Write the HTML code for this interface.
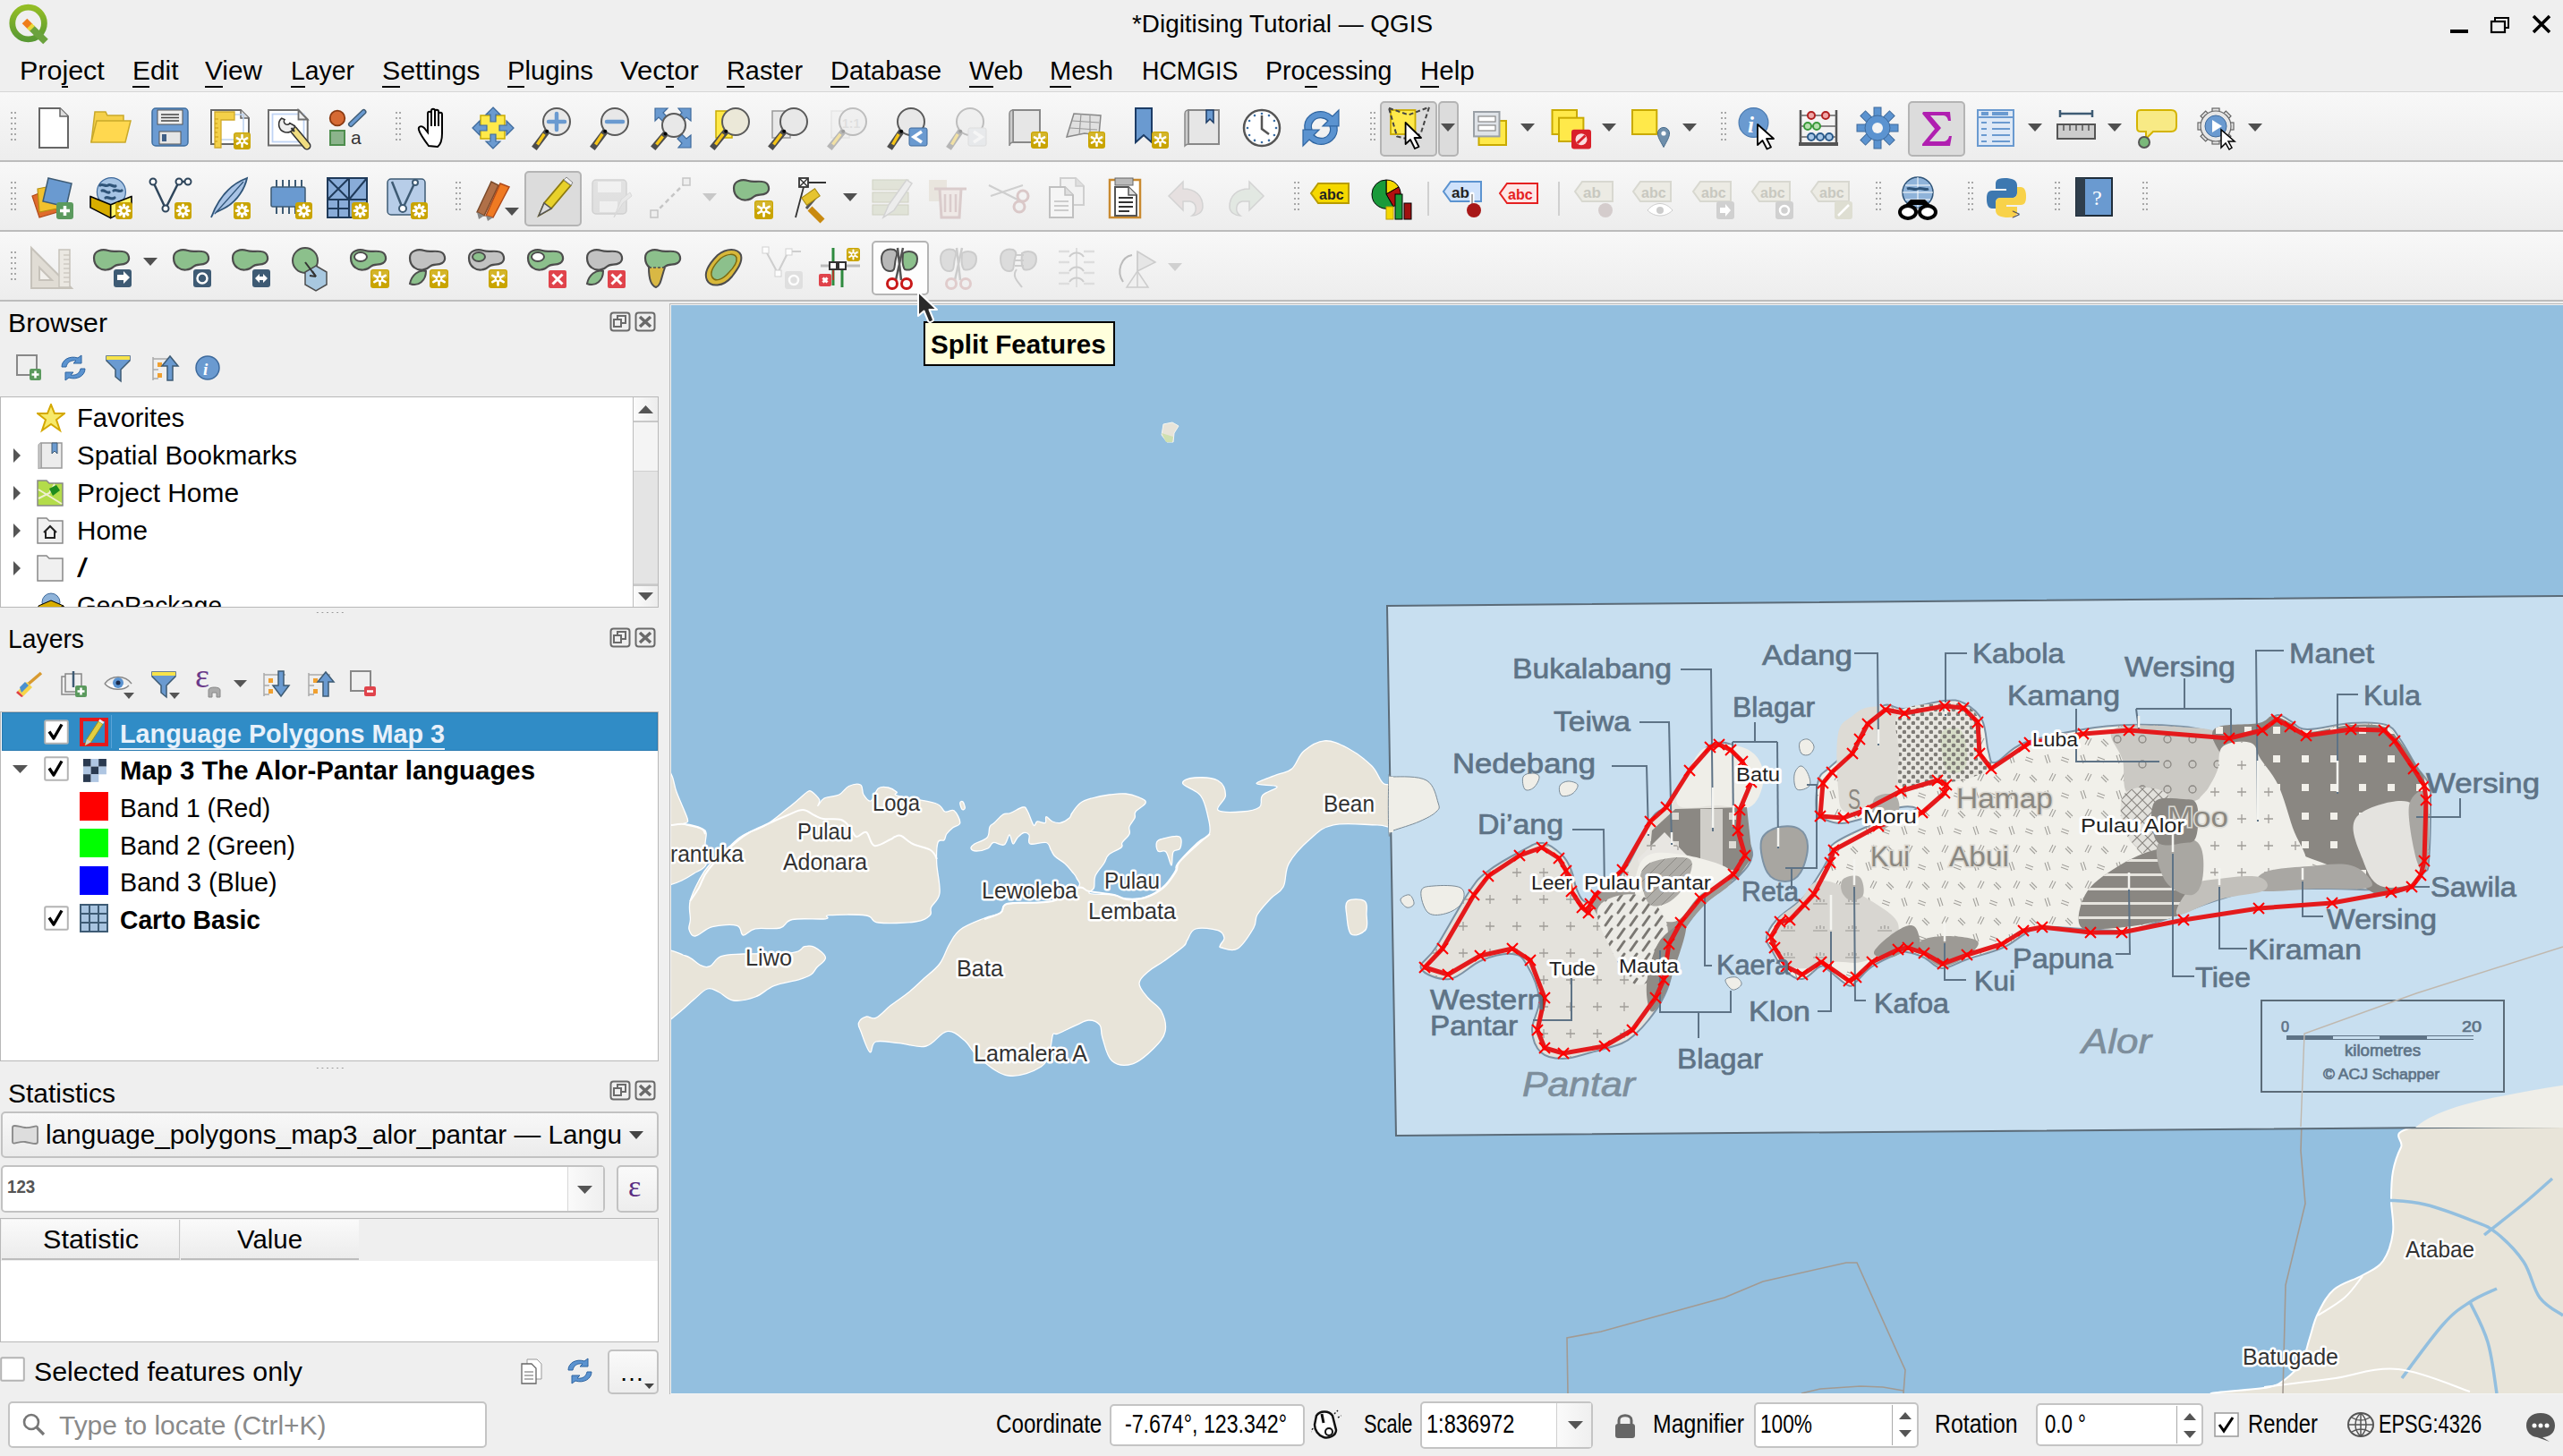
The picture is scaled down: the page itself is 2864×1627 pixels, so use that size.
<!DOCTYPE html><html><head><meta charset="utf-8"><style>
*{box-sizing:border-box}
html,body{margin:0;padding:0}
body{width:2864px;height:1627px;overflow:hidden;position:relative;background:#efefef;font-family:"Liberation Sans",sans-serif;color:#000}
.a{position:absolute}
.t{position:absolute;white-space:pre;line-height:1}
.menu span{position:absolute;top:64px;font-size:29px;white-space:pre;line-height:1}
.u{text-decoration:underline;text-underline-offset:6px;text-decoration-thickness:2px}
.tbrow{position:absolute;left:0;width:2864px;height:78px;background:linear-gradient(#f8f8f8,#ededed);border-bottom:2px solid #bcbcbc}
.hdl{position:absolute;width:8px;height:36px;background-image:radial-gradient(circle,#a8a8a8 1.2px,transparent 1.4px);background-size:4px 6px}
.ic{position:absolute;overflow:visible}
.tree{position:absolute;background:#fff;border:1px solid #b8b8b8}
.ti{position:absolute;font-size:29px;white-space:pre;line-height:1}
</style></head><body>
<div class="t" style="left:1265px;top:13.3px;font-size:28px;color:#000;transform:scaleX(0.9950);transform-origin:0 0;">*Digitising Tutorial — QGIS</div>
<svg class="a" style="left:2730px;top:10px" width="134" height="35" viewBox="0 0 134 35"><rect x="8" y="23" width="20" height="4" fill="#000"/><rect x="58" y="10" width="15" height="11" fill="none" stroke="#000" stroke-width="2"/><rect x="54" y="14" width="15" height="12" fill="#efefef" stroke="#000" stroke-width="2.2"/><path d="M101 8 L119 26 M119 8 L101 26" stroke="#000" stroke-width="3.5"/></svg>
<svg class="a" style="left:0;top:0" width="60" height="52" viewBox="0 0 60 52"><defs><linearGradient id="lg" x1="0" y1="0" x2="0" y2="1"><stop offset="0" stop-color="#93bd25"/><stop offset="1" stop-color="#5a9a34"/></linearGradient></defs><circle cx="31.6" cy="26" r="17.8" fill="none" stroke="url(#lg)" stroke-width="6.8"/><path d="M35 31L51 46.5" stroke="#6ba23e" stroke-width="8"/><path d="M27.5 23.5L34 30" stroke="#ef7d1a" stroke-width="8"/><path d="M33 29L36 32" stroke="#e8d83a" stroke-width="8"/></svg>
<div class="t" style="left:21.5px;top:64.4px;font-size:30px;color:#000;transform:scaleX(1.0153);transform-origin:0 0;">Project</div>
<div class="a" style="left:68.9px;top:96px;width:6.8px;height:2px;background:#000"></div>
<div class="t" style="left:147.5px;top:64.4px;font-size:30px;color:#000;transform:scaleX(0.9962);transform-origin:0 0;">Edit</div>
<div class="a" style="left:147.5px;top:96px;width:19.9px;height:2px;background:#000"></div>
<div class="t" style="left:229.4px;top:64.4px;font-size:30px;color:#000;transform:scaleX(0.9925);transform-origin:0 0;">View</div>
<div class="a" style="left:229.4px;top:96px;width:19.9px;height:2px;background:#000"></div>
<div class="t" style="left:325px;top:64.4px;font-size:30px;color:#000;transform:scaleX(0.9461);transform-origin:0 0;">Layer</div>
<div class="a" style="left:325.0px;top:96px;width:15.8px;height:2px;background:#000"></div>
<div class="t" style="left:427px;top:64.4px;font-size:30px;color:#000;transform:scaleX(1.0101);transform-origin:0 0;">Settings</div>
<div class="a" style="left:427.0px;top:96px;width:20.2px;height:2px;background:#000"></div>
<div class="t" style="left:566.5px;top:64.4px;font-size:30px;color:#000;transform:scaleX(0.9756);transform-origin:0 0;">Plugins</div>
<div class="a" style="left:566.5px;top:96px;width:19.5px;height:2px;background:#000"></div>
<div class="t" style="left:692.5px;top:64.4px;font-size:30px;color:#000;transform:scaleX(1.0323);transform-origin:0 0;">Vector</div>
<div class="a" style="left:744.2px;top:96px;width:8.6px;height:2px;background:#000"></div>
<div class="t" style="left:811.5px;top:64.4px;font-size:30px;color:#000;transform:scaleX(0.9620);transform-origin:0 0;">Raster</div>
<div class="a" style="left:811.5px;top:96px;width:20.8px;height:2px;background:#000"></div>
<div class="t" style="left:928px;top:64.4px;font-size:30px;color:#000;transform:scaleX(0.9655);transform-origin:0 0;">Database</div>
<div class="a" style="left:928.0px;top:96px;width:20.9px;height:2px;background:#000"></div>
<div class="t" style="left:1082.5px;top:64.4px;font-size:30px;color:#000;transform:scaleX(0.9862);transform-origin:0 0;">Web</div>
<div class="a" style="left:1082.5px;top:96px;width:27.9px;height:2px;background:#000"></div>
<div class="t" style="left:1173px;top:64.4px;font-size:30px;color:#000;transform:scaleX(0.9678);transform-origin:0 0;">Mesh</div>
<div class="a" style="left:1173.0px;top:96px;width:24.2px;height:2px;background:#000"></div>
<div class="t" style="left:1275.6px;top:64.4px;font-size:30px;color:#000;transform:scaleX(0.8950);transform-origin:0 0;">HCMGIS</div>
<div class="t" style="left:1413.7px;top:64.4px;font-size:30px;color:#000;transform:scaleX(0.9521);transform-origin:0 0;">Processing</div>
<div class="a" style="left:1458.2px;top:96px;width:14.3px;height:2px;background:#000"></div>
<div class="t" style="left:1587px;top:64.4px;font-size:30px;color:#000;transform:scaleX(0.9838);transform-origin:0 0;">Help</div>
<div class="a" style="left:1587.0px;top:96px;width:21.3px;height:2px;background:#000"></div>
<div class="a" style="left:0;top:102px;width:2864px;height:1px;background:#d6d6d6"></div>
<div class="tbrow" style="top:103px"></div>
<div class="tbrow" style="top:181px"></div>
<div class="tbrow" style="top:259px"></div>
<div class="hdl" style="left:11px;top:123px"></div>
<svg class="ic" style="left:34px;top:119px;opacity:1.0" width="48" height="48" viewBox="0 0 48 48"><path d="M10 2H33L42 11V46H10Z" fill="#fff" stroke="#666" stroke-width="2"/><path d="M33 2V11H42" fill="#ddd" stroke="#666" stroke-width="1.5"/></svg>
<svg class="ic" style="left:100px;top:119px;opacity:1.0" width="48" height="48" viewBox="0 0 48 48"><path d="M2 40L6 6H18L20 10H38V18H10Z" fill="#f5d04a" stroke="#c9a92a" stroke-width="1.5"/><path d="M2 40L8 16H46L40 40Z" fill="#ffd84f" stroke="#c9a92a" stroke-width="1.5"/></svg>
<svg class="ic" style="left:166px;top:119px;opacity:1.0" width="48" height="48" viewBox="0 0 48 48"><rect x="4" y="2" width="40" height="42" rx="4" fill="#6b9bd2" stroke="#3f6e9f" stroke-width="1.5"/><rect x="10" y="4" width="28" height="16" fill="#eee" stroke="#555"/><path d="M14 9H34M14 12.5H34M14 16H34" stroke="#444" stroke-width="1.6"/><rect x="12" y="28" width="24" height="14" fill="#e6e6e6" stroke="#555"/><rect x="15" y="31" width="5" height="8" fill="#3f5f86"/></svg>
<svg class="ic" style="left:232px;top:119px;opacity:1.0" width="48" height="48" viewBox="0 0 48 48"><path d="M4 4H37L46 13V42H4Z" fill="#fff" stroke="#666" stroke-width="2"/><path d="M37 4V13H46" fill="#ddd" stroke="#666" stroke-width="1.5"/><rect x="12" y="9" width="28" height="28" fill="none" stroke="#bcd2f0" stroke-width="1.5"/><path d="M8 6H30V15H15V46H8Z" fill="#f3d049" stroke="#cfa92a" stroke-width="1.3"/><path d="M8 14H12M8 19H11M8 24H12M8 29H11M8 34H12M8 39H11" stroke="#c99a10" stroke-width="1.2"/><rect x="29" y="29" width="19" height="19" rx="3" fill="#c9a400"/><rect x="30" y="30" width="17" height="8.5" rx="2" fill="#d9bc3c" opacity="0.7"/><g stroke="#fff" stroke-width="2.5" stroke-linecap="round"><line x1="38.5" y1="38.5" x2="38.5" y2="45.0"/><line x1="38.5" y1="38.5" x2="38.5" y2="32.0"/><line x1="38.5" y1="38.5" x2="44.1" y2="41.7"/><line x1="38.5" y1="38.5" x2="32.9" y2="41.7"/><line x1="38.5" y1="38.5" x2="32.9" y2="35.3"/><line x1="38.5" y1="38.5" x2="44.1" y2="35.3"/></g><circle cx="38.5" cy="38.5" r="3.2" fill="#fff"/><circle cx="38.5" cy="38.5" r="1.5" fill="#c9a400"/></svg>
<svg class="ic" style="left:298px;top:119px;opacity:1.0" width="48" height="48" viewBox="0 0 48 48"><path d="M2 4H35.5L45.7 14.5V43.5H2Z" fill="#fff" stroke="#6e6e6e" stroke-width="2"/><rect x="6.5" y="8.5" width="35" height="31" fill="none" stroke="#c0d4f4" stroke-width="1.8"/><path d="M35.5 4V14.5H45.7Z" fill="#eee" stroke="#6e6e6e" stroke-width="1.8"/><path d="M30 26L45 44" stroke="#333" stroke-width="9" stroke-linecap="round"/><path d="M30 26L45 44" stroke="#f0dc80" stroke-width="6" stroke-linecap="round"/><path d="M18 12A9 9 0 1 0 31 23L26 19A3.5 3.5 0 0 1 21 14Z" fill="#eee" stroke="#333" stroke-width="1.6" transform="rotate(-10 24 20)"/><path d="M27.5 24L31 28" stroke="#333" stroke-width="2"/></svg>
<svg class="ic" style="left:364px;top:119px;opacity:1.0" width="48" height="48" viewBox="0 0 48 48"><circle cx="13" cy="13" r="8.3" fill="#d66a34" stroke="#8a3a12" stroke-width="1.8"/><path d="M28 20L42.5 6" stroke="#3e5b74" stroke-width="6" stroke-linecap="round"/><path d="M28 20L42.5 6" stroke="#6a9ad0" stroke-width="3.2" stroke-linecap="round"/><rect x="5" y="27" width="16" height="16" fill="#8cb48c" stroke="#4e8e4e" stroke-width="2"/><text x="28" y="42" font-family="Liberation Sans" font-size="21" fill="#333">a</text></svg>
<div class="hdl" style="left:441px;top:123px"></div>
<svg class="ic" style="left:463px;top:119px;opacity:1.0" width="48" height="48" viewBox="0 0 48 48"><path d="M16 44C10 36 6 30 5 26C4 22 8 21 11 24L15 29V8C15 5 19 5 19 8V22V5C19 2 23 2 23 5V22V6C23 3 27 3 27 6V22V9C27 6 31 6 31 9V30C31 38 30 42 26 45Z" fill="#fff" stroke="#000" stroke-width="2"/></svg>
<svg class="ic" style="left:527px;top:119px;opacity:1.0" width="48" height="48" viewBox="0 0 48 48"><rect x="10" y="10" width="27" height="26" fill="#ffe94a" stroke="#c9aa00" stroke-width="1.5"/><path d="M24 1L32 9H27V17H21V9H16ZM24 47L16 39H21V31H27V39H32ZM1 24L9 16V21H17V27H9V32ZM47 24L39 32V27H31V21H39V16Z" fill="#6a9ad0" stroke="#3e6a9c" stroke-width="1.2"/></svg>
<svg class="ic" style="left:593px;top:119px;opacity:1.0" width="48" height="48" viewBox="0 0 48 48"><path d="M18.2 27.8 L6 44" stroke="#4d4d4d" stroke-width="7" stroke-linecap="square"/><path d="M15.2 30.8 L7.5 42.5" stroke="#f5c518" stroke-width="3.5"/><circle cx="29" cy="17" r="15" fill="#e8e8e8" stroke="#5a5a5a" stroke-width="2"/><circle cx="18.2" cy="27.8" r="2" fill="#000"/><path d="M29 8V26M20 17H38" stroke="#6a9ad0" stroke-width="4.5" stroke-linecap="round"/></svg>
<svg class="ic" style="left:658px;top:119px;opacity:1.0" width="48" height="48" viewBox="0 0 48 48"><path d="M18.2 27.8 L6 44" stroke="#4d4d4d" stroke-width="7" stroke-linecap="square"/><path d="M15.2 30.8 L7.5 42.5" stroke="#f5c518" stroke-width="3.5"/><circle cx="29" cy="17" r="15" fill="#e8e8e8" stroke="#5a5a5a" stroke-width="2"/><circle cx="18.2" cy="27.8" r="2" fill="#000"/><path d="M20 17H38" stroke="#6a9ad0" stroke-width="4.5" stroke-linecap="round"/></svg>
<svg class="ic" style="left:726px;top:119px;opacity:1.0" width="48" height="48" viewBox="0 0 48 48"><path d="M6 2H20L15 7L20 12L15 17L10 12L6 16ZM46 2V16L41 12L36 17L31 12L36 7L32 2ZM46 46H32L36 41L31 36L36 31L41 36L46 32Z" fill="#6a9ad0" stroke="#3e6a9c" stroke-width="1.2"/><path d="M17.6 30.4 L6 44" stroke="#4d4d4d" stroke-width="7" stroke-linecap="square"/><path d="M14.6 33.4 L7.5 42.5" stroke="#f5c518" stroke-width="3.5"/><circle cx="27" cy="21" r="13" fill="#e8e8e8" stroke="#5a5a5a" stroke-width="2"/><circle cx="17.6" cy="30.4" r="2" fill="#000"/></svg>
<svg class="ic" style="left:792px;top:119px;opacity:1.0" width="48" height="48" viewBox="0 0 48 48"><rect x="8" y="5" width="18" height="30" fill="#ffe94a" stroke="#c9aa00" stroke-width="1.5"/><path d="M19.2 27.8 L6 44" stroke="#4d4d4d" stroke-width="7" stroke-linecap="square"/><path d="M16.2 30.8 L7.5 42.5" stroke="#f5c518" stroke-width="3.5"/><circle cx="30" cy="17" r="15" fill="#ebe8d8" stroke="#5a5a5a" stroke-width="2"/><circle cx="19.2" cy="27.8" r="2" fill="#000"/></svg>
<svg class="ic" style="left:857px;top:119px;opacity:1.0" width="48" height="48" viewBox="0 0 48 48"><rect x="6" y="5" width="20" height="30" fill="#e8e8e8" stroke="#999" stroke-width="1.5"/><path d="M19.2 27.8 L6 44" stroke="#4d4d4d" stroke-width="7" stroke-linecap="square"/><path d="M16.2 30.8 L7.5 42.5" stroke="#f5c518" stroke-width="3.5"/><circle cx="30" cy="17" r="15" fill="#e8e8e8" stroke="#5a5a5a" stroke-width="2"/><circle cx="19.2" cy="27.8" r="2" fill="#000"/></svg>
<svg class="ic" style="left:923px;top:119px;opacity:0.35" width="48" height="48" viewBox="0 0 48 48"><rect x="6" y="5" width="20" height="30" fill="#eee" stroke="#ccc" stroke-width="1.5"/><path d="M19.2 27.8 L6 44" stroke="#4d4d4d" stroke-width="7" stroke-linecap="square"/><path d="M16.2 30.8 L7.5 42.5" stroke="#f5c518" stroke-width="3.5"/><circle cx="30" cy="17" r="15" fill="#e8e8e8" stroke="#5a5a5a" stroke-width="2"/><circle cx="19.2" cy="27.8" r="2" fill="#000"/><text x="18" y="24" font-family="Liberation Sans" font-weight="bold" font-size="14" fill="#bbb">1:1</text></svg>
<svg class="ic" style="left:990px;top:119px;opacity:1.0" width="48" height="48" viewBox="0 0 48 48"><path d="M17.2 27.8 L6 44" stroke="#4d4d4d" stroke-width="7" stroke-linecap="square"/><path d="M14.2 30.8 L7.5 42.5" stroke="#f5c518" stroke-width="3.5"/><circle cx="28" cy="17" r="15" fill="#e8e8e8" stroke="#5a5a5a" stroke-width="2"/><circle cx="17.2" cy="27.8" r="2" fill="#000"/><rect x="26" y="24" width="20" height="20" rx="2" fill="#6a9ad0" stroke="#3e6a9c"/><path d="M40 28L31 34L40 40" fill="none" stroke="#fff" stroke-width="3.5"/></svg>
<svg class="ic" style="left:1056px;top:119px;opacity:0.35" width="48" height="48" viewBox="0 0 48 48"><path d="M17.2 27.8 L6 44" stroke="#4d4d4d" stroke-width="7" stroke-linecap="square"/><path d="M14.2 30.8 L7.5 42.5" stroke="#f5c518" stroke-width="3.5"/><circle cx="28" cy="17" r="15" fill="#e8e8e8" stroke="#5a5a5a" stroke-width="2"/><circle cx="17.2" cy="27.8" r="2" fill="#000"/><rect x="26" y="24" width="20" height="20" rx="2" fill="#d8dde2" stroke="#bbb"/><path d="M32 28L41 34L32 40" fill="none" stroke="#fff" stroke-width="3.5"/></svg>
<svg class="ic" style="left:1124px;top:119px;opacity:1.0" width="48" height="48" viewBox="0 0 48 48"><path d="M8 4H38V40H8Z" fill="#e6e6e6" stroke="#888" stroke-width="2"/><path d="M4 8C4 4 8 4 8 4V40C6 40 4 42 4 44Z" fill="#ccc" stroke="#888" stroke-width="1.5"/><rect x="28" y="28" width="19" height="19" rx="3" fill="#c9a400"/><rect x="29" y="29" width="17" height="8.5" rx="2" fill="#d9bc3c" opacity="0.7"/><g stroke="#fff" stroke-width="2.5" stroke-linecap="round"><line x1="37.5" y1="37.5" x2="37.5" y2="44.0"/><line x1="37.5" y1="37.5" x2="37.5" y2="31.0"/><line x1="37.5" y1="37.5" x2="43.1" y2="40.7"/><line x1="37.5" y1="37.5" x2="31.9" y2="40.7"/><line x1="37.5" y1="37.5" x2="31.9" y2="34.3"/><line x1="37.5" y1="37.5" x2="43.1" y2="34.3"/></g><circle cx="37.5" cy="37.5" r="3.2" fill="#fff"/><circle cx="37.5" cy="37.5" r="1.5" fill="#c9a400"/></svg>
<svg class="ic" style="left:1188px;top:119px;opacity:1.0" width="48" height="48" viewBox="0 0 48 48"><path d="M4 34L12 8L42 10L40 32L24 30Z" fill="#e0e0e0" stroke="#888" stroke-width="1.5"/><path d="M10 16L40 18M8 24L38 26M20 8L18 32M30 9L30 30" stroke="#999" stroke-width="1.2"/><rect x="28" y="28" width="19" height="19" rx="3" fill="#c9a400"/><rect x="29" y="29" width="17" height="8.5" rx="2" fill="#d9bc3c" opacity="0.7"/><g stroke="#fff" stroke-width="2.5" stroke-linecap="round"><line x1="37.5" y1="37.5" x2="37.5" y2="44.0"/><line x1="37.5" y1="37.5" x2="37.5" y2="31.0"/><line x1="37.5" y1="37.5" x2="43.1" y2="40.7"/><line x1="37.5" y1="37.5" x2="31.9" y2="40.7"/><line x1="37.5" y1="37.5" x2="31.9" y2="34.3"/><line x1="37.5" y1="37.5" x2="43.1" y2="34.3"/></g><circle cx="37.5" cy="37.5" r="3.2" fill="#fff"/><circle cx="37.5" cy="37.5" r="1.5" fill="#c9a400"/></svg>
<svg class="ic" style="left:1261px;top:119px;opacity:1.0" width="48" height="48" viewBox="0 0 48 48"><path d="M8 2H26V40L17 32L8 40Z" fill="#6a9ad0" stroke="#1c3c66" stroke-width="2"/><rect x="26" y="28" width="19" height="19" rx="3" fill="#c9a400"/><rect x="27" y="29" width="17" height="8.5" rx="2" fill="#d9bc3c" opacity="0.7"/><g stroke="#fff" stroke-width="2.5" stroke-linecap="round"><line x1="35.5" y1="37.5" x2="35.5" y2="44.0"/><line x1="35.5" y1="37.5" x2="35.5" y2="31.0"/><line x1="35.5" y1="37.5" x2="41.1" y2="40.7"/><line x1="35.5" y1="37.5" x2="29.9" y2="40.7"/><line x1="35.5" y1="37.5" x2="29.9" y2="34.3"/><line x1="35.5" y1="37.5" x2="41.1" y2="34.3"/></g><circle cx="35.5" cy="37.5" r="3.2" fill="#fff"/><circle cx="35.5" cy="37.5" r="1.5" fill="#c9a400"/></svg>
<svg class="ic" style="left:1320px;top:119px;opacity:1.0" width="48" height="48" viewBox="0 0 48 48"><path d="M8 4H42V42H8Z" fill="#e6e6e6" stroke="#888" stroke-width="2"/><path d="M4 8C4 4 8 4 8 4V42C6 42 4 44 4 44Z" fill="#ccc" stroke="#888" stroke-width="1.5"/><path d="M28 4H36V18L32 14L28 18Z" fill="#6a9ad0" stroke="#1c3c66" stroke-width="1.5"/></svg>
<svg class="ic" style="left:1386px;top:119px;opacity:1.0" width="48" height="48" viewBox="0 0 48 48"><circle cx="24" cy="24" r="20" fill="#fff" stroke="#555" stroke-width="2.5"/><path d="M24 10V25L32 31" fill="none" stroke="#555" stroke-width="2.5"/><circle cx="40.0" cy="24.0" r="1.3" fill="#3a6ea5"/><circle cx="37.9" cy="32.0" r="1.3" fill="#3a6ea5"/><circle cx="32.0" cy="37.9" r="1.3" fill="#3a6ea5"/><circle cx="24.0" cy="40.0" r="1.3" fill="#3a6ea5"/><circle cx="16.0" cy="37.9" r="1.3" fill="#3a6ea5"/><circle cx="10.1" cy="32.0" r="1.3" fill="#3a6ea5"/><circle cx="8.0" cy="24.0" r="1.3" fill="#3a6ea5"/><circle cx="10.1" cy="16.0" r="1.3" fill="#3a6ea5"/><circle cx="16.0" cy="10.1" r="1.3" fill="#3a6ea5"/><circle cx="24.0" cy="8.0" r="1.3" fill="#3a6ea5"/><circle cx="32.0" cy="10.1" r="1.3" fill="#3a6ea5"/><circle cx="37.9" cy="16.0" r="1.3" fill="#3a6ea5"/></svg>
<svg class="ic" style="left:1452px;top:119px;opacity:1.0" width="48" height="48" viewBox="0 0 48 48"><path d="M6 26C4 12 16 4 28 6C32 7 35 9 37 11L44 4V22H26L32 16C28 12 20 11 16 16C13 19 13 23 14 26Z" fill="#5b93d0" stroke="#2e64a0" stroke-width="1.2"/><path d="M42 22C44 36 32 44 20 42C16 41 13 39 11 37L4 44V26H22L16 32C20 36 28 37 32 32C35 29 35 25 34 22Z" fill="#5b93d0" stroke="#2e64a0" stroke-width="1.2"/></svg>
<div class="hdl" style="left:1530px;top:123px"></div>
<div class="a" style="left:1542px;top:113px;width:64px;height:62px;background:#dcdcdc;border:2px solid #b4b4b4;border-radius:5px"></div>
<div class="a" style="left:1607px;top:113px;width:23px;height:62px;background:#dcdcdc;border:2px solid #b4b4b4;border-radius:5px"></div>
<svg class="ic" style="left:1549px;top:119px;opacity:1.0" width="48" height="48" viewBox="0 0 48 48"><rect x="5" y="4" width="27.5" height="27" fill="#ffe94a" stroke="#c9aa00" stroke-width="1.8"/><path d="M3 1.8L25 9.4L48 0.7L39 29L30 37.8L12 33.4Z" fill="none" stroke="#444" stroke-width="2" stroke-dasharray="5 3"/><path d="M21.6 18L21.6 42L27 37L32 47L36.5 45L31.5 35H39Z" fill="#fff" stroke="#000" stroke-width="1.8" stroke-linejoin="round"/></svg>
<svg class="ic" style="left:1610px;top:138px" width="16" height="10" viewBox="0 0 16 10"><path d="M0 0H16L8 9Z" fill="#505050"/></svg>
<svg class="ic" style="left:1641px;top:119px;opacity:1.0" width="48" height="48" viewBox="0 0 48 48"><rect x="11.5" y="16" width="30.5" height="27" fill="#ffe94a" stroke="#c9aa00" stroke-width="2"/><rect x="6" y="6" width="28.5" height="27.4" fill="#dfe3e8" stroke="#9aa0a6" stroke-width="2"/><rect x="11" y="11" width="19" height="6" fill="#fff" stroke="#888" stroke-width="1.2"/><rect x="11" y="21" width="19" height="6" fill="#fff" stroke="#888" stroke-width="1.2"/></svg>
<svg class="ic" style="left:1699px;top:138px" width="16" height="10" viewBox="0 0 16 10"><path d="M0 0H16L8 9Z" fill="#505050"/></svg>
<svg class="ic" style="left:1732px;top:119px;opacity:1.0" width="48" height="48" viewBox="0 0 48 48"><rect x="2.5" y="4" width="27.5" height="27" fill="#ffe94a" stroke="#c9aa00" stroke-width="2"/><rect x="10" y="12.7" width="27.4" height="26.3" fill="#ffe94a" stroke="#c9aa00" stroke-width="2"/><rect x="24" y="25.8" width="22" height="21.8" rx="3" fill="#d9202a"/><circle cx="35" cy="36.7" r="6.5" fill="#fff" opacity="0.85"/><path d="M30.5 41L39.5 32.5" stroke="#d9202a" stroke-width="3"/></svg>
<svg class="ic" style="left:1790px;top:138px" width="16" height="10" viewBox="0 0 16 10"><path d="M0 0H16L8 9Z" fill="#505050"/></svg>
<svg class="ic" style="left:1820px;top:119px;opacity:1.0" width="48" height="48" viewBox="0 0 48 48"><rect x="4" y="4" width="27.3" height="27" fill="#ffe94a" stroke="#c9aa00" stroke-width="2"/><path d="M39 45.5C35 38 32.4 34 32.4 30A6.5 6.5 0 0 1 45.5 30C45.5 34 43 38 39 45.5Z" fill="#6f8fab" stroke="#466a8a"/><circle cx="39" cy="30" r="2.6" fill="#fff"/></svg>
<svg class="ic" style="left:1880px;top:138px" width="16" height="10" viewBox="0 0 16 10"><path d="M0 0H16L8 9Z" fill="#505050"/></svg>
<div class="hdl" style="left:1922px;top:123px"></div>
<svg class="ic" style="left:1940px;top:119px;opacity:1.0" width="48" height="48" viewBox="0 0 48 48"><circle cx="19.5" cy="18" r="16.4" fill="#6a9ad0" stroke="#4a7ab0" stroke-width="1.2"/><text x="13" y="29" font-family="Liberation Serif" font-style="italic" font-weight="bold" font-size="25" fill="#fff">i</text><path d="M24 20L24 43L29.5 38L34.5 47.5L39 45.5L34 36H42Z" fill="#fff" stroke="#000" stroke-width="1.8" stroke-linejoin="round"/></svg>
<svg class="ic" style="left:2008px;top:119px;opacity:1.0" width="48" height="48" viewBox="0 0 48 48"><path d="M4 4V44M44 4V44" stroke="#555" stroke-width="2.5"/><rect x="2" y="40" width="44" height="4" fill="#555"/><path d="M4 10H44M4 22H44M4 34H44" stroke="#666" stroke-width="1.5"/><circle cx="16" cy="10" r="4" fill="#f0a8a8" stroke="#b02020" stroke-width="2"/><circle cx="32" cy="10" r="4" fill="#f0a8a8" stroke="#b02020" stroke-width="2"/><circle cx="12" cy="22" r="4" fill="#b8e0b0" stroke="#3a9a3a" stroke-width="2"/><circle cx="22" cy="22" r="4" fill="#b8e0b0" stroke="#3a9a3a" stroke-width="2"/><circle cx="16" cy="34" r="4" fill="#a8c8e8" stroke="#2a5a8a" stroke-width="2"/><circle cx="26" cy="34" r="4" fill="#a8c8e8" stroke="#2a5a8a" stroke-width="2"/><circle cx="36" cy="34" r="4" fill="#a8c8e8" stroke="#2a5a8a" stroke-width="2"/></svg>
<svg class="ic" style="left:2074px;top:119px;opacity:1.0" width="48" height="48" viewBox="0 0 48 48"><g fill="#5b93d0" stroke="#3e6a9c" stroke-width="1"><rect x="20" y="1" width="8" height="10" transform="rotate(0 24 24)"/><rect x="20" y="1" width="8" height="10" transform="rotate(45 24 24)"/><rect x="20" y="1" width="8" height="10" transform="rotate(90 24 24)"/><rect x="20" y="1" width="8" height="10" transform="rotate(135 24 24)"/><rect x="20" y="1" width="8" height="10" transform="rotate(180 24 24)"/><rect x="20" y="1" width="8" height="10" transform="rotate(225 24 24)"/><rect x="20" y="1" width="8" height="10" transform="rotate(270 24 24)"/><rect x="20" y="1" width="8" height="10" transform="rotate(315 24 24)"/><circle cx="24" cy="24" r="14"/></g><circle cx="24" cy="24" r="6" fill="#f4f4f4"/></svg>
<div class="a" style="left:2132px;top:113px;width:64px;height:62px;background:#dcdcdc;border:2px solid #b4b4b4;border-radius:5px"></div>
<svg class="ic" style="left:2140px;top:119px;opacity:1.0" width="48" height="48" viewBox="0 0 48 48"><path d="M9 6H39L40 16H37C36 11 34 10 30 10H17L29 24L16 39H31C35 39 37 37 38 33H41L39 44H8V42L22 25L8 8Z" fill="#b01fb0"/></svg>
<svg class="ic" style="left:2206px;top:119px;opacity:1.0" width="48" height="48" viewBox="0 0 48 48"><rect x="4" y="4" width="40" height="40" fill="#dfe9f6" stroke="#6a9ad0" stroke-width="2"/><path d="M4 12H44" stroke="#6a9ad0" stroke-width="2"/><rect x="8" y="6" width="8" height="4" fill="#6a9ad0"/><rect x="20" y="6" width="18" height="4" fill="#6a9ad0"/><path d="M8 18H14M20 18H40" stroke="#6a9ad0" stroke-width="2"/><path d="M8 25H14M20 25H40" stroke="#6a9ad0" stroke-width="2"/><path d="M8 32H14M20 32H40" stroke="#6a9ad0" stroke-width="2"/><path d="M8 39H14M20 39H40" stroke="#6a9ad0" stroke-width="2"/></svg>
<svg class="ic" style="left:2266px;top:138px" width="16" height="10" viewBox="0 0 16 10"><path d="M0 0H16L8 9Z" fill="#505050"/></svg>
<svg class="ic" style="left:2296px;top:119px;opacity:1.0" width="48" height="48" viewBox="0 0 48 48"><path d="M6 4V12M42 4V12M6 8H42" stroke="#3e5b74" stroke-width="2.5"/><rect x="3" y="20" width="42" height="16" fill="#ccc" stroke="#555" stroke-width="2"/><path d="M10 20V27" stroke="#555" stroke-width="1.5"/><path d="M17 20V27" stroke="#555" stroke-width="1.5"/><path d="M24 20V27" stroke="#555" stroke-width="1.5"/><path d="M31 20V27" stroke="#555" stroke-width="1.5"/><path d="M38 20V27" stroke="#555" stroke-width="1.5"/></svg>
<svg class="ic" style="left:2355px;top:138px" width="16" height="10" viewBox="0 0 16 10"><path d="M0 0H16L8 9Z" fill="#505050"/></svg>
<svg class="ic" style="left:2386px;top:119px;opacity:1.0" width="48" height="48" viewBox="0 0 48 48"><path d="M6 4H40C44 4 46 6 46 10V22C46 26 44 28 40 28H20L12 36V28H6C2 28 2 26 2 22V10C2 6 2 4 6 4Z" fill="#f8ea85" stroke="#d4b400" stroke-width="2"/><circle cx="10" cy="40" r="6" fill="#7ab87a" stroke="#555" stroke-width="2"/></svg>
<svg class="ic" style="left:2452px;top:119px;opacity:1.0" width="48" height="48" viewBox="0 0 48 48"><g fill="#e6e6e6" stroke="#666" stroke-width="1.2"><rect x="20" y="2" width="8" height="8" transform="rotate(0 24 22)"/><rect x="20" y="2" width="8" height="8" transform="rotate(45 24 22)"/><rect x="20" y="2" width="8" height="8" transform="rotate(90 24 22)"/><rect x="20" y="2" width="8" height="8" transform="rotate(135 24 22)"/><rect x="20" y="2" width="8" height="8" transform="rotate(180 24 22)"/><rect x="20" y="2" width="8" height="8" transform="rotate(225 24 22)"/><rect x="20" y="2" width="8" height="8" transform="rotate(270 24 22)"/><rect x="20" y="2" width="8" height="8" transform="rotate(315 24 22)"/><circle cx="24" cy="22" r="17"/></g><circle cx="24" cy="22" r="12" fill="#6a9ad0" stroke="#3e6a9c"/><path d="M20 15V29L31 22Z" fill="#fff"/><path d="M30 26L30 46L35 41L39 48L42 46L38 39L45 39Z" fill="#fff" stroke="#000" stroke-width="1.5"/></svg>
<svg class="ic" style="left:2512px;top:138px" width="16" height="10" viewBox="0 0 16 10"><path d="M0 0H16L8 9Z" fill="#505050"/></svg>
<div class="hdl" style="left:11px;top:201px"></div>
<svg class="ic" style="left:34px;top:197px;opacity:1.0" width="48" height="48" viewBox="0 0 48 48"><path d="M2 22L22 14L30 40L10 46Z" fill="#e06c2c" stroke="#b04a1a" stroke-width="1.2"/><path d="M8 14L28 10L30 36L10 40Z" fill="#f2c12e" stroke="#b48f10" stroke-width="1.2"/><path d="M20 2L46 8L40 34L14 28Z" fill="#6a9ad0" stroke="#3e5b74" stroke-width="1.5"/><rect x="29" y="29" width="19" height="19" rx="3" fill="#5b9a5e"/><path d="M38.5 33V44M33 38.5H44" stroke="#fff" stroke-width="3.5"/></svg>
<svg class="ic" style="left:100px;top:197px;opacity:1.0" width="48" height="48" viewBox="0 0 48 48"><circle cx="24.4" cy="17.6" r="16" fill="#a6c4e4" stroke="#3e6a9c" stroke-width="1.2"/><path d="M12 10C15 8 18 12 21 10C23 8 26 12 29 11M14 16C17 15 19 19 22 18M27 16C30 14 33 18 36 16M18 24C21 22 24 27 28 24" stroke="#2f5478" stroke-width="3.2" fill="none" stroke-linecap="round"/><path d="M1 22.4L23.7 31.7V46.6L1 34.9Z" fill="#d8ad00" stroke="#000" stroke-width="1.6" stroke-linejoin="round"/><path d="M23.7 31.7L47 22.4V34.9L23.7 46.6Z" fill="#fff36a" stroke="#000" stroke-width="1.6" stroke-linejoin="round"/><rect x="29" y="29" width="19" height="19" rx="3" fill="#c9a400"/><g stroke="#fff" stroke-width="3.2" stroke-linecap="round"><line x1="38.5" y1="38.5" x2="44.8" y2="38.5"/><line x1="38.5" y1="38.5" x2="42.9" y2="42.9"/><line x1="38.5" y1="38.5" x2="38.5" y2="44.8"/><line x1="38.5" y1="38.5" x2="34.1" y2="42.9"/><line x1="38.5" y1="38.5" x2="32.2" y2="38.5"/><line x1="38.5" y1="38.5" x2="34.1" y2="34.1"/><line x1="38.5" y1="38.5" x2="38.5" y2="32.2"/><line x1="38.5" y1="38.5" x2="42.9" y2="34.1"/></g><circle cx="38.5" cy="38.5" r="2.3" fill="#c9a400"/></svg>
<svg class="ic" style="left:166px;top:197px;opacity:1.0" width="48" height="48" viewBox="0 0 48 48"><path d="M5 6L19 36L34 6H44" fill="none" stroke="#2f465c" stroke-width="2.5"/><circle cx="5" cy="6" r="3.5" fill="#fff" stroke="#2f465c" stroke-width="2"/><circle cx="19" cy="36" r="3.5" fill="#fff" stroke="#2f465c" stroke-width="2"/><circle cx="34" cy="6" r="3.5" fill="#fff" stroke="#2f465c" stroke-width="2"/><circle cx="44" cy="6" r="3.5" fill="#fff" stroke="#2f465c" stroke-width="2"/><rect x="29" y="29" width="19" height="19" rx="3" fill="#c9a400"/><g stroke="#fff" stroke-width="3.2" stroke-linecap="round"><line x1="38.5" y1="38.5" x2="44.8" y2="38.5"/><line x1="38.5" y1="38.5" x2="42.9" y2="42.9"/><line x1="38.5" y1="38.5" x2="38.5" y2="44.8"/><line x1="38.5" y1="38.5" x2="34.1" y2="42.9"/><line x1="38.5" y1="38.5" x2="32.2" y2="38.5"/><line x1="38.5" y1="38.5" x2="34.1" y2="34.1"/><line x1="38.5" y1="38.5" x2="38.5" y2="32.2"/><line x1="38.5" y1="38.5" x2="42.9" y2="34.1"/></g><circle cx="38.5" cy="38.5" r="2.3" fill="#c9a400"/></svg>
<svg class="ic" style="left:232px;top:197px;opacity:1.0" width="48" height="48" viewBox="0 0 48 48"><path d="M4 46C10 30 22 10 44 2C42 12 34 28 18 36L10 40" fill="#a9c4e6" stroke="#2f5478" stroke-width="1.8"/><path d="M8 42L40 6" stroke="#2f5478" stroke-width="1.2"/><rect x="29" y="29" width="19" height="19" rx="3" fill="#c9a400"/><g stroke="#fff" stroke-width="3.2" stroke-linecap="round"><line x1="38.5" y1="38.5" x2="44.8" y2="38.5"/><line x1="38.5" y1="38.5" x2="42.9" y2="42.9"/><line x1="38.5" y1="38.5" x2="38.5" y2="44.8"/><line x1="38.5" y1="38.5" x2="34.1" y2="42.9"/><line x1="38.5" y1="38.5" x2="32.2" y2="38.5"/><line x1="38.5" y1="38.5" x2="34.1" y2="34.1"/><line x1="38.5" y1="38.5" x2="38.5" y2="32.2"/><line x1="38.5" y1="38.5" x2="42.9" y2="34.1"/></g><circle cx="38.5" cy="38.5" r="2.3" fill="#c9a400"/></svg>
<svg class="ic" style="left:301px;top:197px;opacity:1.0" width="48" height="48" viewBox="0 0 48 48"><rect x="2" y="12" width="38" height="22" rx="2" fill="#6a9ad0" stroke="#3e5b74" stroke-width="1.5"/><path d="M8 4V12M8 34V42" stroke="#3e5b74" stroke-width="2"/><path d="M15 4V12M15 34V42" stroke="#3e5b74" stroke-width="2"/><path d="M22 4V12M22 34V42" stroke="#3e5b74" stroke-width="2"/><path d="M29 4V12M29 34V42" stroke="#3e5b74" stroke-width="2"/><path d="M36 4V12M36 34V42" stroke="#3e5b74" stroke-width="2"/><rect x="29" y="29" width="19" height="19" rx="3" fill="#c9a400"/><g stroke="#fff" stroke-width="3.2" stroke-linecap="round"><line x1="38.5" y1="38.5" x2="44.8" y2="38.5"/><line x1="38.5" y1="38.5" x2="42.9" y2="42.9"/><line x1="38.5" y1="38.5" x2="38.5" y2="44.8"/><line x1="38.5" y1="38.5" x2="34.1" y2="42.9"/><line x1="38.5" y1="38.5" x2="32.2" y2="38.5"/><line x1="38.5" y1="38.5" x2="34.1" y2="34.1"/><line x1="38.5" y1="38.5" x2="38.5" y2="32.2"/><line x1="38.5" y1="38.5" x2="42.9" y2="34.1"/></g><circle cx="38.5" cy="38.5" r="2.3" fill="#c9a400"/></svg>
<svg class="ic" style="left:364px;top:197px;opacity:1.0" width="48" height="48" viewBox="0 0 48 48"><rect x="2" y="2" width="44" height="44" fill="#89acd8" stroke="#1f3a5a" stroke-width="2"/><path d="M2 2L26 26M26 2L2 26M26 2V46M2 26H46M26 26L46 2M14 26V46M2 36H26" stroke="#1f3a5a" stroke-width="2"/><rect x="29" y="29" width="19" height="19" rx="3" fill="#c9a400"/><g stroke="#fff" stroke-width="3.2" stroke-linecap="round"><line x1="38.5" y1="38.5" x2="44.8" y2="38.5"/><line x1="38.5" y1="38.5" x2="42.9" y2="42.9"/><line x1="38.5" y1="38.5" x2="38.5" y2="44.8"/><line x1="38.5" y1="38.5" x2="34.1" y2="42.9"/><line x1="38.5" y1="38.5" x2="32.2" y2="38.5"/><line x1="38.5" y1="38.5" x2="34.1" y2="34.1"/><line x1="38.5" y1="38.5" x2="38.5" y2="32.2"/><line x1="38.5" y1="38.5" x2="42.9" y2="34.1"/></g><circle cx="38.5" cy="38.5" r="2.3" fill="#c9a400"/></svg>
<svg class="ic" style="left:430px;top:197px;opacity:1.0" width="48" height="48" viewBox="0 0 48 48"><rect x="3" y="3" width="42" height="40" rx="4" fill="#b7cde8" stroke="#3e5b74" stroke-width="1.5"/><path d="M8 6L20 36L34 6" fill="none" stroke="#3e5b74" stroke-width="2.5"/><circle cx="20" cy="36" r="4" fill="#fff" stroke="#3e5b74" stroke-width="2"/><circle cx="34" cy="7" r="3" fill="#fff" stroke="#3e5b74" stroke-width="2"/><rect x="29" y="29" width="19" height="19" rx="3" fill="#c9a400"/><g stroke="#fff" stroke-width="3.2" stroke-linecap="round"><line x1="38.5" y1="38.5" x2="44.8" y2="38.5"/><line x1="38.5" y1="38.5" x2="42.9" y2="42.9"/><line x1="38.5" y1="38.5" x2="38.5" y2="44.8"/><line x1="38.5" y1="38.5" x2="34.1" y2="42.9"/><line x1="38.5" y1="38.5" x2="32.2" y2="38.5"/><line x1="38.5" y1="38.5" x2="34.1" y2="34.1"/><line x1="38.5" y1="38.5" x2="38.5" y2="32.2"/><line x1="38.5" y1="38.5" x2="42.9" y2="34.1"/></g><circle cx="38.5" cy="38.5" r="2.3" fill="#c9a400"/></svg>
<div class="hdl" style="left:508px;top:201px"></div>
<svg class="ic" style="left:531px;top:197px;opacity:1.0" width="48" height="48" viewBox="0 0 48 48"><path d="M2 40L18 6L26 10L10 44Z" fill="#b07048" stroke="#7a4a2a" stroke-width="1.5"/><path d="M12 44L28 8L38 12L20 46Z" fill="#ef7a22" stroke="#b04a1a" stroke-width="1.5"/><path d="M2 40L4 48L10 44ZM12 44L14 50L20 46Z" fill="#888"/></svg>
<svg class="ic" style="left:564px;top:232px" width="16" height="10" viewBox="0 0 16 10"><path d="M0 0H16L8 9Z" fill="#505050"/></svg>
<div class="a" style="left:586px;top:191px;width:64px;height:62px;background:#dcdcdc;border:2px solid #b4b4b4;border-radius:5px"></div>
<svg class="ic" style="left:594px;top:197px;opacity:1.0" width="48" height="48" viewBox="0 0 48 48"><path d="M8 44L14 30L36 4L44 10L22 36Z" fill="#e8d12a" stroke="#8c7a10" stroke-width="1.8"/><path d="M36 4L44 10L46 7L39 1Z" fill="#eee" stroke="#888"/><path d="M8 44L14 30L22 36Z" fill="#ddd" stroke="#555" stroke-width="1.5"/></svg>
<svg class="ic" style="left:660px;top:197px;opacity:0.45" width="48" height="48" viewBox="0 0 48 48"><rect x="2" y="4" width="38" height="38" rx="4" fill="#ccc" stroke="#aaa" stroke-width="1.5"/><rect x="8" y="6" width="26" height="12" fill="#eee"/><rect x="10" y="28" width="20" height="12" fill="#eee"/><path d="M26 46L34 26L44 18L46 22L36 30Z" fill="#ddd" stroke="#bbb"/></svg>
<svg class="ic" style="left:725px;top:197px;opacity:0.8" width="48" height="48" viewBox="0 0 48 48"><path d="M6 42L40 8" stroke="#bbb" stroke-width="2.5" stroke-dasharray="5 4"/><rect x="2" y="38" width="8" height="8" fill="#eee" stroke="#bbb" stroke-width="1.5"/><rect x="38" y="2" width="8" height="8" fill="#eee" stroke="#bbb" stroke-width="1.5"/></svg>
<svg class="ic" style="left:785px;top:216px" width="16" height="10" viewBox="0 0 16 10"><path d="M0 0H16L8 9Z" fill="#c8c8c8"/></svg>
<svg class="ic" style="left:816px;top:197px;opacity:1.0" width="48" height="48" viewBox="0 0 48 48"><path transform="" d="M4 13C4 5 13 3 20 5C26 7 30 5 36 6C44 7 45 16 40 19C35 22 30 19 26 23C22 27 14 28 9 24C5 21 4 17 4 13Z" fill="#8cc08c" stroke="#4d4d4d" stroke-width="2.2"/><rect x="27" y="27" width="21" height="21" rx="3" fill="#c9a400"/><rect x="28" y="28" width="19" height="9.5" rx="2" fill="#d9bc3c" opacity="0.7"/><g stroke="#fff" stroke-width="2.7" stroke-linecap="round"><line x1="37.5" y1="37.5" x2="37.5" y2="44.6"/><line x1="37.5" y1="37.5" x2="37.5" y2="30.4"/><line x1="37.5" y1="37.5" x2="43.7" y2="41.1"/><line x1="37.5" y1="37.5" x2="31.3" y2="41.1"/><line x1="37.5" y1="37.5" x2="31.3" y2="33.9"/><line x1="37.5" y1="37.5" x2="43.7" y2="33.9"/></g><circle cx="37.5" cy="37.5" r="3.6" fill="#fff"/><circle cx="37.5" cy="37.5" r="1.7" fill="#c9a400"/></svg>
<svg class="ic" style="left:883px;top:197px;opacity:1.0" width="48" height="48" viewBox="0 0 48 48"><rect x="10" y="2" width="10" height="10" fill="#fff" stroke="#333" stroke-width="1.8"/><path d="M11 3L19 11M19 3L11 11" stroke="#333" stroke-width="1.5"/><path d="M20 7H40M15 12L6 46" stroke="#333" stroke-width="1.8"/><path d="M22 36L36 50" stroke="#c98a10" stroke-width="7"/><path d="M30 22L18 36" stroke="#555" stroke-width="3"/><rect x="14" y="18" width="18" height="10" fill="#e6c430" transform="rotate(-35 23 23)" stroke="#a88a10"/></svg>
<svg class="ic" style="left:942px;top:216px" width="16" height="10" viewBox="0 0 16 10"><path d="M0 0H16L8 9Z" fill="#505050"/></svg>
<svg class="ic" style="left:973px;top:197px;opacity:0.8" width="48" height="48" viewBox="0 0 48 48"><rect x="2" y="4" width="40" height="11" fill="#dde0d2" stroke="#c8cab8"/><rect x="2" y="18" width="40" height="11" fill="#dde0d2" stroke="#c8cab8"/><rect x="2" y="32" width="40" height="11" fill="#dde0d2" stroke="#c8cab8"/><path d="M14 46L20 32L40 4L46 8L26 38Z" fill="#ececec" stroke="#ccc" stroke-width="1.5"/></svg>
<svg class="ic" style="left:1036px;top:197px;opacity:0.9" width="48" height="48" viewBox="0 0 48 48"><rect x="2" y="4" width="20" height="24" fill="#e8e4dc"/><path d="M8 14H44M14 14L16 46H36L38 14" fill="#efe9e6" stroke="#d8c8c8" stroke-width="3"/><path d="M20 20V40M26 20V40M32 20V40" stroke="#d8c8c8" stroke-width="2.5"/></svg>
<svg class="ic" style="left:1103px;top:197px;opacity:0.9" width="48" height="48" viewBox="0 0 48 48"><path d="M2 10L38 28M4 22L40 10" stroke="#ccc" stroke-width="2"/><circle cx="36" cy="34" r="6" fill="none" stroke="#d8c4c4" stroke-width="3"/><circle cx="40" cy="22" r="6" fill="none" stroke="#d8c4c4" stroke-width="3"/></svg>
<svg class="ic" style="left:1169px;top:197px;opacity:0.9" width="48" height="48" viewBox="0 0 48 48"><path d="M16 2H33L42 11V32H16Z" fill="#f2f2f2" stroke="#ccc" stroke-width="2"/><path d="M33 2V11H42" fill="#ddd" stroke="#ccc" stroke-width="1.5"/><path d="M4 12H21L30 21V46H4Z" fill="#f6f6f6" stroke="#bbb" stroke-width="2"/><path d="M21 12V21H30" fill="#ddd" stroke="#bbb" stroke-width="1.5"/><path d="M9 28H25M9 33H25M9 38H25" stroke="#bbb" stroke-width="1.5"/></svg>
<svg class="ic" style="left:1236px;top:197px;opacity:1.0" width="48" height="48" viewBox="0 0 48 48"><rect x="4" y="4" width="34" height="42" fill="#fff" stroke="#c98a30" stroke-width="2.5"/><rect x="10" y="2" width="20" height="8" fill="#bbb" stroke="#666"/><path d="M10 12H25L34 21V44H10Z" fill="#fff" stroke="#555" stroke-width="2"/><path d="M25 12V21H34" fill="#ddd" stroke="#555" stroke-width="1.5"/><path d="M14 24H30M14 29H30M14 34H30M14 39H26" stroke="#333" stroke-width="1.8"/></svg>
<svg class="ic" style="left:1302px;top:197px;opacity:0.8" width="48" height="48" viewBox="0 0 48 48"><path d="M4 22L20 6V14C34 14 42 22 42 34C42 40 36 44 30 44C36 40 36 30 28 28H20V38Z" fill="#e4dcdc" stroke="#ccc" stroke-width="1.5"/></svg>
<svg class="ic" style="left:1368px;top:197px;opacity:0.8" width="48" height="48" viewBox="0 0 48 48"><path d="M44 22L28 6V14C14 14 6 22 6 34C6 40 12 44 18 44C12 40 12 30 20 28H28V38Z" fill="#dfe6df" stroke="#ccc" stroke-width="1.5"/></svg>
<div class="hdl" style="left:1445px;top:201px"></div>
<svg class="ic" style="left:1463px;top:197px;opacity:1.0" width="48" height="48" viewBox="0 0 48 48"><path d="M10 8H44V30H10L2 19.0Z" fill="#f5d800" stroke="#b89c00" stroke-width="2"/><text x="11" y="26" font-family="Liberation Sans" font-weight="bold" font-size="16" fill="#222">abc</text></svg>
<svg class="ic" style="left:1531px;top:197px;opacity:1.0" width="48" height="48" viewBox="0 0 48 48"><path d="M18 20L18 4A16 16 0 0 1 32 12Z" fill="#f5d800" stroke="#000"/><path d="M18 20L32 12A16 16 0 0 1 26 34Z" fill="#b01010" stroke="#000"/><path d="M18 20L26 34A16 16 0 0 1 2 20A16 16 0 0 1 18 4Z" fill="#1a9a3a" stroke="#000"/><rect x="18" y="34" width="8" height="14" fill="#f5d800" stroke="#b89c00"/><rect x="28" y="20" width="8" height="28" fill="#1a9a3a" stroke="#000"/><rect x="38" y="30" width="8" height="18" fill="#a01010" stroke="#000"/></svg>
<div class="a" style="left:1595px;top:203px;width:2px;height:38px;background:#d0d0d0"></div>
<svg class="ic" style="left:1611px;top:197px;opacity:1.0" width="48" height="48" viewBox="0 0 48 48"><path d="M10 6H44V28H10L2 17.0Z" fill="#cfe2fb" stroke="#5b93d0" stroke-width="2"/><text x="11" y="24" font-family="Liberation Sans" font-weight="bold" font-size="17" fill="#222">ab</text><path d="M34 20V32" stroke="#fff" stroke-width="5" stroke-linecap="round"/><path d="M34 20V32" stroke="#555" stroke-width="1" /><circle cx="36" cy="38" r="8" fill="#a81818"/></svg>
<svg class="ic" style="left:1674px;top:197px;opacity:1.0" width="48" height="48" viewBox="0 0 48 48"><path d="M10 8H44V30H10L2 19.0Z" fill="#fde6e6" stroke="#e52020" stroke-width="2"/><text x="11" y="26" font-family="Liberation Sans" font-weight="bold" font-size="16" fill="#e52020">abc</text></svg>
<div class="a" style="left:1741px;top:203px;width:2px;height:38px;background:#d0d0d0"></div>
<svg class="ic" style="left:1758px;top:197px;opacity:1.0" width="48" height="48" viewBox="0 0 48 48"><path d="M10 6H44V28H10L2 17.0Z" fill="#ecebe4" stroke="#d8d8d0" stroke-width="2"/><text x="11" y="24" font-family="Liberation Sans" font-weight="bold" font-size="17" fill="#c8c8c0">ab</text><circle cx="36" cy="38" r="8" fill="#d4cccc"/></svg>
<svg class="ic" style="left:1823px;top:197px;opacity:1.0" width="48" height="48" viewBox="0 0 48 48"><path d="M10 6H44V28H10L2 17.0Z" fill="#ecebe4" stroke="#d8d8d0" stroke-width="2"/><text x="11" y="24" font-family="Liberation Sans" font-weight="bold" font-size="16" fill="#c8c8c0">abc</text><path d="M18 38C26 28 38 28 46 38C38 46 26 46 18 38Z" fill="#fff" stroke="#ccc"/><circle cx="32" cy="38" r="4" fill="#ccc"/></svg>
<svg class="ic" style="left:1890px;top:197px;opacity:1.0" width="48" height="48" viewBox="0 0 48 48"><path d="M10 6H44V28H10L2 17.0Z" fill="#ecebe4" stroke="#d8d8d0" stroke-width="2"/><text x="11" y="24" font-family="Liberation Sans" font-weight="bold" font-size="16" fill="#c8c8c0">abc</text><rect x="28" y="28" width="20" height="20" rx="3" fill="#d0d0d0"/><path d="M32 35H38V31L44 38L38 45V41H32Z" fill="#fff"/></svg>
<svg class="ic" style="left:1956px;top:197px;opacity:1.0" width="48" height="48" viewBox="0 0 48 48"><path d="M10 6H44V28H10L2 17.0Z" fill="#ecebe4" stroke="#d8d8d0" stroke-width="2"/><text x="11" y="24" font-family="Liberation Sans" font-weight="bold" font-size="16" fill="#c8c8c0">abc</text><rect x="28" y="28" width="20" height="20" rx="3" fill="#d0d0d0"/><circle cx="38" cy="38" r="5" fill="none" stroke="#fff" stroke-width="2.5"/></svg>
<svg class="ic" style="left:2022px;top:197px;opacity:1.0" width="48" height="48" viewBox="0 0 48 48"><path d="M10 6H44V28H10L2 17.0Z" fill="#ecebe4" stroke="#d8d8d0" stroke-width="2"/><text x="11" y="24" font-family="Liberation Sans" font-weight="bold" font-size="16" fill="#c8c8c0">abc</text><rect x="28" y="28" width="20" height="20" rx="3" fill="#deded2"/><path d="M32 44L44 32" stroke="#fff" stroke-width="2.5"/></svg>
<div class="hdl" style="left:2095px;top:201px"></div>
<svg class="ic" style="left:2119px;top:197px;opacity:1.0" width="48" height="48" viewBox="0 0 48 48"><circle cx="24" cy="18" r="17" fill="#8fb3d9" stroke="#2f5478" stroke-width="1.5"/><path d="M7 18H41M24 1V35M10 10H38M10 26H38" stroke="#fff" stroke-width="1"/><path d="M12 14C16 12 20 16 24 14C28 12 32 16 36 14" stroke="#2f5478" stroke-width="3" fill="none"/><ellipse cx="13" cy="40" rx="9" ry="7" fill="#fff" stroke="#000" stroke-width="4"/><ellipse cx="35" cy="40" rx="9" ry="7" fill="#fff" stroke="#000" stroke-width="4"/><path d="M10 32L16 26H32L38 32" fill="#000"/></svg>
<div class="hdl" style="left:2198px;top:201px"></div>
<svg class="ic" style="left:2218px;top:197px;opacity:1.0" width="48" height="48" viewBox="0 0 48 48"><path d="M22 2C12 2 12 6 12 10V14H24V16H8C2 16 2 22 2 26C2 32 4 36 8 36H12V30C12 26 14 24 18 24H30C34 24 36 22 36 18V10C36 4 30 2 22 2Z" fill="#3d78b0"/><path d="M26 46C36 46 36 42 36 38V34H24V32H40C46 32 46 26 46 22C46 16 44 12 40 12H36V18C36 22 34 24 30 24H18C14 24 12 26 12 30V38C12 44 18 46 26 46Z" fill="#f8d24a"/><text x="30" y="48" font-family="Liberation Sans" font-size="16" fill="#555">&gt;</text></svg>
<div class="hdl" style="left:2295px;top:201px"></div>
<svg class="ic" style="left:2316px;top:197px;opacity:1.0" width="48" height="48" viewBox="0 0 48 48"><rect x="4" y="2" width="40" height="42" fill="#6a9ad0" stroke="#1f2d3a" stroke-width="2"/><rect x="4" y="2" width="10" height="42" fill="#2f3e4c"/><text x="22" y="32" font-family="Liberation Serif" font-size="24" fill="#fff">?</text></svg>
<div class="hdl" style="left:2393px;top:201px"></div>
<div class="hdl" style="left:11px;top:279px"></div>
<svg class="ic" style="left:33px;top:275px;opacity:1.0" width="48" height="48" viewBox="0 0 48 48"><path d="M2 47V2L47 47Z" fill="#e0dcd4" stroke="#c6c2ba" stroke-width="2"/><path d="M11 38V24L25 38Z" fill="#f2f0ec" stroke="#c6c2ba" stroke-width="2"/><rect x="33" y="4" width="12" height="42" fill="#ebe8e2" stroke="#c6c2ba" stroke-width="1.5"/><path d="M38 10H45" stroke="#c6c2ba" stroke-width="1.2"/><path d="M38 15H45" stroke="#c6c2ba" stroke-width="1.2"/><path d="M38 20H45" stroke="#c6c2ba" stroke-width="1.2"/><path d="M38 25H45" stroke="#c6c2ba" stroke-width="1.2"/><path d="M38 30H45" stroke="#c6c2ba" stroke-width="1.2"/><path d="M38 35H45" stroke="#c6c2ba" stroke-width="1.2"/><path d="M38 40H45" stroke="#c6c2ba" stroke-width="1.2"/></svg>
<svg class="ic" style="left:101px;top:275px;opacity:1.0" width="48" height="48" viewBox="0 0 48 48"><path transform="" d="M4 13C4 5 13 3 20 5C26 7 30 5 36 6C44 7 45 16 40 19C35 22 30 19 26 23C22 27 14 28 9 24C5 21 4 17 4 13Z" fill="#8cc08c" stroke="#4d4d4d" stroke-width="2.2"/><rect x="26" y="26" width="20" height="20" rx="3" fill="#3e5b74"/><path d="M30 32H37V28L44 35L37 42V38H30Z" fill="#fff"/></svg>
<svg class="ic" style="left:160px;top:288px" width="16" height="10" viewBox="0 0 16 10"><path d="M0 0H16L8 9Z" fill="#505050"/></svg>
<svg class="ic" style="left:190px;top:275px;opacity:1.0" width="48" height="48" viewBox="0 0 48 48"><path transform="" d="M4 13C4 5 13 3 20 5C26 7 30 5 36 6C44 7 45 16 40 19C35 22 30 19 26 23C22 27 14 28 9 24C5 21 4 17 4 13Z" fill="#8cc08c" stroke="#4d4d4d" stroke-width="2.2"/><rect x="26" y="26" width="20" height="20" rx="3" fill="#3e5b74"/><circle cx="36" cy="36" r="5.5" fill="none" stroke="#fff" stroke-width="2.5"/></svg>
<svg class="ic" style="left:256px;top:275px;opacity:1.0" width="48" height="48" viewBox="0 0 48 48"><path transform="" d="M4 13C4 5 13 3 20 5C26 7 30 5 36 6C44 7 45 16 40 19C35 22 30 19 26 23C22 27 14 28 9 24C5 21 4 17 4 13Z" fill="#8cc08c" stroke="#4d4d4d" stroke-width="2.2"/><rect x="26" y="26" width="20" height="20" rx="3" fill="#3e5b74"/><path d="M29 36L34 31V34H38V31L43 36L38 41V38H34V41Z" fill="#fff"/></svg>
<svg class="ic" style="left:323px;top:275px;opacity:1.0" width="48" height="48" viewBox="0 0 48 48"><circle cx="18" cy="16" r="14" fill="#8cc08c" stroke="#4d4d4d" stroke-width="2"/><path d="M30 22L42 29V43L30 50L18 43V29Z" fill="#a8c8e0" stroke="#4d4d4d" stroke-width="1.5"/><path d="M18 18L30 34" stroke="#333" stroke-width="2"/><path d="M30 34L26 28M30 34L23 33" stroke="#333" stroke-width="2"/></svg>
<svg class="ic" style="left:388px;top:275px;opacity:1.0" width="48" height="48" viewBox="0 0 48 48"><path transform="" d="M4 13C4 5 13 3 20 5C26 7 30 5 36 6C44 7 45 16 40 19C35 22 30 19 26 23C22 27 14 28 9 24C5 21 4 17 4 13Z" fill="#8cc08c" stroke="#4d4d4d" stroke-width="2.2"/><ellipse cx="15" cy="12" rx="7" ry="5" fill="#fff" stroke="#4d4d4d" stroke-width="2"/><rect x="26" y="26" width="21" height="21" rx="3" fill="#c9a400"/><rect x="27" y="27" width="19" height="9.5" rx="2" fill="#d9bc3c" opacity="0.7"/><g stroke="#fff" stroke-width="2.7" stroke-linecap="round"><line x1="36.5" y1="36.5" x2="36.5" y2="43.6"/><line x1="36.5" y1="36.5" x2="36.5" y2="29.4"/><line x1="36.5" y1="36.5" x2="42.7" y2="40.1"/><line x1="36.5" y1="36.5" x2="30.3" y2="40.1"/><line x1="36.5" y1="36.5" x2="30.3" y2="32.9"/><line x1="36.5" y1="36.5" x2="42.7" y2="32.9"/></g><circle cx="36.5" cy="36.5" r="3.6" fill="#fff"/><circle cx="36.5" cy="36.5" r="1.7" fill="#c9a400"/></svg>
<svg class="ic" style="left:454px;top:275px;opacity:1.0" width="48" height="48" viewBox="0 0 48 48"><path transform="" d="M4 13C4 5 13 3 20 5C26 7 30 5 36 6C44 7 45 16 40 19C35 22 30 19 26 23C22 27 14 28 9 24C5 21 4 17 4 13Z" fill="#c2c2c2" stroke="#4d4d4d" stroke-width="2.2"/><path d="M4 42C6 32 14 26 22 28C22 38 14 46 4 42Z" fill="#8cc08c" stroke="#4d4d4d" stroke-width="2"/><rect x="26" y="26" width="21" height="21" rx="3" fill="#c9a400"/><rect x="27" y="27" width="19" height="9.5" rx="2" fill="#d9bc3c" opacity="0.7"/><g stroke="#fff" stroke-width="2.7" stroke-linecap="round"><line x1="36.5" y1="36.5" x2="36.5" y2="43.6"/><line x1="36.5" y1="36.5" x2="36.5" y2="29.4"/><line x1="36.5" y1="36.5" x2="42.7" y2="40.1"/><line x1="36.5" y1="36.5" x2="30.3" y2="40.1"/><line x1="36.5" y1="36.5" x2="30.3" y2="32.9"/><line x1="36.5" y1="36.5" x2="42.7" y2="32.9"/></g><circle cx="36.5" cy="36.5" r="3.6" fill="#fff"/><circle cx="36.5" cy="36.5" r="1.7" fill="#c9a400"/></svg>
<svg class="ic" style="left:520px;top:275px;opacity:1.0" width="48" height="48" viewBox="0 0 48 48"><path transform="" d="M4 13C4 5 13 3 20 5C26 7 30 5 36 6C44 7 45 16 40 19C35 22 30 19 26 23C22 27 14 28 9 24C5 21 4 17 4 13Z" fill="#c2c2c2" stroke="#4d4d4d" stroke-width="2.2"/><ellipse cx="15" cy="12" rx="7" ry="5" fill="#8cc08c" stroke="#4d4d4d" stroke-width="2"/><rect x="26" y="26" width="21" height="21" rx="3" fill="#c9a400"/><rect x="27" y="27" width="19" height="9.5" rx="2" fill="#d9bc3c" opacity="0.7"/><g stroke="#fff" stroke-width="2.7" stroke-linecap="round"><line x1="36.5" y1="36.5" x2="36.5" y2="43.6"/><line x1="36.5" y1="36.5" x2="36.5" y2="29.4"/><line x1="36.5" y1="36.5" x2="42.7" y2="40.1"/><line x1="36.5" y1="36.5" x2="30.3" y2="40.1"/><line x1="36.5" y1="36.5" x2="30.3" y2="32.9"/><line x1="36.5" y1="36.5" x2="42.7" y2="32.9"/></g><circle cx="36.5" cy="36.5" r="3.6" fill="#fff"/><circle cx="36.5" cy="36.5" r="1.7" fill="#c9a400"/></svg>
<svg class="ic" style="left:586px;top:275px;opacity:1.0" width="48" height="48" viewBox="0 0 48 48"><path transform="" d="M4 13C4 5 13 3 20 5C26 7 30 5 36 6C44 7 45 16 40 19C35 22 30 19 26 23C22 27 14 28 9 24C5 21 4 17 4 13Z" fill="#8cc08c" stroke="#4d4d4d" stroke-width="2.2"/><ellipse cx="15" cy="12" rx="7" ry="5" fill="#fff" stroke="#4d4d4d" stroke-width="2"/><rect x="27" y="27" width="20" height="20" rx="2" fill="#e0434b"/><path d="M31.5 31.5L42.5 42.5M42.5 31.5L31.5 42.5" stroke="#fff" stroke-width="3"/></svg>
<svg class="ic" style="left:652px;top:275px;opacity:1.0" width="48" height="48" viewBox="0 0 48 48"><path transform="" d="M4 13C4 5 13 3 20 5C26 7 30 5 36 6C44 7 45 16 40 19C35 22 30 19 26 23C22 27 14 28 9 24C5 21 4 17 4 13Z" fill="#c2c2c2" stroke="#4d4d4d" stroke-width="2.2"/><path d="M4 42C6 32 14 26 22 28C22 38 14 46 4 42Z" fill="#8cc08c" stroke="#4d4d4d" stroke-width="2"/><rect x="27" y="27" width="20" height="20" rx="2" fill="#e0434b"/><path d="M31.5 31.5L42.5 42.5M42.5 31.5L31.5 42.5" stroke="#fff" stroke-width="3"/></svg>
<svg class="ic" style="left:717px;top:275px;opacity:1.0" width="48" height="48" viewBox="0 0 48 48"><path transform="" d="M4 13C4 5 13 3 20 5C26 7 30 5 36 6C44 7 45 16 40 19C35 22 30 19 26 23C22 27 14 28 9 24C5 21 4 17 4 13Z" fill="#8cc08c" stroke="#4d4d4d" stroke-width="2.2"/><path d="M8 24C8 34 10 44 16 46C22 44 22 34 26 24" fill="#d9b844" stroke="#4d4d4d" stroke-width="2"/><path d="M8 24L26 24" stroke="#4d4d4d" stroke-dasharray="3 2" stroke-width="1.5"/></svg>
<svg class="ic" style="left:784px;top:275px;opacity:1.0" width="48" height="48" viewBox="0 0 48 48"><path d="M6 38C2 30 8 20 18 10C28 2 40 2 44 10C46 18 40 26 34 34C24 46 10 46 6 38Z" fill="#d8b83a" stroke="#4d4d4d" stroke-width="2"/><path d="M12 35C9 30 13 22 21 14C29 8 37 8 39 13C40 18 36 24 30 30C23 38 15 40 12 35Z" fill="#8cc08c" stroke="#7a6a10" stroke-width="1.5"/></svg>
<svg class="ic" style="left:851px;top:275px;opacity:0.85" width="48" height="48" viewBox="0 0 48 48"><path d="M4 4L18 30L30 6H44" fill="none" stroke="#c8c8c8" stroke-width="2"/><rect x="1" y="1" width="7" height="7" fill="#fff" stroke="#ccc"/><rect x="27" y="3" width="7" height="7" fill="#fff" stroke="#ccc"/><rect x="15" y="27" width="7" height="7" fill="#fff" stroke="#ccc"/><rect x="26" y="28" width="20" height="20" rx="3" fill="#ddd"/><circle cx="36" cy="38" r="5" fill="none" stroke="#fff" stroke-width="2.5"/></svg>
<svg class="ic" style="left:915px;top:275px;opacity:1.0" width="48" height="48" viewBox="0 0 48 48"><path d="M2 22H46" stroke="#bbb" stroke-width="3"/><path d="M16 2V44" stroke="#2e8a3e" stroke-width="3"/><path d="M26 22V46" stroke="#2e8a3e" stroke-width="3"/><path d="M16 22V38" stroke="#d02020" stroke-width="1.5"/><rect x="12" y="18" width="8" height="8" fill="#fff" stroke="#333" stroke-width="2"/><rect x="22" y="18" width="8" height="8" fill="#fff" stroke="#333" stroke-width="2"/><rect x="31" y="2" width="15" height="15" rx="3" fill="#c9a400"/><rect x="32" y="3" width="13" height="6.5" rx="2" fill="#d9bc3c" opacity="0.7"/><g stroke="#fff" stroke-width="2.0" stroke-linecap="round"><line x1="38.5" y1="9.5" x2="38.5" y2="14.6"/><line x1="38.5" y1="9.5" x2="38.5" y2="4.4"/><line x1="38.5" y1="9.5" x2="42.9" y2="12.1"/><line x1="38.5" y1="9.5" x2="34.1" y2="12.1"/><line x1="38.5" y1="9.5" x2="34.1" y2="6.9"/><line x1="38.5" y1="9.5" x2="42.9" y2="6.9"/></g><circle cx="38.5" cy="9.5" r="2.6" fill="#fff"/><circle cx="38.5" cy="9.5" r="1.2" fill="#c9a400"/><rect x="0" y="31" width="14" height="14" rx="2" fill="#e0434b"/><path d="M4.5 35.5L9.5 40.5M9.5 35.5L4.5 40.5" stroke="#fff" stroke-width="3"/></svg>
<div class="a" style="left:974px;top:269px;width:64px;height:61px;background:#fdfdfd;border:2px solid #b4b4b4;border-radius:5px"></div>
<svg class="ic" style="left:981px;top:275px;opacity:1.0" width="48" height="48" viewBox="0 0 48 48"><path d="M4 14C4 6 10 2 18 4C22 6 22 8 20 14C18 22 20 28 14 28C6 28 4 20 4 14Z" fill="#b8b8b8" stroke="#4d4d4d" stroke-width="2"/><path d="M28 8C34 4 44 6 44 14C44 24 36 28 30 26C26 20 28 14 28 8Z" fill="#8cc08c" stroke="#4d4d4d" stroke-width="2"/><path d="M22 2L26 38M28 2L20 38" stroke="#555" stroke-width="2.5"/><circle cx="16" cy="42" r="5.5" fill="none" stroke="#c81818" stroke-width="3"/><circle cx="32" cy="42" r="5.5" fill="none" stroke="#c81818" stroke-width="3"/></svg>
<svg class="ic" style="left:1047px;top:275px;opacity:1.0" width="48" height="48" viewBox="0 0 48 48"><path d="M4 14C4 6 10 2 18 4C22 6 22 8 20 14C18 22 20 28 14 28C6 28 4 20 4 14Z" fill="#dcdcdc" stroke="#ccc" stroke-width="2"/><path d="M28 8C34 4 44 6 44 14C44 24 36 28 30 26C26 20 28 14 28 8Z" fill="#dcdcdc" stroke="#ccc" stroke-width="2"/><path d="M22 2L26 38M28 2L20 38" stroke="#ccc" stroke-width="2.5"/><circle cx="16" cy="42" r="5.5" fill="none" stroke="#e0cccc" stroke-width="3"/><circle cx="32" cy="42" r="5.5" fill="none" stroke="#e0cccc" stroke-width="3"/></svg>
<svg class="ic" style="left:1114px;top:275px;opacity:1.0" width="48" height="48" viewBox="0 0 48 48"><path d="M4 14C4 6 10 2 18 4C22 6 22 8 20 14C18 22 20 28 14 28C6 28 4 20 4 14Z" fill="#dcdcdc" stroke="#ccc" stroke-width="2"/><path d="M28 8C34 4 44 6 44 14C44 24 36 28 30 26C26 20 28 14 28 8Z" fill="#dcdcdc" stroke="#ccc" stroke-width="2"/><path d="M20 10H30M20 16H30M20 22H30M22 26C16 34 24 40 28 46" stroke="#ccc" stroke-width="2" fill="none"/></svg>
<svg class="ic" style="left:1179px;top:275px;opacity:1.0" width="48" height="48" viewBox="0 0 48 48"><path d="M4 6H16M32 6H44M4 18H16M32 18H44M4 30H16M32 30H44M4 42H16M32 42H44" stroke="#ddd" stroke-width="2.5"/><path d="M24 2V46" stroke="#ddd" stroke-width="2"/><path d="M16 12C20 6 28 6 32 12M16 28C20 22 28 22 32 28M16 40C20 34 28 34 32 40" fill="none" stroke="#ccc" stroke-width="2"/></svg>
<svg class="ic" style="left:1247px;top:275px;opacity:1.0" width="48" height="48" viewBox="0 0 48 48"><path d="M24 6L44 18L24 28Z" fill="#e6e6e6" stroke="#ccc" stroke-width="1.5"/><path d="M24 28L36 46H12Z" fill="#f0f0f0" stroke="#ccc" stroke-width="1.5"/><path d="M24 6V46" stroke="#ccc" stroke-width="1.5"/><path d="M8 40C0 28 6 12 18 10" fill="none" stroke="#bbb" stroke-width="2"/></svg>
<svg class="ic" style="left:1305px;top:294px" width="16" height="10" viewBox="0 0 16 10"><path d="M0 0H16L8 9Z" fill="#d0d0d0"/></svg>
<div class="t" style="left:9px;top:346.5px;font-size:29px;color:#000;transform:scaleX(1.0436);transform-origin:0 0;">Browser</div>
<svg class="a" style="left:681px;top:348px" width="54" height="24" viewBox="0 0 54 24"><rect x="1.5" y="1.5" width="21" height="20" rx="3" fill="none" stroke="#6a6a6a" stroke-width="2"/><rect x="5" y="9" width="8" height="8" fill="none" stroke="#6a6a6a" stroke-width="2"/><path d="M9 9V5H18V13H13" fill="none" stroke="#6a6a6a" stroke-width="2"/><rect x="29.5" y="1.5" width="21" height="20" rx="3" fill="none" stroke="#6a6a6a" stroke-width="2"/><path d="M34 6L46 17M46 6L34 17" stroke="#6a6a6a" stroke-width="3.5"/></svg>
<svg class="ic" style="left:16px;top:395px;opacity:1" width="32" height="32" viewBox="0 0 32 32"><rect x="3" y="2" width="22" height="22" fill="none" stroke="#888" stroke-width="2"/><rect x="17" y="17" width="13" height="13" rx="2" fill="#5b9a5e"/><path d="M23.5 19.5V27.5M19.5 23.5H27.5" stroke="#fff" stroke-width="2.5"/></svg>
<svg class="ic" style="left:66px;top:395px;opacity:1" width="32" height="32" viewBox="0 0 32 32"><path d="M3 15C3 7 12 2 21 5L25 2V11H16L19 8C13 7 9 10 8 15Z" fill="#5b93d0" stroke="#2e64a0"/><path d="M29 17C29 25 20 30 11 27L7 30V21H16L13 24C19 25 23 22 24 17Z" fill="#5b93d0" stroke="#2e64a0"/></svg>
<svg class="ic" style="left:116px;top:395px;opacity:1" width="32" height="32" viewBox="0 0 32 32"><path d="M3 3H29V8L19 18V31L13 26V18L3 8Z" fill="#6a9ad0" stroke="#3e5b74" stroke-width="1.5"/><rect x="3" y="3" width="26" height="4" fill="#f7e34a"/></svg>
<svg class="ic" style="left:167px;top:395px;opacity:1" width="32" height="32" viewBox="0 0 32 32"><path d="M4 4V30M4 6H26M4 18H10M4 28H10" stroke="#aaa" stroke-width="1.5"/><rect x="9" y="10" width="5" height="5" fill="#f0a030"/><rect x="9" y="22" width="5" height="5" fill="#f0a030"/><path d="M20 30V14H14L23 3L32 14H26V30Z" fill="#6a9ad0" stroke="#3e5b74" stroke-width="1.5"/></svg>
<svg class="ic" style="left:216px;top:395px;opacity:1" width="32" height="32" viewBox="0 0 32 32"><circle cx="16" cy="16" r="13" fill="#6a9ad0" stroke="#3e6a9c" stroke-width="1.5"/><text x="11" y="24" font-family="Liberation Serif" font-style="italic" font-weight="bold" font-size="19" fill="#fff">i</text></svg>
<div class="tree" style="left:0;top:443px;width:736px;height:236px;overflow:hidden">
<svg class="a" style="left:40px;top:6.5px" width="32" height="34" viewBox="0 0 32 34"><path d="M16 1L20 11H31L22 18L26 30L16 23L6 30L10 18L1 11H12Z" fill="#f7e96a" stroke="#d4a800" stroke-width="2"/></svg>
<div class="t" style="left:85px;top:9.0px;font-size:29px;color:#000;transform:scaleX(1.0062);transform-origin:0 0;">Favorites</div>
<svg class="a" style="left:13px;top:56.5px" width="10" height="16"><path d="M1 0L9 8L1 16Z" fill="#555"/></svg>
<svg class="a" style="left:40px;top:48.5px" width="32" height="34" viewBox="0 0 32 34"><path d="M5 2H28V30H5Z" fill="#ececec" stroke="#999" stroke-width="1.5"/><path d="M2 5C2 2 5 2 5 2V30C3 30 2 31 2 31Z" fill="#ccc" stroke="#999"/><path d="M17 2H23V14L20 11L17 14Z" fill="#6a9ad0" stroke="#3e5b74"/></svg>
<div class="t" style="left:85px;top:51.0px;font-size:29px;color:#000;transform:scaleX(1.0175);transform-origin:0 0;">Spatial Bookmarks</div>
<svg class="a" style="left:13px;top:98.5px" width="10" height="16"><path d="M1 0L9 8L1 16Z" fill="#555"/></svg>
<svg class="a" style="left:40px;top:90.5px" width="32" height="34" viewBox="0 0 32 34"><path d="M1 2H11L14 5H29V30H1Z" fill="#b3dc4a" stroke="#888" stroke-width="1.5"/><path d="M2 12L28 28M2 22L14 16L20 6" stroke="#f0f0d0" stroke-width="2" fill="none"/><path d="M14 11L22 7L26 13L18 19Z" fill="#1e8c1e"/></svg>
<div class="t" style="left:85px;top:93.0px;font-size:29px;color:#000;transform:scaleX(1.0303);transform-origin:0 0;">Project Home</div>
<svg class="a" style="left:13px;top:140.5px" width="10" height="16"><path d="M1 0L9 8L1 16Z" fill="#555"/></svg>
<svg class="a" style="left:40px;top:132.5px" width="32" height="34" viewBox="0 0 32 34"><path d="M1 2H11L14 5H29V30H1Z" fill="#f0f0f0" stroke="#888" stroke-width="1.5"/><path d="M8 18L15 11L22 18M10 16V24H20V16" fill="none" stroke="#222" stroke-width="2"/></svg>
<div class="t" style="left:85px;top:135.0px;font-size:29px;color:#000;transform:scaleX(1.0212);transform-origin:0 0;">Home</div>
<svg class="a" style="left:13px;top:182.5px" width="10" height="16"><path d="M1 0L9 8L1 16Z" fill="#555"/></svg>
<svg class="a" style="left:40px;top:174.5px" width="32" height="34" viewBox="0 0 32 34"><path d="M1 2H11L14 5H29V30H1Z" fill="#f0f0f0" stroke="#888" stroke-width="1.5"/></svg>
<div class="t" style="left:85px;top:177.0px;font-size:29px;color:#000;transform:scaleX(1.4895);transform-origin:0 0;">/</div>
<svg class="a" style="left:40px;top:216.5px" width="32" height="34" viewBox="0 0 32 34"><circle cx="16" cy="12" r="10" fill="#8fb3d9" stroke="#3e6a9c"/><path d="M2 16L16 10L30 16V28L16 34L2 28Z" fill="#d8ad00" stroke="#000"/><path d="M16 22L30 16V28L16 34Z" fill="#fff36a" stroke="#000"/></svg>
<div class="t" style="left:85px;top:219.0px;font-size:29px;color:#000;transform:scaleX(0.9662);transform-origin:0 0;">GeoPackage</div>
<div class="a" style="left:706px;top:0;width:29px;height:234px;background:#f4f4f4;border-left:1px solid #bdbdbd"></div>
<div class="a" style="left:707px;top:0;width:28px;height:28px;background:linear-gradient(90deg,#fbfbfb,#ececec);border-bottom:2px solid #c8c8c8"></div>
<svg class="a" style="left:712px;top:9px" width="17" height="9"><path d="M0 9L8.5 0L17 9Z" fill="#555"/></svg>
<div class="a" style="left:707px;top:82px;width:28px;height:127px;background:#e4e4e4;border-top:1px solid #d0d0d0;border-bottom:1px solid #d0d0d0"></div>
<div class="a" style="left:707px;top:209px;width:28px;height:27px;background:linear-gradient(90deg,#fbfbfb,#ececec);border-top:2px solid #c8c8c8"></div>
<svg class="a" style="left:712px;top:218px" width="17" height="9"><path d="M0 0L8.5 9L17 0Z" fill="#555"/></svg>
</div>
<div class="a" style="left:352px;top:683px;width:34px;height:3px;background-image:radial-gradient(circle,#9a9a9a 0.9px,transparent 1.1px);background-size:5.6px 3px"></div>
<div class="t" style="left:9px;top:699.5px;font-size:29px;color:#000;transform:scaleX(0.9765);transform-origin:0 0;">Layers</div>
<svg class="a" style="left:681px;top:701px" width="54" height="24" viewBox="0 0 54 24"><rect x="1.5" y="1.5" width="21" height="20" rx="3" fill="none" stroke="#6a6a6a" stroke-width="2"/><rect x="5" y="9" width="8" height="8" fill="none" stroke="#6a6a6a" stroke-width="2"/><path d="M9 9V5H18V13H13" fill="none" stroke="#6a6a6a" stroke-width="2"/><rect x="29.5" y="1.5" width="21" height="20" rx="3" fill="none" stroke="#6a6a6a" stroke-width="2"/><path d="M34 6L46 17M46 6L34 17" stroke="#6a6a6a" stroke-width="3.5"/></svg>
<svg class="ic" style="left:16px;top:748px;opacity:1" width="32" height="32" viewBox="0 0 32 32"><path d="M4 24L14 14L20 20L10 30Z" fill="#f6d54a"/><path d="M4 24L10 30L8 31L2 26Z" fill="#e04040"/><path d="M6 20L12 14L16 18L8 26Z" fill="#4a90d0"/><path d="M16 16L30 4" stroke="#d89a30" stroke-width="3.5"/></svg>
<svg class="ic" style="left:66px;top:748px;opacity:1" width="32" height="32" viewBox="0 0 32 32"><rect x="3" y="8" width="18" height="20" fill="none" stroke="#888" stroke-width="1.5"/><rect x="7" y="5" width="18" height="20" fill="#f0f0f0" stroke="#888" stroke-width="1.5"/><path d="M16 2V20" stroke="#3e5b74" stroke-width="2.5"/><rect x="18" y="18" width="13" height="13" rx="2" fill="#5b9a5e"/><path d="M24.5 20.5V28.5M20.5 24.5H28.5" stroke="#fff" stroke-width="2.5"/></svg>
<svg class="ic" style="left:116px;top:748px;opacity:1" width="32" height="32" viewBox="0 0 32 32"><path d="M1 16C8 6 24 6 31 16" fill="none" stroke="#888" stroke-width="1.5"/><path d="M1 16C8 24 22 24 28 18" fill="#fff" stroke="#888" stroke-width="1.5"/><circle cx="16" cy="15" r="6" fill="#5b93d0"/><circle cx="16" cy="15" r="2.5" fill="#1a2a4a"/></svg>
<svg class="a" style="left:138px;top:774px" width="12" height="7"><path d="M0 0H12L6 7Z" fill="#555"/></svg>
<svg class="ic" style="left:167px;top:748px;opacity:1" width="32" height="32" viewBox="0 0 32 32"><path d="M3 3H29V8L19 18V31L13 26V18L3 8Z" fill="#6a9ad0" stroke="#3e5b74" stroke-width="1.5"/><rect x="3" y="3" width="26" height="4" fill="#f7e34a"/></svg>
<svg class="a" style="left:189px;top:774px" width="12" height="7"><path d="M0 0H12L6 7Z" fill="#555"/></svg>
<svg class="ic" style="left:216px;top:748px;opacity:1" width="32" height="32" viewBox="0 0 32 32"><text x="2" y="19.5" font-family="Liberation Serif" font-size="38" fill="#6a3a8a">ε</text><path d="M17 31V23C17 19 30 19 30 23V31H26V26H21V31Z" fill="#aaa" stroke="#888"/></svg>
<svg class="a" style="left:261px;top:760px" width="15" height="8"><path d="M0 0H15L7.5 8Z" fill="#555"/></svg>
<svg class="ic" style="left:291px;top:748px;opacity:1" width="32" height="32" viewBox="0 0 32 32"><path d="M4 4V30M4 6H28M4 18H10M4 28H10" stroke="#aaa" stroke-width="1.5"/><rect x="9" y="10" width="5" height="5" fill="#f0a030"/><rect x="9" y="22" width="5" height="5" fill="#f0a030"/><path d="M20 2V18H14L23 30L32 18H26V2Z" fill="#6a9ad0" stroke="#3e5b74" stroke-width="1.5"/></svg>
<svg class="ic" style="left:341px;top:748px;opacity:1" width="32" height="32" viewBox="0 0 32 32"><path d="M4 4V30M4 6H28M4 18H10M4 28H10" stroke="#aaa" stroke-width="1.5"/><rect x="9" y="10" width="5" height="5" fill="#f0a030"/><rect x="9" y="22" width="5" height="5" fill="#f0a030"/><path d="M20 30V14H14L23 3L32 14H26V30Z" fill="#6a9ad0" stroke="#3e5b74" stroke-width="1.5"/></svg>
<svg class="ic" style="left:390px;top:748px;opacity:1" width="32" height="32" viewBox="0 0 32 32"><rect x="2" y="2" width="22" height="22" fill="none" stroke="#888" stroke-width="2"/><rect x="17" y="19" width="13" height="11" rx="2" fill="#e0434b"/><path d="M20 24.5H27" stroke="#fff" stroke-width="2.5"/></svg>
<div class="tree" style="left:0;top:795px;width:736px;height:391px;overflow:hidden">
<div class="a" style="left:1px;top:0;width:733px;height:43px;background:#308cc6;border:1px solid #2a7ab0"></div>
<svg class="a" style="left:48px;top:8px" width="28" height="28" viewBox="0 0 28 28"><rect x="1.2" y="1.2" width="25.6" height="25.6" rx="1.5" fill="#fff" stroke="#b4b4b4" stroke-width="2"/><path d="M6 13.5L11 21L20 5.5" fill="none" stroke="#000" stroke-width="3.4" stroke-linejoin="round"/></svg>
<svg class="a" style="left:88px;top:6px" width="33" height="33" viewBox="0 0 33 33"><rect x="2" y="2" width="28" height="28" fill="none" stroke="#e41a1c" stroke-width="4"/><path d="M6 31L8 24L21 4L26 7L13 27Z" fill="#e2cf40" stroke="#9a8a20" stroke-width="1"/><path d="M21 4L26 7L27.5 5L22.5 1.5Z" fill="#eee"/><path d="M6 31L8 24L13 27Z" fill="#ccc"/></svg>
<div class="t" style="left:133px;top:9.8px;font-size:29px;color:#e8f1fa;font-weight:bold;transform:scaleX(0.9924);transform-origin:0 0;">Language Polygons Map 3</div>
<div class="a" style="left:132px;top:40px;width:364px;height:2px;background:#e8f1fa"></div>
<div class="a" style="left:123px;top:3px;width:1px;height:37px;background:#5aa4d8"></div>
<svg class="a" style="left:48px;top:49px" width="28" height="28" viewBox="0 0 28 28"><rect x="1.2" y="1.2" width="25.6" height="25.6" rx="1.5" fill="#fff" stroke="#b4b4b4" stroke-width="2"/><path d="M6 13.5L11 21L20 5.5" fill="none" stroke="#000" stroke-width="3.4" stroke-linejoin="round"/></svg>
<svg class="a" style="left:13px;top:59px" width="17" height="9"><path d="M0 0H17L8.5 9Z" fill="#555"/></svg>
<svg class="a" style="left:92px;top:52px" width="26" height="26" viewBox="0 0 26 26"><rect x="0.0" y="0.0" width="8.7" height="8.7" fill="#2a3a50"/><rect x="8.6" y="0.0" width="8.7" height="8.7" fill="#afc6e2"/><rect x="17.2" y="0.0" width="8.7" height="8.7" fill="#2a3a50"/><rect x="0.0" y="8.6" width="8.7" height="8.7" fill="#afc6e2"/><rect x="8.6" y="8.6" width="8.7" height="8.7" fill="#2a3a50"/><rect x="17.2" y="8.6" width="8.7" height="8.7" fill="#afc6e2"/><rect x="0.0" y="17.2" width="8.7" height="8.7" fill="#2a3a50"/><rect x="8.6" y="17.2" width="8.7" height="8.7" fill="#afc6e2"/></svg>
<div class="t" style="left:133px;top:51.4px;font-size:29px;color:#000;font-weight:bold;transform:scaleX(1.0127);transform-origin:0 0;">Map 3 The Alor-Pantar languages</div>
<div class="a" style="left:88px;top:89px;width:32px;height:32px;background:#ff0000"></div>
<div class="t" style="left:133px;top:93.0px;font-size:29px;color:#000;transform:scaleX(0.9757);transform-origin:0 0;">Band 1 (Red)</div>
<div class="a" style="left:88px;top:130px;width:32px;height:32px;background:#00ff00"></div>
<div class="t" style="left:133px;top:134.6px;font-size:29px;color:#000;transform:scaleX(0.9805);transform-origin:0 0;">Band 2 (Green)</div>
<div class="a" style="left:88px;top:172px;width:32px;height:32px;background:#0000ff"></div>
<div class="t" style="left:133px;top:176.2px;font-size:29px;color:#000;transform:scaleX(0.9902);transform-origin:0 0;">Band 3 (Blue)</div>
<svg class="a" style="left:48px;top:216px" width="28" height="28" viewBox="0 0 28 28"><rect x="1.2" y="1.2" width="25.6" height="25.6" rx="1.5" fill="#fff" stroke="#b4b4b4" stroke-width="2"/><path d="M6 13.5L11 21L20 5.5" fill="none" stroke="#000" stroke-width="3.4" stroke-linejoin="round"/></svg>
<svg class="a" style="left:88px;top:214px" width="32" height="32" viewBox="0 0 32 32"><rect x="1" y="1" width="30" height="30" fill="#a8c4e0" stroke="#3e5b74" stroke-width="2"/><path d="M11 1V31M21 1V31M1 11H31M1 21H31" stroke="#3e5b74" stroke-width="2"/></svg>
<div class="t" style="left:133px;top:217.8px;font-size:29px;color:#000;font-weight:bold;transform:scaleX(0.9741);transform-origin:0 0;">Carto Basic</div>
</div>
<div class="a" style="left:352px;top:1192px;width:34px;height:3px;background-image:radial-gradient(circle,#9a9a9a 0.9px,transparent 1.1px);background-size:5.6px 3px"></div>
<div class="t" style="left:9px;top:1207.5px;font-size:29px;color:#000;transform:scaleX(1.0342);transform-origin:0 0;">Statistics</div>
<svg class="a" style="left:681px;top:1207px" width="54" height="24" viewBox="0 0 54 24"><rect x="1.5" y="1.5" width="21" height="20" rx="3" fill="none" stroke="#6a6a6a" stroke-width="2"/><rect x="5" y="9" width="8" height="8" fill="none" stroke="#6a6a6a" stroke-width="2"/><path d="M9 9V5H18V13H13" fill="none" stroke="#6a6a6a" stroke-width="2"/><rect x="29.5" y="1.5" width="21" height="20" rx="3" fill="none" stroke="#6a6a6a" stroke-width="2"/><path d="M34 6L46 17M46 6L34 17" stroke="#6a6a6a" stroke-width="3.5"/></svg>
<div class="a" style="left:1px;top:1242px;width:735px;height:52px;border:2px solid #c2c2c2;border-radius:5px;background:linear-gradient(#f8f8f8,#ebebeb)"></div>
<svg class="a" style="left:11px;top:1256px" width="34" height="26" viewBox="0 0 34 26"><path d="M3 4C3 0 10 3 17 4C24 5 31 0 31 4V20C31 24 24 21 17 20C10 19 3 24 3 20Z" fill="#ddd" stroke="#888" stroke-width="1.8"/></svg>
<div class="t" style="left:51px;top:1254.0px;font-size:29px;color:#000;transform:scaleX(1.0241);transform-origin:0 0;">language_polygons_map3_alor_pantar — Langu</div>
<svg class="a" style="left:703px;top:1264px" width="16" height="9"><path d="M0 0H16L8 9Z" fill="#444"/></svg>
<div class="a" style="left:1px;top:1302px;width:675px;height:53px;border:2px solid #c2c2c2;border-radius:5px;background:#fff"></div>
<div class="a" style="left:634px;top:1304px;width:40px;height:49px;background:linear-gradient(90deg,#fafafa,#efefef);border-left:1px solid #d8d8d8"></div>
<svg class="a" style="left:645px;top:1325px" width="17" height="9"><path d="M0 0H17L8.5 9Z" fill="#555"/></svg>
<div class="t" style="left:8px;top:1315.7px;font-size:20px;color:#555;font-weight:bold;transform:scaleX(0.9380);transform-origin:0 0;">123</div>
<div class="a" style="left:689px;top:1302px;width:47px;height:53px;border:2px solid #c2c2c2;border-radius:5px;background:linear-gradient(#fafafa,#ededed)"></div>
<div class="t" style="left:702px;top:1309px;font-size:34px;font-family:'Liberation Serif';color:#5a2d82">ε</div>
<div class="a" style="left:0;top:1361px;width:736px;height:139px;border:1px solid #b8b8b8;background:#fff"></div>
<div class="a" style="left:1px;top:1362px;width:734px;height:47px;background:#efefef"></div>
<div class="a" style="left:2px;top:1363px;width:199px;height:45px;background:linear-gradient(#fafafa,#ececec);border-right:1px solid #c8c8c8;border-bottom:2px solid #bdbdbd"></div>
<div class="a" style="left:202px;top:1363px;width:199px;height:45px;background:linear-gradient(#fafafa,#ececec);border-bottom:2px solid #bdbdbd"></div>
<div class="t" style="left:48px;top:1371.1px;font-size:29px;color:#000;transform:scaleX(1.0539);transform-origin:0 0;">Statistic</div>
<div class="t" style="left:265px;top:1371.1px;font-size:29px;color:#000;transform:scaleX(1.0136);transform-origin:0 0;">Value</div>
<svg class="a" style="left:0px;top:1516px" width="28" height="28" viewBox="0 0 28 28"><rect x="1.2" y="1.2" width="25.6" height="25.6" rx="1.5" fill="#fff" stroke="#b4b4b4" stroke-width="2"/></svg>
<div class="t" style="left:38px;top:1518.5px;font-size:29px;color:#000;transform:scaleX(1.0454);transform-origin:0 0;">Selected features only</div>
<svg class="ic" style="left:578px;top:1516px;opacity:1" width="32" height="32" viewBox="0 0 32 32"><path d="M11 3H22L27 8V25H11Z" fill="#fff" stroke="#999"/><path d="M5 8H16L21 13V30H5Z" fill="#fff" stroke="#666" stroke-width="1.3"/><path d="M8 17H18M8 21H18M8 25H18" stroke="#666" stroke-width="1.2"/></svg>
<svg class="ic" style="left:632px;top:1516px;opacity:1" width="32" height="32" viewBox="0 0 32 32"><path d="M3 15C3 7 12 2 21 5L25 2V11H16L19 8C13 7 9 10 8 15Z" fill="#5b93d0" stroke="#2e64a0"/><path d="M29 17C29 25 20 30 11 27L7 30V21H16L13 24C19 25 23 22 24 17Z" fill="#5b93d0" stroke="#2e64a0"/></svg>
<div class="a" style="left:679px;top:1508px;width:57px;height:50px;border:2px solid #c2c2c2;border-radius:5px;background:linear-gradient(#fafafa,#ededed)"></div>
<div class="t" style="left:692px;top:1520px;font-size:28px">…</div>
<svg class="a" style="left:720px;top:1546px" width="11" height="6"><path d="M0 0H11L5.5 6Z" fill="#444"/></svg>
<div class="a" style="left:748px;top:339px;width:2116px;height:1219px;border-left:1px solid #b8b8b8;border-top:1px solid #b8b8b8;background:#f4f4f4"></div>
<svg class="a" style="left:0;top:0" width="2864" height="1627" viewBox="0 0 2864 1627"><defs><clipPath id="mc"><rect x="750" y="341" width="2114" height="1216"/></clipPath></defs><g clip-path="url(#mc)">
<rect x="750" y="341" width="2114" height="1216" fill="#93bfdf"/>
<path d="M740.0 860.0C741.8 837.5 747.1 860.5 750.0 865.0C752.9 869.5 753.1 877.1 756.0 885.0C758.9 892.9 763.7 903.1 766.0 909.0C768.3 914.9 768.9 915.8 768.6 918.0C768.3 920.2 761.8 919.6 764.5 921.0C767.2 922.4 779.3 924.3 783.7 926.0C788.1 927.7 788.2 927.4 789.0 930.6C789.8 933.8 788.0 937.6 788.0 944.0C788.0 950.4 791.2 960.2 789.0 966.0C786.8 971.8 780.4 972.8 775.5 976.0C770.6 979.2 766.3 981.8 761.7 984.0C757.1 986.2 753.9 987.3 750.0 988.4C746.1 989.5 741.8 1013.1 740.0 990.0C738.2 966.9 738.2 882.5 740.0 860.0Z" fill="#e8e4d9" stroke="#fff" stroke-width="1.3"/>
<path d="M771.0 1007.6C772.7 999.8 777.0 991.5 781.0 984.0C785.0 976.5 786.6 973.1 793.0 966.0C799.4 958.9 810.0 950.3 816.7 944.4C823.4 938.5 823.5 937.4 830.4 933.4C837.3 929.4 846.3 927.6 855.0 922.4C863.7 917.2 871.8 909.8 878.5 904.6C885.2 899.4 887.8 897.1 892.0 893.6C896.2 890.1 899.3 886.6 902.0 885.0C904.7 883.4 904.6 883.1 907.0 884.6C909.4 886.1 914.3 890.8 915.6 893.6C916.9 896.4 913.0 900.7 914.0 900.4C915.0 900.1 916.8 894.2 921.0 892.0C925.2 889.8 932.6 890.4 937.6 888.0C942.6 885.6 944.2 880.5 948.5 878.5C952.8 876.5 958.6 875.3 961.6 877.0C964.6 878.7 962.9 884.8 965.0 888.0C967.1 891.2 970.0 896.3 973.0 895.0C976.0 893.7 978.0 883.7 981.5 881.0C985.0 878.3 988.8 879.3 992.5 880.0C996.2 880.7 1000.0 883.3 1002.0 885.0C1004.0 886.7 995.8 887.1 1003.5 889.4C1011.2 891.6 1035.5 894.3 1045.0 897.5C1054.5 900.7 1052.2 905.5 1056.0 907.0C1059.8 908.5 1063.0 903.5 1066.0 905.8C1069.0 908.0 1073.1 916.0 1072.8 919.5C1072.5 923.0 1067.3 922.8 1064.6 925.0C1061.9 927.2 1059.4 929.5 1057.7 932.0C1056.0 934.5 1056.7 937.0 1055.0 938.7C1053.3 940.4 1049.5 936.8 1048.0 941.5C1046.5 946.2 1046.3 954.6 1046.7 964.8C1047.1 975.0 1051.1 989.2 1050.0 998.0C1048.9 1006.8 1042.6 1009.2 1040.6 1013.7C1038.6 1018.2 1042.2 1020.1 1039.0 1023.0C1035.8 1025.9 1033.0 1028.6 1022.7 1030.0C1012.4 1031.4 991.4 1032.3 981.5 1031.0C971.6 1029.7 977.7 1024.5 967.8 1023.0C957.9 1021.5 934.8 1022.0 926.6 1022.7C918.4 1023.4 929.9 1025.9 922.5 1026.8C915.1 1027.7 894.6 1025.7 885.4 1027.5C876.2 1029.3 879.1 1035.1 871.6 1037.0C864.1 1038.9 851.4 1036.4 844.0 1037.8C836.6 1039.2 834.1 1045.6 830.4 1045.0C826.7 1044.4 829.7 1036.0 823.5 1034.3C817.3 1032.6 804.4 1033.6 796.0 1035.7C787.6 1037.8 781.5 1045.5 776.8 1046.0C772.1 1046.5 771.0 1041.8 770.0 1038.5C769.0 1035.2 771.2 1033.1 771.4 1027.5C771.6 1021.9 769.3 1015.4 771.0 1007.6Z" fill="#e8e4d9" stroke="#fff" stroke-width="1.3"/>
<path d="M959.5 1143.0C960.5 1140.0 964.3 1137.0 967.8 1136.0C971.3 1135.0 973.8 1139.6 978.8 1137.4C983.8 1135.2 988.6 1128.8 995.3 1123.6C1002.0 1118.4 1009.5 1113.7 1015.9 1108.5C1022.3 1103.3 1024.9 1100.5 1031.0 1094.8C1037.1 1089.1 1044.6 1084.2 1050.0 1077.0C1055.4 1069.8 1056.8 1061.9 1061.0 1055.0C1065.2 1048.1 1066.5 1043.7 1073.5 1038.5C1080.5 1033.3 1092.0 1029.3 1100.0 1026.0C1108.0 1022.7 1113.9 1022.9 1117.9 1020.4C1121.9 1017.9 1119.5 1014.0 1122.0 1012.0C1124.5 1010.0 1122.0 1010.5 1131.6 1009.5C1141.2 1008.5 1162.4 1009.9 1175.5 1006.7C1188.6 1003.5 1199.5 996.2 1204.4 991.6C1209.4 987.0 1204.2 984.2 1203.0 981.0C1201.8 977.8 1200.3 976.9 1198.0 974.0C1195.7 971.1 1193.4 968.1 1190.0 965.0C1186.6 961.9 1181.8 959.7 1179.0 957.0C1176.2 954.3 1176.3 952.8 1174.5 950.0C1172.7 947.2 1173.2 942.8 1169.0 941.5C1164.8 940.2 1154.4 944.5 1151.0 943.0C1147.6 941.5 1151.3 935.2 1150.0 933.0C1148.7 930.8 1146.3 930.0 1144.0 930.5C1141.7 931.0 1139.2 933.8 1137.0 936.0C1134.8 938.2 1133.6 943.5 1132.0 943.0C1130.4 942.5 1129.8 932.8 1128.0 933.0C1126.2 933.2 1125.2 942.5 1122.0 944.0C1118.8 945.5 1113.2 940.8 1110.0 941.5C1106.8 942.2 1107.4 946.3 1104.0 948.0C1100.6 949.7 1094.4 951.0 1091.0 951.0C1087.6 951.0 1085.4 949.4 1085.0 948.0C1084.6 946.6 1085.8 945.2 1089.0 943.0C1092.2 940.8 1099.9 939.4 1103.0 936.0C1106.1 932.6 1104.6 927.0 1106.0 924.0C1107.4 921.0 1108.3 922.0 1111.0 919.5C1113.7 917.0 1117.8 912.0 1121.0 910.0C1124.2 908.0 1125.0 909.9 1129.0 908.5C1133.0 907.1 1139.6 902.5 1143.0 902.0C1146.4 901.5 1145.8 902.4 1148.0 906.0C1150.2 909.6 1153.0 919.8 1155.0 922.0C1157.0 924.2 1156.7 918.5 1159.0 918.0C1161.3 917.5 1166.2 920.5 1168.0 919.5C1169.8 918.5 1167.6 912.9 1169.0 912.6C1170.4 912.3 1173.1 916.8 1176.0 918.0C1178.9 919.2 1181.6 920.2 1185.0 919.5C1188.4 918.8 1192.7 916.0 1195.0 914.0C1197.3 912.0 1195.8 911.5 1198.0 908.5C1200.2 905.5 1203.0 900.5 1207.0 897.5C1211.0 894.5 1214.1 893.7 1220.0 892.0C1225.9 890.3 1233.2 888.9 1240.0 888.0C1246.8 887.1 1251.7 886.3 1258.0 887.0C1264.3 887.7 1271.0 890.1 1275.0 892.0C1279.0 893.9 1281.1 894.8 1280.0 897.5C1278.9 900.2 1271.2 904.0 1269.0 907.0C1266.8 910.0 1269.3 911.0 1268.0 914.0C1266.7 917.0 1263.1 920.4 1262.0 923.6C1260.9 926.8 1263.4 928.8 1262.0 932.0C1260.6 935.2 1255.6 938.8 1254.0 941.5C1252.4 944.2 1255.7 944.6 1253.0 947.0C1250.3 949.4 1242.5 951.8 1239.0 955.0C1235.5 958.2 1236.2 960.8 1233.5 965.0C1230.8 969.2 1226.0 973.7 1224.0 978.6C1222.0 983.5 1223.6 988.4 1222.5 992.0C1221.4 995.6 1214.1 997.1 1218.0 998.5C1221.9 999.9 1236.8 999.0 1244.0 1000.0C1251.2 1001.0 1251.7 1003.5 1258.0 1004.0C1264.3 1004.5 1271.6 1004.8 1279.0 1002.6C1286.4 1000.4 1292.9 996.8 1299.0 991.6C1305.1 986.4 1309.9 978.5 1313.0 973.7C1316.1 968.9 1311.5 970.6 1316.0 964.8C1320.5 959.0 1331.6 947.6 1338.0 941.6C1344.4 935.6 1349.3 937.0 1351.4 931.7C1353.5 926.4 1351.5 919.7 1349.7 912.0C1347.9 904.3 1346.5 895.4 1341.5 888.8C1336.5 882.2 1322.9 879.2 1321.7 875.6C1320.5 872.0 1327.9 869.6 1335.0 869.0C1342.1 868.4 1354.8 868.7 1361.0 872.3C1367.2 875.9 1369.5 882.9 1369.5 888.8C1369.5 894.7 1357.7 902.0 1361.0 905.3C1364.3 908.6 1379.2 907.6 1387.6 907.0C1396.0 906.4 1403.2 905.3 1407.4 902.0C1411.6 898.7 1407.2 892.9 1410.7 888.8C1414.2 884.7 1428.2 881.4 1427.0 879.0C1425.8 876.6 1404.0 878.0 1404.0 875.6C1404.0 873.2 1419.9 868.7 1427.0 865.7C1434.1 862.7 1438.3 863.8 1443.7 859.0C1449.1 854.2 1450.5 844.9 1457.0 839.3C1463.5 833.7 1471.2 828.4 1480.0 827.8C1488.8 827.2 1496.5 831.0 1506.0 836.0C1515.5 841.0 1525.5 848.7 1532.7 855.8C1539.9 862.9 1540.7 871.4 1546.0 875.6C1551.3 879.8 1559.1 870.7 1562.0 879.0C1564.9 887.3 1566.1 914.1 1562.0 921.8C1557.9 929.5 1552.0 921.8 1539.0 921.8C1526.0 921.8 1503.6 918.9 1490.0 921.8C1476.4 924.7 1472.4 930.3 1463.5 938.0C1454.6 945.7 1445.7 955.1 1440.4 964.6C1435.1 974.1 1437.7 983.9 1434.0 991.0C1430.3 998.1 1425.2 998.4 1420.0 1004.0C1414.8 1009.6 1408.5 1016.1 1405.0 1022.0C1401.5 1027.9 1404.8 1030.2 1400.8 1037.0C1396.8 1043.8 1389.4 1056.0 1383.0 1060.0C1376.6 1064.0 1368.5 1059.7 1365.0 1059.0C1361.5 1058.3 1363.2 1058.0 1363.7 1056.0C1364.2 1054.0 1368.5 1050.9 1368.0 1048.0C1367.5 1045.1 1366.8 1041.5 1361.0 1039.7C1355.2 1037.9 1342.2 1036.0 1336.0 1038.0C1329.8 1040.0 1329.0 1047.2 1326.6 1050.7C1324.2 1054.2 1327.2 1053.3 1322.5 1057.5C1317.8 1061.7 1307.4 1069.0 1300.5 1074.0C1293.6 1079.0 1289.0 1080.6 1284.0 1085.0C1279.0 1089.4 1273.2 1093.3 1273.0 1098.7C1272.8 1104.1 1278.2 1109.4 1282.7 1115.0C1287.2 1120.6 1294.3 1123.2 1297.8 1130.0C1301.3 1136.8 1303.6 1145.0 1302.0 1152.6C1300.4 1160.2 1295.3 1165.5 1288.7 1172.0C1282.1 1178.5 1273.9 1186.4 1265.6 1188.8C1257.3 1191.2 1248.6 1190.7 1242.6 1185.5C1236.6 1180.3 1234.4 1167.2 1232.0 1160.0C1229.6 1152.8 1231.7 1149.0 1229.0 1145.4C1226.3 1141.8 1221.5 1140.0 1216.8 1140.0C1212.1 1140.0 1209.2 1142.7 1203.0 1145.4C1196.8 1148.1 1187.2 1153.1 1182.4 1155.0C1177.6 1156.9 1178.2 1152.9 1176.6 1156.0C1175.0 1159.1 1175.7 1165.8 1173.3 1172.3C1170.9 1178.8 1171.7 1186.7 1163.4 1192.0C1155.1 1197.3 1139.5 1203.8 1127.0 1202.0C1114.5 1200.2 1102.9 1189.1 1094.0 1182.0C1085.1 1174.9 1084.2 1167.8 1077.7 1162.5C1071.2 1157.2 1065.7 1151.4 1058.0 1152.6C1050.3 1153.8 1044.3 1166.6 1034.8 1169.0C1025.3 1171.4 1015.1 1166.6 1005.0 1165.7C994.9 1164.8 984.7 1162.2 978.8 1164.0C972.9 1165.8 975.0 1177.7 972.0 1175.6C969.0 1173.5 964.2 1158.5 962.0 1152.6C959.8 1146.7 958.5 1146.0 959.5 1143.0Z" fill="#e8e4d9" stroke="#fff" stroke-width="1.3"/>
<path d="M740.0 1068.7C744.7 1054.8 758.3 1066.3 765.9 1068.0C773.5 1069.7 777.4 1076.2 782.3 1078.3C787.2 1080.4 789.1 1081.4 793.3 1079.7C797.5 1078.0 799.0 1071.2 805.7 1068.7C812.4 1066.2 816.1 1066.7 830.4 1066.0C844.7 1065.3 873.1 1066.1 885.4 1064.6C897.7 1063.1 894.6 1058.8 899.0 1057.7C903.4 1056.6 905.8 1056.2 910.0 1058.4C914.2 1060.6 922.0 1065.9 922.5 1070.0C923.0 1074.1 915.8 1077.5 912.8 1081.0C909.8 1084.5 909.7 1086.8 906.0 1089.3C902.3 1091.8 899.4 1092.6 892.0 1094.8C884.6 1097.0 873.4 1098.1 864.8 1101.6C856.2 1105.1 852.2 1111.0 844.0 1114.0C835.8 1117.0 826.8 1119.0 819.4 1118.0C812.0 1117.0 808.2 1110.8 803.0 1108.5C797.8 1106.2 795.6 1103.5 790.6 1105.0C785.6 1106.5 780.7 1112.5 775.5 1116.8C770.3 1121.1 766.3 1125.1 761.7 1129.0C757.1 1132.9 753.9 1135.8 750.0 1138.7C746.1 1141.6 741.8 1157.6 740.0 1145.0C738.2 1132.4 735.3 1082.6 740.0 1068.7Z" fill="#e8e4d9" stroke="#fff" stroke-width="1.3"/>
<path d="M1506.0 1007.0C1509.6 1003.9 1521.2 1004.3 1525.0 1007.0C1528.8 1009.7 1526.8 1016.2 1527.0 1022.0C1527.2 1027.8 1529.1 1035.0 1526.0 1039.0C1522.9 1043.0 1513.8 1046.7 1510.0 1044.0C1506.2 1041.3 1505.7 1030.7 1505.0 1024.0C1504.3 1017.3 1502.4 1010.1 1506.0 1007.0Z" fill="#e8e4d9" stroke="#fff" stroke-width="1.3"/>
<path d="M1292.6 941.0C1293.7 938.5 1295.4 938.1 1300.0 937.0C1304.6 935.9 1314.6 933.0 1318.0 935.0C1321.4 937.0 1320.0 944.9 1318.7 948.0C1317.4 951.1 1312.7 948.6 1311.0 952.0C1309.3 955.4 1310.4 967.0 1309.0 967.0C1307.6 967.0 1305.7 954.9 1303.0 952.0C1300.3 949.1 1295.9 953.0 1294.0 951.0C1292.1 949.0 1291.5 943.5 1292.6 941.0Z" fill="#e8e4d9" stroke="#fff" stroke-width="1.3"/>
<path d="M1072.8 897.0C1073.0 895.5 1075.0 894.9 1076.0 896.0C1077.0 897.1 1078.5 901.5 1078.3 903.0C1078.1 904.5 1076.0 905.5 1075.0 904.4C1074.0 903.3 1072.6 898.5 1072.8 897.0Z" fill="#e8e4d9" stroke="#fff" stroke-width="1.3"/>
<path d="M1300 474L1310 472L1317 476L1312 484L1311 494L1304 494L1298 486Z" fill="#e8e4d9" stroke="#f6f6f0"/><path d="M1298 484L1311 488L1310 494L1303 494Z" fill="#cfe0b0"/>
<g fill="none" stroke="#fff" stroke-width="2">
<path d="M771.0 1007.0C772.8 1004.3 777.0 998.7 781.0 992.0C785.0 985.3 784.2 980.3 793.0 970.0C801.8 959.7 818.8 943.6 830.0 935.0C841.2 926.4 846.0 926.3 855.0 922.0C864.0 917.7 872.4 914.1 880.0 911.0C887.6 907.9 891.6 905.0 897.0 905.0C902.4 905.0 905.9 909.2 910.0 911.0C914.1 912.8 914.6 914.1 920.0 915.0C925.4 915.9 934.6 914.2 940.0 916.0C945.4 917.8 946.9 921.6 950.0 925.0C953.1 928.4 953.8 934.1 957.0 935.0C960.2 935.9 964.4 928.2 968.0 930.0C971.6 931.8 972.1 943.6 977.0 945.0C981.9 946.4 990.9 939.8 995.0 938.0C999.1 936.2 997.8 935.7 1000.0 935.0C1002.2 934.3 1003.4 932.6 1007.0 934.0C1010.6 935.4 1014.1 940.1 1020.0 943.0C1025.9 945.9 1035.1 946.9 1040.0 950.0C1044.9 953.1 1045.7 958.2 1047.0 960.0"/>
<path d="M750.0 922.0C752.7 921.8 758.9 920.3 765.0 921.0C771.1 921.7 779.9 924.0 784.0 926.0C788.1 928.0 787.3 930.9 788.0 932.0"/>
<path d="M1100.0 1027.0C1103.2 1025.7 1114.0 1022.7 1118.0 1020.0C1122.0 1017.3 1119.5 1014.0 1122.0 1012.0C1124.5 1010.0 1122.3 1009.9 1132.0 1009.0C1141.7 1008.1 1162.9 1010.1 1176.0 1007.0C1189.1 1003.9 1197.6 994.0 1205.0 992.0C1212.4 990.0 1209.8 994.6 1217.0 996.0C1224.2 997.4 1237.4 998.4 1245.0 1000.0C1252.6 1001.6 1252.7 1004.5 1259.0 1005.0C1265.3 1005.5 1272.6 1005.3 1280.0 1003.0C1287.4 1000.7 1293.9 997.2 1300.0 992.0C1306.1 986.8 1310.8 979.2 1314.0 974.0C1317.2 968.8 1313.3 968.8 1318.0 963.0C1322.7 957.2 1333.9 947.6 1340.0 942.0C1346.1 936.4 1349.8 933.8 1352.0 932.0"/>
</g>
<path d="M2699.0 1259.0C2665.3 1266.6 2687.5 1273.0 2683.0 1282.0C2678.5 1291.0 2676.0 1298.4 2674.0 1309.0C2672.0 1319.6 2672.0 1328.8 2672.0 1341.0C2672.0 1353.2 2675.6 1364.8 2674.0 1377.0C2672.4 1389.2 2669.1 1400.4 2663.0 1409.0C2656.9 1417.6 2649.9 1419.2 2640.0 1425.0C2630.1 1430.8 2617.0 1433.3 2608.0 1441.0C2599.0 1448.7 2594.9 1458.3 2590.0 1468.0C2585.1 1477.7 2584.2 1485.3 2581.0 1495.0C2577.8 1504.7 2576.9 1513.7 2572.0 1522.0C2567.1 1530.3 2560.5 1536.0 2554.0 1541.0C2547.5 1546.0 2547.5 1546.8 2536.0 1550.0C2524.5 1553.2 2429.9 1557.4 2490.0 1559.0C2550.1 1560.6 2801.6 1616.4 2870.0 1559.0C2938.4 1501.6 2900.8 1294.0 2870.0 1240.0C2839.2 1186.0 2732.7 1251.4 2699.0 1259.0Z" fill="#e8e4d9" stroke="#fff" stroke-width="2"/>
<g fill="none" stroke="#93bfdf" stroke-width="3.5">
<path d="M2667.0 1341.0C2674.7 1341.9 2692.4 1341.7 2710.0 1346.0C2727.6 1350.3 2750.6 1359.2 2765.0 1365.0C2779.4 1370.8 2780.1 1369.9 2790.0 1378.0C2799.9 1386.1 2811.4 1397.0 2820.0 1410.0C2828.6 1423.0 2830.1 1439.2 2838.0 1450.0C2845.9 1460.8 2859.3 1466.4 2864.0 1470.0"/>
<path d="M2776.0 1380.0C2783.9 1373.7 2806.3 1356.3 2820.0 1345.0C2833.7 1333.7 2846.2 1322.0 2852.0 1317.0"/>
<path d="M2684.0 1540.0C2692.3 1529.2 2716.3 1495.3 2730.0 1480.0C2743.7 1464.7 2749.2 1462.2 2760.0 1455.0C2770.8 1447.8 2784.6 1442.7 2790.0 1440.0"/>
<path d="M2760.0 1455.0C2763.6 1463.1 2774.6 1481.6 2780.0 1500.0C2785.4 1518.4 2788.2 1546.7 2790.0 1557.0"/>
</g><g fill="none" stroke="#fff" stroke-width="2">
<path d="M2590.0 1470.0C2595.4 1466.4 2611.0 1457.9 2620.0 1450.0C2629.0 1442.1 2636.4 1430.3 2640.0 1426.0"/>
<path d="M2530.0 1550.0C2537.2 1549.1 2555.6 1546.8 2570.0 1545.0C2584.4 1543.2 2590.2 1542.7 2610.0 1540.0C2629.8 1537.3 2653.0 1527.3 2680.0 1530.0C2707.0 1532.7 2745.6 1550.5 2760.0 1555.0"/>
</g>
<g fill="none" stroke="#a29a92" stroke-width="1.6">
<polyline points="2864,1058 2700,1110 2575,1155 2571,1286 2576,1345 2554,1436 2551,1557"/>
<polyline points="1752,1557 1751,1495 1789,1488 1927,1450 1970,1432 2063,1411 2075,1411 2129,1531 2127,1557"/>
<polyline points="2013,1557 2034,1552 2079,1549 2104,1550 2127,1554"/>
</g>
<defs><pattern id="pplus" width="30" height="30" patternUnits="userSpaceOnUse"><path d="M15 10V20M10 15H20" stroke="#a09d98" stroke-width="1.3"/></pattern><pattern id="pdash" width="40" height="40" patternUnits="userSpaceOnUse"><path d="M5 4L8 13M8 3L11 12M24 6L32 9M23 9L31 12M14 24L10 32M17 25L13 33M30 26L36 32M28 28L34 34" stroke="#a3a19c" stroke-width="1.1"/></pattern><pattern id="psq" width="32" height="32" patternUnits="userSpaceOnUse"><rect x="12" y="12" width="8" height="8" fill="#f2f0ea"/></pattern><pattern id="pdot" width="10" height="10" patternUnits="userSpaceOnUse"><circle cx="3" cy="3" r="2.3" fill="#7f7c77"/><circle cx="8" cy="8" r="2.3" fill="#7f7c77"/></pattern><pattern id="pcirc" width="28" height="28" patternUnits="userSpaceOnUse"><circle cx="14" cy="14" r="4" fill="none" stroke="#8a8782" stroke-width="1.3"/></pattern><pattern id="pstripe" width="20" height="16" patternUnits="userSpaceOnUse"><rect x="0" y="0" width="20" height="3" fill="#e6e4de"/></pattern><pattern id="pslash" width="14" height="14" patternUnits="userSpaceOnUse"><path d="M2 12L9 2" stroke="#7a7772" stroke-width="3" stroke-linecap="round"/></pattern><pattern id="phatch" width="12" height="12" patternUnits="userSpaceOnUse"><path d="M0 0L12 12M12 0L0 12" stroke="#8a8782" stroke-width="1.2"/></pattern><pattern id="pgrass" width="36" height="30" patternUnits="userSpaceOnUse"><path d="M10 20H26M14 18V15M18 18V14M22 18V15" stroke="#9a9894" stroke-width="1.2"/></pattern></defs>
<polygon points="1550,677 2861,666 2870,666 2870,1259 2864,1259 1560,1269" fill="#c8dff0" stroke="#5b6b78" stroke-width="2"/>
<path d="M1552.0 872.0C1552.9 860.8 1549.4 868.0 1557.0 868.0C1564.6 868.0 1585.0 866.8 1594.0 872.0C1603.0 877.2 1605.0 890.7 1607.0 897.0C1609.0 903.3 1608.8 903.2 1605.0 907.0C1601.2 910.8 1594.6 914.2 1586.0 918.0C1577.4 921.8 1563.1 925.8 1557.0 928.0C1550.9 930.2 1552.9 940.1 1552.0 930.0C1551.1 919.9 1551.1 883.2 1552.0 872.0Z" fill="#efeee8" stroke="#7a8a96" stroke-width="1"/>
<path d="M1552 868L1557 868L1557 930L1552 930Z" fill="#efeee8"/>
<path d="M2699 1260C2712 1248 2740 1236 2780 1228C2810 1222 2840 1216 2870 1212L2870 1260Z" fill="#efeee8"/>
<path d="M1702.0 868.0C1703.4 864.8 1708.8 864.0 1712.0 864.0C1715.2 864.0 1719.6 865.1 1720.0 868.0C1720.4 870.9 1716.9 877.5 1714.0 880.0C1711.1 882.5 1706.2 884.2 1704.0 882.0C1701.8 879.8 1700.6 871.2 1702.0 868.0Z" fill="#efeee8" stroke="#7a8a96" stroke-width="1"/>
<path d="M1743.0 878.0C1744.3 875.1 1748.4 873.2 1752.0 873.0C1755.6 872.8 1762.1 874.5 1763.0 877.0C1763.9 879.5 1760.2 884.8 1757.0 887.0C1753.8 889.2 1747.5 890.6 1745.0 889.0C1742.5 887.4 1741.7 880.9 1743.0 878.0Z" fill="#efeee8" stroke="#7a8a96" stroke-width="1"/>
<path d="M2011.0 830.0C2012.3 827.1 2017.1 825.3 2020.0 826.0C2022.9 826.7 2026.6 830.9 2027.0 834.0C2027.4 837.1 2024.5 841.6 2022.0 843.0C2019.5 844.4 2015.0 844.3 2013.0 842.0C2011.0 839.7 2009.7 832.9 2011.0 830.0Z" fill="#efeee8" stroke="#7a8a96" stroke-width="1"/>
<path d="M2005.0 866.0C2005.7 861.3 2009.3 856.4 2012.0 856.0C2014.7 855.6 2018.2 860.0 2020.0 864.0C2021.8 868.0 2024.2 874.8 2022.0 878.0C2019.8 881.2 2011.1 884.2 2008.0 882.0C2004.9 879.8 2004.3 870.7 2005.0 866.0Z" fill="#efeee8" stroke="#7a8a96" stroke-width="1"/>
<path d="M1588.0 996.0C1589.1 990.6 1594.1 990.7 1602.0 990.0C1609.9 989.3 1626.2 988.8 1632.0 992.0C1637.8 995.2 1636.5 1003.0 1634.0 1008.0C1631.5 1013.0 1624.8 1017.8 1618.0 1020.0C1611.2 1022.2 1601.4 1024.3 1596.0 1020.0C1590.6 1015.7 1586.9 1001.4 1588.0 996.0Z" fill="#efeee8" stroke="#7a8a96" stroke-width="1"/>
<path d="M1565.0 1005.0C1565.5 1002.5 1572.3 999.1 1575.0 1000.0C1577.7 1000.9 1580.5 1007.5 1580.0 1010.0C1579.5 1012.5 1574.7 1014.9 1572.0 1014.0C1569.3 1013.1 1564.5 1007.5 1565.0 1005.0Z" fill="#efeee8" stroke="#7a8a96" stroke-width="1"/>
<path d="M1928.0 1095.0C1928.7 1092.5 1936.8 1091.1 1940.0 1092.0C1943.2 1092.9 1946.7 1097.5 1946.0 1100.0C1945.3 1102.5 1939.2 1106.9 1936.0 1106.0C1932.8 1105.1 1927.3 1097.5 1928.0 1095.0Z" fill="#efeee8" stroke="#7a8a96" stroke-width="1"/>
<path d="M1968.0 940.0C1969.8 931.0 1977.4 927.5 1985.0 925.0C1992.6 922.5 2003.7 922.4 2010.0 926.0C2016.3 929.6 2019.6 936.2 2020.0 945.0C2020.4 953.8 2016.5 967.8 2012.0 975.0C2007.5 982.2 2001.7 985.0 1995.0 985.0C1988.3 985.0 1979.9 983.1 1975.0 975.0C1970.1 966.9 1966.2 949.0 1968.0 940.0Z" fill="#a8a6a1" stroke="#7d92a4" stroke-width="2"/>
<path d="M1588.0 1082.0C1585.3 1075.5 1595.3 1073.5 1605.0 1058.0C1614.7 1042.5 1631.7 1011.1 1642.0 996.0C1652.3 980.9 1651.6 982.1 1662.0 974.0C1672.4 965.9 1688.8 956.8 1700.0 951.0C1711.2 945.2 1715.7 941.1 1724.0 942.0C1732.3 942.9 1740.2 950.4 1746.0 956.0C1751.8 961.6 1753.1 966.2 1756.0 973.0C1758.9 979.8 1759.1 987.7 1762.0 994.0C1764.9 1000.3 1767.0 1006.9 1772.0 1008.0C1777.0 1009.1 1781.7 1007.2 1790.0 1000.0C1798.3 992.8 1807.9 983.5 1818.0 968.0C1828.1 952.5 1837.4 926.6 1846.0 914.0C1854.6 901.4 1858.1 908.4 1866.0 898.0C1873.9 887.6 1881.7 867.9 1890.0 856.0C1898.3 844.1 1903.9 836.3 1912.0 832.0C1920.1 827.7 1927.8 829.5 1935.0 832.0C1942.2 834.5 1946.8 838.4 1952.0 846.0C1957.2 853.6 1964.4 863.4 1964.0 874.0C1963.6 884.6 1952.5 894.9 1950.0 905.0C1947.5 915.1 1948.6 920.8 1950.0 930.0C1951.4 939.2 1959.4 947.0 1958.0 956.0C1956.6 965.0 1951.4 970.6 1942.0 980.0C1932.6 989.4 1916.4 998.1 1906.0 1008.0C1895.6 1017.9 1890.1 1026.0 1884.0 1035.0C1877.9 1044.0 1875.2 1047.0 1872.0 1058.0C1868.8 1069.0 1868.9 1084.8 1866.0 1096.0C1863.1 1107.2 1860.3 1112.1 1856.0 1120.0C1851.7 1127.9 1847.0 1133.7 1842.0 1140.0C1837.0 1146.3 1833.4 1150.3 1828.0 1155.0C1822.6 1159.7 1821.0 1162.2 1812.0 1166.0C1803.0 1169.8 1789.9 1172.9 1778.0 1176.0C1766.1 1179.1 1756.1 1183.0 1746.0 1183.0C1735.9 1183.0 1728.1 1181.8 1722.0 1176.0C1715.9 1170.2 1712.4 1161.8 1712.0 1151.0C1711.6 1140.2 1721.1 1129.1 1720.0 1116.0C1718.9 1102.9 1711.4 1087.0 1706.0 1078.0C1700.6 1069.0 1699.0 1066.9 1690.0 1066.0C1681.0 1065.1 1668.6 1068.0 1656.0 1073.0C1643.4 1078.0 1632.2 1092.4 1620.0 1094.0C1607.8 1095.6 1590.7 1088.5 1588.0 1082.0Z" fill="#e4e2dc" stroke="#7d92a4" stroke-width="2"/>
<path d="M1588.0 1082.0C1585.3 1075.5 1595.3 1073.5 1605.0 1058.0C1614.7 1042.5 1631.7 1011.1 1642.0 996.0C1652.3 980.9 1651.6 982.1 1662.0 974.0C1672.4 965.9 1688.8 956.8 1700.0 951.0C1711.2 945.2 1715.7 941.1 1724.0 942.0C1732.3 942.9 1740.2 950.4 1746.0 956.0C1751.8 961.6 1753.1 966.2 1756.0 973.0C1758.9 979.8 1759.1 987.7 1762.0 994.0C1764.9 1000.3 1767.0 1006.9 1772.0 1008.0C1777.0 1009.1 1781.7 1007.2 1790.0 1000.0C1798.3 992.8 1807.9 983.5 1818.0 968.0C1828.1 952.5 1837.4 926.6 1846.0 914.0C1854.6 901.4 1858.1 908.4 1866.0 898.0C1873.9 887.6 1881.7 867.9 1890.0 856.0C1898.3 844.1 1903.9 836.3 1912.0 832.0C1920.1 827.7 1927.8 829.5 1935.0 832.0C1942.2 834.5 1946.8 838.4 1952.0 846.0C1957.2 853.6 1964.4 863.4 1964.0 874.0C1963.6 884.6 1952.5 894.9 1950.0 905.0C1947.5 915.1 1948.6 920.8 1950.0 930.0C1951.4 939.2 1959.4 947.0 1958.0 956.0C1956.6 965.0 1951.4 970.6 1942.0 980.0C1932.6 989.4 1916.4 998.1 1906.0 1008.0C1895.6 1017.9 1890.1 1026.0 1884.0 1035.0C1877.9 1044.0 1875.2 1047.0 1872.0 1058.0C1868.8 1069.0 1868.9 1084.8 1866.0 1096.0C1863.1 1107.2 1860.3 1112.1 1856.0 1120.0C1851.7 1127.9 1847.0 1133.7 1842.0 1140.0C1837.0 1146.3 1833.4 1150.3 1828.0 1155.0C1822.6 1159.7 1821.0 1162.2 1812.0 1166.0C1803.0 1169.8 1789.9 1172.9 1778.0 1176.0C1766.1 1179.1 1756.1 1183.0 1746.0 1183.0C1735.9 1183.0 1728.1 1181.8 1722.0 1176.0C1715.9 1170.2 1712.4 1161.8 1712.0 1151.0C1711.6 1140.2 1721.1 1129.1 1720.0 1116.0C1718.9 1102.9 1711.4 1087.0 1706.0 1078.0C1700.6 1069.0 1699.0 1066.9 1690.0 1066.0C1681.0 1065.1 1668.6 1068.0 1656.0 1073.0C1643.4 1078.0 1632.2 1092.4 1620.0 1094.0C1607.8 1095.6 1590.7 1088.5 1588.0 1082.0Z" fill="url(#pplus)"/>
<path d="M1874.0 898.0C1869.5 888.3 1887.4 857.7 1895.0 846.0C1902.6 834.3 1906.6 835.0 1916.0 833.0C1925.4 831.0 1938.0 831.9 1947.0 835.0C1956.0 838.1 1961.9 842.6 1966.0 850.0C1970.1 857.4 1972.0 866.6 1970.0 876.0C1968.0 885.4 1964.0 897.7 1955.0 902.0C1946.0 906.3 1934.6 900.7 1920.0 900.0C1905.4 899.3 1878.5 907.7 1874.0 898.0Z" fill="#efeee8"/>
<path d="M1846 928L1872 904L1952 902L1958 958L1942 980L1900 1004L1840 990Z" fill="#8b8883"/>
<path d="M1846 928L1872 904L1952 902L1958 958L1942 980L1900 1004L1840 990Z" fill="url(#psq)" opacity="0.8"/>
<path d="M1900 904L1925 904L1925 990L1900 1000Z" fill="#d0cec9"/>
<path d="M1830 960L1860 930L1885 956L1880 1000L1840 995Z" fill="#e8e6e2"/><path d="M1830 960L1860 930L1885 956L1880 1000L1840 995Z" fill="url(#pplus)"/>
<path d="M1780.0 1000.0C1785.8 991.9 1800.4 989.5 1822.0 985.0C1843.6 980.5 1879.7 975.2 1900.0 975.0C1920.3 974.8 1933.9 977.7 1935.0 984.0C1936.1 990.3 1915.2 1000.6 1906.0 1010.0C1896.8 1019.4 1890.1 1027.0 1884.0 1036.0C1877.9 1045.0 1877.2 1057.5 1872.0 1060.0C1866.8 1062.5 1864.4 1050.0 1855.0 1050.0C1845.6 1050.0 1831.7 1063.6 1820.0 1060.0C1808.3 1056.4 1797.2 1040.8 1790.0 1030.0C1782.8 1019.2 1774.2 1008.1 1780.0 1000.0Z" fill="#9d9a95"/>
<path d="M1836.0 960.0C1845.0 950.1 1862.0 952.3 1880.0 955.0C1898.0 957.7 1932.4 966.9 1936.0 975.0C1939.6 983.1 1911.9 990.1 1900.0 1000.0C1888.1 1009.9 1882.6 1028.2 1870.0 1030.0C1857.4 1031.8 1836.1 1022.6 1830.0 1010.0C1823.9 997.4 1827.0 969.9 1836.0 960.0Z" fill="#f1f0ea"/>
<path d="M1786.0 1014.0C1791.4 1003.2 1816.3 997.1 1830.0 1000.0C1843.7 1002.9 1857.3 1015.6 1862.0 1030.0C1866.7 1044.4 1862.1 1067.4 1856.0 1080.0C1849.9 1092.6 1838.1 1103.6 1828.0 1100.0C1817.9 1096.4 1807.6 1075.5 1800.0 1060.0C1792.4 1044.5 1780.6 1024.8 1786.0 1014.0Z" fill="#ecebe6"/><path d="M1786.0 1014.0C1791.4 1003.2 1816.3 997.1 1830.0 1000.0C1843.7 1002.9 1857.3 1015.6 1862.0 1030.0C1866.7 1044.4 1862.1 1067.4 1856.0 1080.0C1849.9 1092.6 1838.1 1103.6 1828.0 1100.0C1817.9 1096.4 1807.6 1075.5 1800.0 1060.0C1792.4 1044.5 1780.6 1024.8 1786.0 1014.0Z" fill="url(#pslash)"/>
<path d="M1866.0 1040.0C1872.1 1035.5 1882.9 1027.8 1884.0 1035.0C1885.1 1042.2 1876.7 1065.6 1872.0 1080.0C1867.3 1094.4 1862.9 1106.0 1858.0 1115.0C1853.1 1124.0 1848.2 1132.7 1845.0 1130.0C1841.8 1127.3 1839.1 1112.6 1840.0 1100.0C1840.9 1087.4 1845.3 1070.8 1850.0 1060.0C1854.7 1049.2 1859.9 1044.5 1866.0 1040.0Z" fill="#8e8b86"/>
<pattern id="pdiag" width="12" height="12" patternUnits="userSpaceOnUse"><path d="M0 12L12 0" stroke="#8c8a85" stroke-width="1"/></pattern>
<path d="M1834.0 975.0C1836.5 969.1 1840.3 964.7 1850.0 962.0C1859.7 959.3 1881.7 955.9 1888.0 960.0C1894.3 964.1 1888.6 976.7 1885.0 985.0C1881.4 993.3 1875.0 1001.1 1868.0 1006.0C1861.0 1010.9 1851.8 1014.0 1846.0 1012.0C1840.2 1010.0 1838.2 1001.7 1836.0 995.0C1833.8 988.3 1831.5 980.9 1834.0 975.0Z" fill="#aeaca7"/>
<path d="M1834.0 975.0C1836.5 969.1 1840.3 964.7 1850.0 962.0C1859.7 959.3 1881.7 955.9 1888.0 960.0C1894.3 964.1 1888.6 976.7 1885.0 985.0C1881.4 993.3 1875.0 1001.1 1868.0 1006.0C1861.0 1010.9 1851.8 1014.0 1846.0 1012.0C1840.2 1010.0 1838.2 1001.7 1836.0 995.0C1833.8 988.3 1831.5 980.9 1834.0 975.0Z" fill="url(#pdiag)"/>
<path d="M1974.0 1048.0C1974.9 1041.9 1978.2 1035.6 1985.0 1028.0C1991.8 1020.4 2005.3 1012.1 2012.0 1006.0C2018.7 999.9 2016.2 1002.6 2022.0 994.0C2027.8 985.4 2039.0 967.4 2044.0 958.0C2049.0 948.6 2039.9 949.2 2050.0 942.0C2060.1 934.8 2083.8 924.7 2100.0 918.0C2116.2 911.3 2135.7 907.9 2140.0 905.0C2144.3 902.1 2134.1 900.4 2124.0 902.0C2113.9 903.6 2095.9 910.8 2084.0 914.0C2072.1 917.2 2065.9 919.6 2058.0 920.0C2050.1 920.4 2045.0 918.2 2040.0 916.0C2035.0 913.8 2031.4 915.9 2030.0 908.0C2028.6 900.1 2029.5 881.0 2032.0 872.0C2034.5 863.0 2037.9 864.1 2044.0 858.0C2050.1 851.9 2060.6 844.5 2066.0 838.0C2071.4 831.5 2070.8 827.8 2074.0 822.0C2077.2 816.2 2078.2 812.1 2084.0 806.0C2089.8 799.9 2098.1 790.5 2106.0 788.0C2113.9 785.5 2116.1 792.9 2128.0 792.0C2139.9 791.1 2159.9 784.1 2172.0 783.0C2184.1 781.9 2187.3 782.0 2195.0 786.0C2202.7 790.0 2210.1 795.3 2215.0 805.0C2219.9 814.7 2219.3 831.5 2222.0 840.0C2224.7 848.5 2222.8 853.8 2230.0 852.0C2237.2 850.2 2244.4 836.7 2262.0 830.0C2279.6 823.3 2306.8 818.6 2328.0 815.0C2349.2 811.4 2359.8 810.5 2380.0 810.0C2400.2 809.5 2419.8 810.2 2440.0 812.0C2460.2 813.8 2476.2 820.4 2492.0 820.0C2507.8 819.6 2518.5 813.8 2528.0 810.0C2537.5 806.2 2539.2 799.7 2545.0 799.0C2550.8 798.3 2554.1 803.1 2560.0 806.0C2565.9 808.9 2565.9 814.6 2578.0 815.0C2590.1 815.4 2611.2 808.9 2627.0 808.0C2642.8 807.1 2656.1 806.8 2666.0 810.0C2675.9 813.2 2675.9 817.7 2682.0 826.0C2688.1 834.3 2694.2 847.0 2700.0 856.0C2705.8 865.0 2711.1 869.2 2714.0 876.0C2716.9 882.8 2716.0 878.5 2716.0 894.0C2716.0 909.5 2715.3 947.4 2714.0 962.0C2712.7 976.6 2713.0 970.3 2709.0 975.0C2705.0 979.7 2700.8 984.6 2692.0 988.0C2683.2 991.4 2676.6 993.1 2660.0 994.0C2643.4 994.9 2624.5 992.8 2600.0 993.0C2575.5 993.2 2545.6 992.8 2524.0 995.0C2502.4 997.2 2496.4 1000.1 2480.0 1005.0C2463.6 1009.9 2447.4 1016.8 2433.0 1022.0C2418.6 1027.2 2411.0 1030.8 2400.0 1034.0C2389.0 1037.2 2384.6 1039.3 2372.0 1040.0C2359.4 1040.7 2346.2 1038.7 2330.0 1038.0C2313.8 1037.3 2294.2 1034.9 2282.0 1036.0C2269.8 1037.1 2269.9 1039.9 2262.0 1044.0C2254.1 1048.1 2249.5 1054.0 2238.0 1059.0C2226.5 1064.0 2210.2 1067.9 2198.0 1072.0C2185.8 1076.1 2178.6 1082.4 2170.0 1082.0C2161.4 1081.6 2157.0 1073.2 2150.0 1070.0C2143.0 1066.8 2136.4 1064.7 2131.0 1064.0C2125.6 1063.3 2127.0 1063.1 2120.0 1066.0C2113.0 1068.9 2100.3 1074.4 2092.0 1080.0C2083.7 1085.6 2078.9 1093.2 2074.0 1097.0C2069.1 1100.8 2070.6 1103.3 2065.0 1101.0C2059.4 1098.7 2048.6 1087.8 2043.0 1084.0C2037.4 1080.2 2039.2 1078.2 2034.0 1080.0C2028.8 1081.8 2021.2 1093.3 2014.0 1094.0C2006.8 1094.7 2000.1 1089.8 1994.0 1084.0C1987.9 1078.2 1983.6 1068.5 1980.0 1062.0C1976.4 1055.5 1973.1 1054.1 1974.0 1048.0Z" fill="#f1f0ea" stroke="#7d92a4" stroke-width="2"/>
<path d="M1974.0 1048.0C1974.9 1041.9 1978.2 1035.6 1985.0 1028.0C1991.8 1020.4 2005.3 1012.1 2012.0 1006.0C2018.7 999.9 2016.2 1002.6 2022.0 994.0C2027.8 985.4 2039.0 967.4 2044.0 958.0C2049.0 948.6 2039.9 949.2 2050.0 942.0C2060.1 934.8 2083.8 924.7 2100.0 918.0C2116.2 911.3 2135.7 907.9 2140.0 905.0C2144.3 902.1 2134.1 900.4 2124.0 902.0C2113.9 903.6 2095.9 910.8 2084.0 914.0C2072.1 917.2 2065.9 919.6 2058.0 920.0C2050.1 920.4 2045.0 918.2 2040.0 916.0C2035.0 913.8 2031.4 915.9 2030.0 908.0C2028.6 900.1 2029.5 881.0 2032.0 872.0C2034.5 863.0 2037.9 864.1 2044.0 858.0C2050.1 851.9 2060.6 844.5 2066.0 838.0C2071.4 831.5 2070.8 827.8 2074.0 822.0C2077.2 816.2 2078.2 812.1 2084.0 806.0C2089.8 799.9 2098.1 790.5 2106.0 788.0C2113.9 785.5 2116.1 792.9 2128.0 792.0C2139.9 791.1 2159.9 784.1 2172.0 783.0C2184.1 781.9 2187.3 782.0 2195.0 786.0C2202.7 790.0 2210.1 795.3 2215.0 805.0C2219.9 814.7 2219.3 831.5 2222.0 840.0C2224.7 848.5 2222.8 853.8 2230.0 852.0C2237.2 850.2 2244.4 836.7 2262.0 830.0C2279.6 823.3 2306.8 818.6 2328.0 815.0C2349.2 811.4 2359.8 810.5 2380.0 810.0C2400.2 809.5 2419.8 810.2 2440.0 812.0C2460.2 813.8 2476.2 820.4 2492.0 820.0C2507.8 819.6 2518.5 813.8 2528.0 810.0C2537.5 806.2 2539.2 799.7 2545.0 799.0C2550.8 798.3 2554.1 803.1 2560.0 806.0C2565.9 808.9 2565.9 814.6 2578.0 815.0C2590.1 815.4 2611.2 808.9 2627.0 808.0C2642.8 807.1 2656.1 806.8 2666.0 810.0C2675.9 813.2 2675.9 817.7 2682.0 826.0C2688.1 834.3 2694.2 847.0 2700.0 856.0C2705.8 865.0 2711.1 869.2 2714.0 876.0C2716.9 882.8 2716.0 878.5 2716.0 894.0C2716.0 909.5 2715.3 947.4 2714.0 962.0C2712.7 976.6 2713.0 970.3 2709.0 975.0C2705.0 979.7 2700.8 984.6 2692.0 988.0C2683.2 991.4 2676.6 993.1 2660.0 994.0C2643.4 994.9 2624.5 992.8 2600.0 993.0C2575.5 993.2 2545.6 992.8 2524.0 995.0C2502.4 997.2 2496.4 1000.1 2480.0 1005.0C2463.6 1009.9 2447.4 1016.8 2433.0 1022.0C2418.6 1027.2 2411.0 1030.8 2400.0 1034.0C2389.0 1037.2 2384.6 1039.3 2372.0 1040.0C2359.4 1040.7 2346.2 1038.7 2330.0 1038.0C2313.8 1037.3 2294.2 1034.9 2282.0 1036.0C2269.8 1037.1 2269.9 1039.9 2262.0 1044.0C2254.1 1048.1 2249.5 1054.0 2238.0 1059.0C2226.5 1064.0 2210.2 1067.9 2198.0 1072.0C2185.8 1076.1 2178.6 1082.4 2170.0 1082.0C2161.4 1081.6 2157.0 1073.2 2150.0 1070.0C2143.0 1066.8 2136.4 1064.7 2131.0 1064.0C2125.6 1063.3 2127.0 1063.1 2120.0 1066.0C2113.0 1068.9 2100.3 1074.4 2092.0 1080.0C2083.7 1085.6 2078.9 1093.2 2074.0 1097.0C2069.1 1100.8 2070.6 1103.3 2065.0 1101.0C2059.4 1098.7 2048.6 1087.8 2043.0 1084.0C2037.4 1080.2 2039.2 1078.2 2034.0 1080.0C2028.8 1081.8 2021.2 1093.3 2014.0 1094.0C2006.8 1094.7 2000.1 1089.8 1994.0 1084.0C1987.9 1078.2 1983.6 1068.5 1980.0 1062.0C1976.4 1055.5 1973.1 1054.1 1974.0 1048.0Z" fill="url(#pdash)"/>
<path d="M2054.0 820.0C2056.9 805.6 2063.5 805.4 2070.0 800.0C2076.5 794.6 2081.0 790.9 2090.0 790.0C2099.0 789.1 2113.5 787.8 2120.0 795.0C2126.5 802.2 2125.6 816.5 2126.0 830.0C2126.4 843.5 2124.9 857.4 2122.0 870.0C2119.1 882.6 2116.8 893.7 2110.0 900.0C2103.2 906.3 2093.0 903.9 2084.0 905.0C2075.0 906.1 2065.4 910.5 2060.0 906.0C2054.6 901.5 2055.1 895.5 2054.0 880.0C2052.9 864.5 2051.1 834.4 2054.0 820.0Z" fill="#dddbd5" opacity="1"/>
<path d="M2122.0 796.0C2130.6 786.3 2156.7 787.4 2170.0 786.0C2183.3 784.6 2188.4 784.4 2196.0 788.0C2203.6 791.6 2208.8 796.3 2212.0 806.0C2215.2 815.7 2211.5 833.0 2214.0 842.0C2216.5 851.0 2228.5 851.0 2226.0 856.0C2223.5 861.0 2210.1 866.6 2200.0 870.0C2189.9 873.4 2183.5 873.2 2170.0 875.0C2156.5 876.8 2133.6 886.3 2125.0 880.0C2116.4 873.7 2122.5 855.1 2122.0 840.0C2121.5 824.9 2113.4 805.7 2122.0 796.0Z" fill="#e8e6e0" opacity="1"/>
<path d="M2122.0 796.0C2130.6 786.3 2156.7 787.4 2170.0 786.0C2183.3 784.6 2188.4 784.4 2196.0 788.0C2203.6 791.6 2208.8 796.3 2212.0 806.0C2215.2 815.7 2211.5 833.0 2214.0 842.0C2216.5 851.0 2228.5 851.0 2226.0 856.0C2223.5 861.0 2210.1 866.6 2200.0 870.0C2189.9 873.4 2183.5 873.2 2170.0 875.0C2156.5 876.8 2133.6 886.3 2125.0 880.0C2116.4 873.7 2122.5 855.1 2122.0 840.0C2121.5 824.9 2113.4 805.7 2122.0 796.0Z" fill="url(#pdot)"/>
<path d="M2170.0 818.0C2173.6 813.5 2185.0 811.0 2190.0 815.0C2195.0 819.0 2197.3 831.9 2198.0 840.0C2198.7 848.1 2198.0 856.0 2194.0 860.0C2190.0 864.0 2180.3 865.6 2176.0 862.0C2171.7 858.4 2171.1 847.9 2170.0 840.0C2168.9 832.1 2166.4 822.5 2170.0 818.0Z" fill="#c9d6b5" opacity="0.6"/>
<path d="M2170.0 818.0C2173.6 813.5 2185.0 811.0 2190.0 815.0C2195.0 819.0 2197.3 831.9 2198.0 840.0C2198.7 848.1 2198.0 856.0 2194.0 860.0C2190.0 864.0 2180.3 865.6 2176.0 862.0C2171.7 858.4 2171.1 847.9 2170.0 840.0C2168.9 832.1 2166.4 822.5 2170.0 818.0Z" fill="url(#pdot)"/>
<path d="M2362.0 815.0C2372.4 808.2 2407.7 810.7 2430.0 812.0C2452.3 813.3 2476.6 813.4 2486.0 822.0C2495.4 830.6 2486.3 847.8 2482.0 860.0C2477.7 872.2 2471.4 883.3 2462.0 890.0C2452.6 896.7 2444.8 897.0 2430.0 897.0C2415.2 897.0 2390.4 898.5 2380.0 890.0C2369.6 881.5 2375.2 863.5 2372.0 850.0C2368.8 836.5 2351.6 821.8 2362.0 815.0Z" fill="#cbc9c4" opacity="1"/>
<path d="M2362.0 815.0C2372.4 808.2 2407.7 810.7 2430.0 812.0C2452.3 813.3 2476.6 813.4 2486.0 822.0C2495.4 830.6 2486.3 847.8 2482.0 860.0C2477.7 872.2 2471.4 883.3 2462.0 890.0C2452.6 896.7 2444.8 897.0 2430.0 897.0C2415.2 897.0 2390.4 898.5 2380.0 890.0C2369.6 881.5 2375.2 863.5 2372.0 850.0C2368.8 836.5 2351.6 821.8 2362.0 815.0Z" fill="url(#pcirc)"/>
<path d="M2372.0 890.0C2376.5 881.0 2390.3 879.1 2400.0 880.0C2409.7 880.9 2422.4 883.3 2426.0 895.0C2429.6 906.7 2424.7 934.2 2420.0 945.0C2415.3 955.8 2408.1 957.7 2400.0 955.0C2391.9 952.3 2380.0 941.7 2375.0 930.0C2370.0 918.3 2367.5 899.0 2372.0 890.0Z" fill="#e2e1dc" opacity="1"/>
<path d="M2372.0 890.0C2376.5 881.0 2390.3 879.1 2400.0 880.0C2409.7 880.9 2422.4 883.3 2426.0 895.0C2429.6 906.7 2424.7 934.2 2420.0 945.0C2415.3 955.8 2408.1 957.7 2400.0 955.0C2391.9 952.3 2380.0 941.7 2375.0 930.0C2370.0 918.3 2367.5 899.0 2372.0 890.0Z" fill="url(#phatch)"/>
<path d="M2474.0 815.0C2480.8 807.4 2512.1 810.7 2524.0 808.0C2535.9 805.3 2533.5 800.0 2540.0 800.0C2546.5 800.0 2553.2 804.8 2560.0 808.0C2566.8 811.2 2565.9 817.6 2578.0 818.0C2590.1 818.4 2611.5 811.1 2627.0 810.0C2642.5 808.9 2654.5 809.1 2664.0 812.0C2673.5 814.9 2673.5 818.1 2680.0 826.0C2686.5 833.9 2694.6 846.6 2700.0 856.0C2705.4 865.4 2708.9 862.9 2710.0 878.0C2711.1 893.1 2707.8 920.7 2706.0 940.0C2704.2 959.3 2708.3 974.2 2700.0 985.0C2691.7 995.8 2674.4 1001.8 2660.0 1000.0C2645.6 998.2 2636.2 983.1 2620.0 975.0C2603.8 966.9 2588.0 961.3 2570.0 955.0C2552.0 948.7 2530.8 953.5 2520.0 940.0C2509.2 926.5 2516.1 896.2 2510.0 880.0C2503.9 863.8 2492.5 861.7 2486.0 850.0C2479.5 838.3 2467.2 822.6 2474.0 815.0Z" fill="#8a8782" opacity="1"/>
<path d="M2474.0 815.0C2480.8 807.4 2512.1 810.7 2524.0 808.0C2535.9 805.3 2533.5 800.0 2540.0 800.0C2546.5 800.0 2553.2 804.8 2560.0 808.0C2566.8 811.2 2565.9 817.6 2578.0 818.0C2590.1 818.4 2611.5 811.1 2627.0 810.0C2642.5 808.9 2654.5 809.1 2664.0 812.0C2673.5 814.9 2673.5 818.1 2680.0 826.0C2686.5 833.9 2694.6 846.6 2700.0 856.0C2705.4 865.4 2708.9 862.9 2710.0 878.0C2711.1 893.1 2707.8 920.7 2706.0 940.0C2704.2 959.3 2708.3 974.2 2700.0 985.0C2691.7 995.8 2674.4 1001.8 2660.0 1000.0C2645.6 998.2 2636.2 983.1 2620.0 975.0C2603.8 966.9 2588.0 961.3 2570.0 955.0C2552.0 948.7 2530.8 953.5 2520.0 940.0C2509.2 926.5 2516.1 896.2 2510.0 880.0C2503.9 863.8 2492.5 861.7 2486.0 850.0C2479.5 838.3 2467.2 822.6 2474.0 815.0Z" fill="url(#psq)"/>
<path d="M2484.0 834.0C2490.7 828.6 2507.4 827.5 2515.0 830.0C2522.6 832.5 2520.4 839.4 2526.0 848.0C2531.6 856.6 2539.5 864.1 2546.0 878.0C2552.5 891.9 2556.6 908.8 2562.0 925.0C2567.4 941.2 2581.8 957.7 2576.0 968.0C2570.2 978.3 2547.3 979.8 2530.0 982.0C2512.7 984.2 2494.0 984.0 2480.0 980.0C2466.0 976.0 2456.9 973.7 2452.0 960.0C2447.1 946.3 2450.1 918.4 2453.0 904.0C2455.9 889.6 2463.5 887.9 2468.0 880.0C2472.5 872.1 2475.1 868.3 2478.0 860.0C2480.9 851.7 2477.3 839.4 2484.0 834.0Z" fill="#f0efea" opacity="1"/>
<path d="M2484.0 834.0C2490.7 828.6 2507.4 827.5 2515.0 830.0C2522.6 832.5 2520.4 839.4 2526.0 848.0C2531.6 856.6 2539.5 864.1 2546.0 878.0C2552.5 891.9 2556.6 908.8 2562.0 925.0C2567.4 941.2 2581.8 957.7 2576.0 968.0C2570.2 978.3 2547.3 979.8 2530.0 982.0C2512.7 984.2 2494.0 984.0 2480.0 980.0C2466.0 976.0 2456.9 973.7 2452.0 960.0C2447.1 946.3 2450.1 918.4 2453.0 904.0C2455.9 889.6 2463.5 887.9 2468.0 880.0C2472.5 872.1 2475.1 868.3 2478.0 860.0C2480.9 851.7 2477.3 839.4 2484.0 834.0Z" fill="url(#pplus)"/>
<path d="M2632.0 915.0C2639.2 903.3 2667.0 895.9 2680.0 895.0C2693.0 894.1 2699.0 898.3 2704.0 910.0C2709.0 921.7 2708.7 946.5 2708.0 960.0C2707.3 973.5 2708.6 979.6 2700.0 985.0C2691.4 990.4 2670.8 994.5 2660.0 990.0C2649.2 985.5 2645.0 973.5 2640.0 960.0C2635.0 946.5 2624.8 926.7 2632.0 915.0Z" fill="#e4e3df" opacity="1"/>
<path d="M2692.0 900.0C2694.2 887.4 2708.4 877.4 2712.0 890.0C2715.6 902.6 2714.2 957.4 2712.0 970.0C2709.8 982.6 2703.6 972.6 2700.0 960.0C2696.4 947.4 2689.8 912.6 2692.0 900.0Z" fill="#a8a6a2" opacity="1"/>
<path d="M2524.0 995.0C2513.6 991.8 2519.9 979.9 2530.0 975.0C2540.1 970.1 2562.5 969.4 2580.0 968.0C2597.5 966.6 2614.4 963.9 2627.0 967.0C2639.6 970.1 2647.7 980.3 2650.0 985.0C2652.3 989.7 2651.2 991.6 2640.0 993.0C2628.8 994.4 2608.9 992.6 2588.0 993.0C2567.1 993.4 2534.4 998.2 2524.0 995.0Z" fill="#a9a7a3" opacity="1"/>
<path d="M2324.0 1034.0C2320.4 1027.2 2324.2 1010.6 2330.0 1000.0C2335.8 989.4 2343.4 983.6 2356.0 975.0C2368.6 966.4 2384.9 956.9 2400.0 952.0C2415.1 947.1 2429.4 946.6 2440.0 948.0C2450.6 949.4 2456.3 950.6 2459.0 960.0C2461.7 969.4 2458.4 989.2 2455.0 1000.0C2451.6 1010.8 2449.9 1014.2 2440.0 1020.0C2430.1 1025.8 2416.2 1028.8 2400.0 1032.0C2383.8 1035.2 2363.7 1037.6 2350.0 1038.0C2336.3 1038.4 2327.6 1040.8 2324.0 1034.0Z" fill="#8a8782" opacity="1"/>
<path d="M2324.0 1034.0C2320.4 1027.2 2324.2 1010.6 2330.0 1000.0C2335.8 989.4 2343.4 983.6 2356.0 975.0C2368.6 966.4 2384.9 956.9 2400.0 952.0C2415.1 947.1 2429.4 946.6 2440.0 948.0C2450.6 949.4 2456.3 950.6 2459.0 960.0C2461.7 969.4 2458.4 989.2 2455.0 1000.0C2451.6 1010.8 2449.9 1014.2 2440.0 1020.0C2430.1 1025.8 2416.2 1028.8 2400.0 1032.0C2383.8 1035.2 2363.7 1037.6 2350.0 1038.0C2336.3 1038.4 2327.6 1040.8 2324.0 1034.0Z" fill="url(#pstripe)"/>
<path d="M2433.0 1022.0C2427.6 1019.3 2441.5 997.2 2450.0 990.0C2458.5 982.8 2466.7 983.8 2480.0 982.0C2493.3 980.2 2515.0 977.7 2524.0 980.0C2533.0 982.3 2537.9 990.5 2530.0 995.0C2522.1 999.5 2497.5 1000.1 2480.0 1005.0C2462.5 1009.9 2438.4 1024.7 2433.0 1022.0Z" fill="#c2c0bb" opacity="1"/>
<path d="M2412.0 942.0C2418.1 933.9 2445.0 934.1 2454.0 940.0C2463.0 945.9 2462.7 964.2 2462.0 975.0C2461.3 985.8 2457.6 998.2 2450.0 1000.0C2442.4 1001.8 2426.8 995.4 2420.0 985.0C2413.2 974.6 2405.9 950.1 2412.0 942.0Z" fill="#a9a7a2" opacity="1"/>
<path d="M2407.0 897.0C2412.4 888.5 2431.4 892.5 2440.0 893.0C2448.6 893.5 2452.5 892.4 2455.0 900.0C2457.5 907.6 2456.7 927.4 2454.0 935.0C2451.3 942.6 2447.9 941.1 2440.0 942.0C2432.1 942.9 2415.9 948.1 2410.0 940.0C2404.1 931.9 2401.6 905.5 2407.0 897.0Z" fill="#8a8782" opacity="1"/>
<path d="M1985.0 1030.0C1989.5 1021.0 2001.9 1016.1 2010.0 1008.0C2018.1 999.9 2021.0 988.2 2030.0 985.0C2039.0 981.8 2051.0 987.3 2060.0 990.0C2069.0 992.7 2069.2 992.8 2080.0 1000.0C2090.8 1007.2 2114.6 1019.2 2120.0 1030.0C2125.4 1040.8 2117.2 1051.9 2110.0 1060.0C2102.8 1068.1 2090.8 1072.3 2080.0 1075.0C2069.2 1077.7 2060.8 1073.7 2050.0 1075.0C2039.2 1076.3 2029.4 1081.5 2020.0 1082.0C2010.6 1082.5 2004.3 1082.3 1998.0 1078.0C1991.7 1073.7 1987.3 1066.6 1985.0 1058.0C1982.7 1049.4 1980.5 1039.0 1985.0 1030.0Z" fill="#d8d6d1" opacity="1"/>
<path d="M1985.0 1030.0C1989.5 1021.0 2001.9 1016.1 2010.0 1008.0C2018.1 999.9 2021.0 988.2 2030.0 985.0C2039.0 981.8 2051.0 987.3 2060.0 990.0C2069.0 992.7 2069.2 992.8 2080.0 1000.0C2090.8 1007.2 2114.6 1019.2 2120.0 1030.0C2125.4 1040.8 2117.2 1051.9 2110.0 1060.0C2102.8 1068.1 2090.8 1072.3 2080.0 1075.0C2069.2 1077.7 2060.8 1073.7 2050.0 1075.0C2039.2 1076.3 2029.4 1081.5 2020.0 1082.0C2010.6 1082.5 2004.3 1082.3 1998.0 1078.0C1991.7 1073.7 1987.3 1066.6 1985.0 1058.0C1982.7 1049.4 1980.5 1039.0 1985.0 1030.0Z" fill="url(#pgrass)"/>
<path d="M2094.0 1064.0C2095.4 1058.6 2111.7 1045.0 2120.0 1040.0C2128.3 1035.0 2135.3 1031.7 2140.0 1036.0C2144.7 1040.3 2147.4 1059.3 2146.0 1064.0C2144.6 1068.7 2138.1 1060.9 2132.0 1062.0C2125.9 1063.1 2118.8 1069.6 2112.0 1070.0C2105.2 1070.4 2092.6 1069.4 2094.0 1064.0Z" fill="#97948f" opacity="1"/>
<path d="M2146.0 1052.0C2150.1 1048.0 2163.5 1046.0 2175.0 1046.0C2186.5 1046.0 2206.2 1047.7 2210.0 1052.0C2213.8 1056.3 2203.2 1065.0 2196.0 1070.0C2188.8 1075.0 2177.9 1080.4 2170.0 1080.0C2162.1 1079.6 2156.3 1073.0 2152.0 1068.0C2147.7 1063.0 2141.9 1056.0 2146.0 1052.0Z" fill="#9d9a95" opacity="1"/>
<path d="M2060.0 982.0C2063.6 979.1 2074.0 976.8 2078.0 980.0C2082.0 983.2 2083.8 995.3 2082.0 1000.0C2080.2 1004.7 2072.3 1006.7 2068.0 1006.0C2063.7 1005.3 2059.4 1000.3 2058.0 996.0C2056.6 991.7 2056.4 984.9 2060.0 982.0Z" fill="#b5b3ae" opacity="1"/>
<path d="M2094.0 893.0C2097.6 887.2 2111.0 885.8 2116.0 888.0C2121.0 890.2 2123.4 898.3 2122.0 905.0C2120.6 911.7 2112.7 922.3 2108.0 925.0C2103.3 927.7 2098.5 925.8 2096.0 920.0C2093.5 914.2 2090.4 898.8 2094.0 893.0Z" fill="#b0aea9" opacity="1"/>
<g fill="none" stroke="#5e7386" stroke-width="2">
<polyline points="1878,748 1912,748 1914,929"/>
<polyline points="2072,730 2098,730 2099,833"/>
<polyline points="2198,730 2174,730 2174,800"/>
<polyline points="1832,807 1865,807 1868,944"/>
<polyline points="1801,856 1840,856 1842,934"/>
<polyline points="1757,927 1792,927 1793,996"/>
<polyline points="1961,807 1961,829"/>
<polyline points="1936,829 1986,829"/>
<polyline points="1936,829 1937,926"/>
<polyline points="1986,829 1987,948"/>
<polyline points="2002,971 2002,994"/>
<polyline points="1995,970 2030,970 2030,877 2019,877"/>
<polyline points="1905,998 1905,1079 1913,1079"/>
<polyline points="1855,1062 1855,1131 1934,1131 1934,1107"/>
<polyline points="1898,1131 1898,1160"/>
<polyline points="1713,1140 1756,1140 1756,1084"/>
<polyline points="2031,1130 2046,1130 2046,1041"/>
<polyline points="2085,1118 2073,1118 2072,991"/>
<polyline points="2197,1095 2173,1095 2173,1054"/>
<polyline points="2364,1066 2380,1066 2379,994"/>
<polyline points="2452,1091 2428,1091 2428,954"/>
<polyline points="2511,1060 2480,1060 2480,991"/>
<polyline points="2596,1024 2573,1024 2573,985"/>
<polyline points="2697,991 2715,991"/>
<polyline points="2749,892 2749,913 2700,913"/>
<polyline points="2441,758 2441,792"/>
<polyline points="2387,792 2493,792"/>
<polyline points="2387,792 2390,815"/>
<polyline points="2493,792 2493,825"/>
<polyline points="2320,792 2320,851 2413,851"/>
<polyline points="2552,727 2521,727 2523,918"/>
<polyline points="2635,776 2612,776 2612,887"/>
</g>
<g fill="none" stroke="#f4f4f0" stroke-width="2.5">
<polyline points="1914,880 1914,925"/>
<polyline points="1868,930 1868,942"/>
<polyline points="1842,915 1842,932"/>
<polyline points="1937,900 1937,924"/>
<polyline points="1987,925 1987,946"/>
<polyline points="2099,815 2099,831"/>
<polyline points="2174,785 2174,798"/>
<polyline points="2046,1000 2046,1039"/>
<polyline points="2072,960 2072,989"/>
<polyline points="2173,1030 2173,1052"/>
<polyline points="2379,975 2379,992"/>
<polyline points="2428,930 2428,952"/>
<polyline points="2480,970 2480,989"/>
<polyline points="2573,970 2573,983"/>
<polyline points="2523,850 2523,916"/>
<polyline points="2612,850 2612,885"/>
<polyline points="2390,800 2390,813"/>
</g>
<path d="M1592 1081 L1612 1060 L1647 1000 L1663 979 L1698 956 L1723 947 L1742 959 L1750 973 L1756 996 L1768 1014 L1775 1020 L1777 1010 L1783 1000 L1813 972 L1844 918 L1862 902 L1888 861 L1911 835 L1921 832 L1934 838 L1947 851 L1957 874 L1944 905 L1942 928 L1950 956 L1937 977 L1900 1004 L1878 1031 L1865 1055 L1859 1095 L1850 1115 L1824 1151 L1793 1169 L1747 1177 L1726 1171 L1718 1151 L1726 1115 L1710 1073 L1690 1060 L1654 1068 L1618 1089Z" fill="none" stroke="#e41a1c" stroke-width="5" stroke-linejoin="round"/>
<path d="M1586 1075L1598 1087M1598 1075L1586 1087M1606 1054L1618 1066M1618 1054L1606 1066M1641 994L1653 1006M1653 994L1641 1006M1657 973L1669 985M1669 973L1657 985M1692 950L1704 962M1704 950L1692 962M1717 941L1729 953M1729 941L1717 953M1736 953L1748 965M1748 953L1736 965M1744 967L1756 979M1756 967L1744 979M1750 990L1762 1002M1762 990L1750 1002M1762 1008L1774 1020M1774 1008L1762 1020M1769 1014L1781 1026M1781 1014L1769 1026M1771 1004L1783 1016M1783 1004L1771 1016M1777 994L1789 1006M1789 994L1777 1006M1807 966L1819 978M1819 966L1807 978M1838 912L1850 924M1850 912L1838 924M1856 896L1868 908M1868 896L1856 908M1882 855L1894 867M1894 855L1882 867M1905 829L1917 841M1917 829L1905 841M1915 826L1927 838M1927 826L1915 838M1928 832L1940 844M1940 832L1928 844M1941 845L1953 857M1953 845L1941 857M1951 868L1963 880M1963 868L1951 880M1938 899L1950 911M1950 899L1938 911M1936 922L1948 934M1948 922L1936 934M1944 950L1956 962M1956 950L1944 962M1931 971L1943 983M1943 971L1931 983M1894 998L1906 1010M1906 998L1894 1010M1872 1025L1884 1037M1884 1025L1872 1037M1859 1049L1871 1061M1871 1049L1859 1061M1853 1089L1865 1101M1865 1089L1853 1101M1844 1109L1856 1121M1856 1109L1844 1121M1818 1145L1830 1157M1830 1145L1818 1157M1787 1163L1799 1175M1799 1163L1787 1175M1741 1171L1753 1183M1753 1171L1741 1183M1720 1165L1732 1177M1732 1165L1720 1177M1712 1145L1724 1157M1724 1145L1712 1157M1720 1109L1732 1121M1732 1109L1720 1121M1704 1067L1716 1079M1716 1067L1704 1079M1684 1054L1696 1066M1696 1054L1684 1066M1648 1062L1660 1074M1660 1062L1648 1074M1612 1083L1624 1095M1624 1083L1612 1095" stroke="#ff0000" stroke-width="2"/>
<path d="M2000 1028 L2016 1011 L2027 999 L2045 964 L2049 950 L2099 923 L2148 908 L2173 886 L2175 877 L2165 872 L2124 884 L2082 906 L2060 914 L2034 912 L2037 875 L2047 863 L2070 842 L2078 826 L2087 809 L2107 793 L2128 797 L2173 789 L2194 791 L2210 807 L2212 842 L2225 859 L2262 834 L2268 830 L2328 820 L2379 816 L2491 825 L2528 816 L2544 804 L2559 812 L2577 822 L2627 815 L2664 816 L2676 828 L2697 859 L2709 878 L2711 894 L2709 962 L2705 978 L2695 991 L2672 997 L2606 1009 L2524 1015 L2440 1028 L2371 1042 L2336 1042 L2282 1036 L2261 1040 L2237 1055 L2198 1067 L2171 1077 L2150 1065 L2132 1059 L2121 1061 L2092 1075 L2074 1092 L2066 1096 L2043 1080 L2035 1075 L2014 1089 L1996 1080 L1983 1059 L1979 1047 L1989 1030Z" fill="none" stroke="#e41a1c" stroke-width="5" stroke-linejoin="round"/>
<path d="M1994 1022L2006 1034M2006 1022L1994 1034M2010 1005L2022 1017M2022 1005L2010 1017M2021 993L2033 1005M2033 993L2021 1005M2039 958L2051 970M2051 958L2039 970M2043 944L2055 956M2055 944L2043 956M2093 917L2105 929M2105 917L2093 929M2142 902L2154 914M2154 902L2142 914M2167 880L2179 892M2179 880L2167 892M2169 871L2181 883M2181 871L2169 883M2159 866L2171 878M2171 866L2159 878M2118 878L2130 890M2130 878L2118 890M2076 900L2088 912M2088 900L2076 912M2054 908L2066 920M2066 908L2054 920M2028 906L2040 918M2040 906L2028 918M2031 869L2043 881M2043 869L2031 881M2041 857L2053 869M2053 857L2041 869M2064 836L2076 848M2076 836L2064 848M2072 820L2084 832M2084 820L2072 832M2081 803L2093 815M2093 803L2081 815M2101 787L2113 799M2113 787L2101 799M2122 791L2134 803M2134 791L2122 803M2167 783L2179 795M2179 783L2167 795M2188 785L2200 797M2200 785L2188 797M2204 801L2216 813M2216 801L2204 813M2206 836L2218 848M2218 836L2206 848M2219 853L2231 865M2231 853L2219 865M2256 828L2268 840M2268 828L2256 840M2262 824L2274 836M2274 824L2262 836M2322 814L2334 826M2334 814L2322 826M2373 810L2385 822M2385 810L2373 822M2485 819L2497 831M2497 819L2485 831M2522 810L2534 822M2534 810L2522 822M2538 798L2550 810M2550 798L2538 810M2553 806L2565 818M2565 806L2553 818M2571 816L2583 828M2583 816L2571 828M2621 809L2633 821M2633 809L2621 821M2658 810L2670 822M2670 810L2658 822M2670 822L2682 834M2682 822L2670 834M2691 853L2703 865M2703 853L2691 865M2703 872L2715 884M2715 872L2703 884M2705 888L2717 900M2717 888L2705 900M2703 956L2715 968M2715 956L2703 968M2699 972L2711 984M2711 972L2699 984M2689 985L2701 997M2701 985L2689 997M2666 991L2678 1003M2678 991L2666 1003M2600 1003L2612 1015M2612 1003L2600 1015M2518 1009L2530 1021M2530 1009L2518 1021M2434 1022L2446 1034M2446 1022L2434 1034M2365 1036L2377 1048M2377 1036L2365 1048M2330 1036L2342 1048M2342 1036L2330 1048M2276 1030L2288 1042M2288 1030L2276 1042M2255 1034L2267 1046M2267 1034L2255 1046M2231 1049L2243 1061M2243 1049L2231 1061M2192 1061L2204 1073M2204 1061L2192 1073M2165 1071L2177 1083M2177 1071L2165 1083M2144 1059L2156 1071M2156 1059L2144 1071M2126 1053L2138 1065M2138 1053L2126 1065M2115 1055L2127 1067M2127 1055L2115 1067M2086 1069L2098 1081M2098 1069L2086 1081M2068 1086L2080 1098M2080 1086L2068 1098M2060 1090L2072 1102M2072 1090L2060 1102M2037 1074L2049 1086M2049 1074L2037 1086M2029 1069L2041 1081M2041 1069L2029 1081M2008 1083L2020 1095M2020 1083L2008 1095M1990 1074L2002 1086M2002 1074L1990 1086M1977 1053L1989 1065M1989 1053L1977 1065M1973 1041L1985 1053M1985 1041L1973 1053M1983 1024L1995 1036M1995 1024L1983 1036" stroke="#ff0000" stroke-width="2"/>
<text x="1690" y="758" font-family="Liberation Sans" font-size="31" fill="#5e7386" stroke="#5e7386" stroke-width="0.7" textLength="178" lengthAdjust="spacingAndGlyphs">Bukalabang</text>
<text x="1936" y="801" font-family="Liberation Sans" font-size="31" fill="#5e7386" stroke="#5e7386" stroke-width="0.7" textLength="92" lengthAdjust="spacingAndGlyphs">Blagar</text>
<text x="1736" y="817" font-family="Liberation Sans" font-size="31" fill="#5e7386" stroke="#5e7386" stroke-width="0.7" textLength="86" lengthAdjust="spacingAndGlyphs">Teiwa</text>
<text x="1623" y="864" font-family="Liberation Sans" font-size="31" fill="#5e7386" stroke="#5e7386" stroke-width="0.7" textLength="160" lengthAdjust="spacingAndGlyphs">Nedebang</text>
<text x="1651" y="932" font-family="Liberation Sans" font-size="31" fill="#5e7386" stroke="#5e7386" stroke-width="0.7" textLength="96" lengthAdjust="spacingAndGlyphs">Di’ang</text>
<text x="1969" y="743" font-family="Liberation Sans" font-size="31" fill="#5e7386" stroke="#5e7386" stroke-width="0.7" textLength="101" lengthAdjust="spacingAndGlyphs">Adang</text>
<text x="2204" y="741" font-family="Liberation Sans" font-size="31" fill="#5e7386" stroke="#5e7386" stroke-width="0.7" textLength="103" lengthAdjust="spacingAndGlyphs">Kabola</text>
<text x="2374" y="756" font-family="Liberation Sans" font-size="31" fill="#5e7386" stroke="#5e7386" stroke-width="0.7" textLength="124" lengthAdjust="spacingAndGlyphs">Wersing</text>
<text x="2558" y="741" font-family="Liberation Sans" font-size="31" fill="#5e7386" stroke="#5e7386" stroke-width="0.7" textLength="95" lengthAdjust="spacingAndGlyphs">Manet</text>
<text x="2243" y="788" font-family="Liberation Sans" font-size="31" fill="#5e7386" stroke="#5e7386" stroke-width="0.7" textLength="126" lengthAdjust="spacingAndGlyphs">Kamang</text>
<text x="2641" y="788" font-family="Liberation Sans" font-size="31" fill="#5e7386" stroke="#5e7386" stroke-width="0.7" textLength="64" lengthAdjust="spacingAndGlyphs">Kula</text>
<text x="2711" y="886" font-family="Liberation Sans" font-size="31" fill="#5e7386" stroke="#5e7386" stroke-width="0.7" textLength="127" lengthAdjust="spacingAndGlyphs">Wersing</text>
<text x="2716" y="1002" font-family="Liberation Sans" font-size="31" fill="#5e7386" stroke="#5e7386" stroke-width="0.7" textLength="96" lengthAdjust="spacingAndGlyphs">Sawila</text>
<text x="2600" y="1038" font-family="Liberation Sans" font-size="31" fill="#5e7386" stroke="#5e7386" stroke-width="0.7" textLength="123" lengthAdjust="spacingAndGlyphs">Wersing</text>
<text x="2512" y="1072" font-family="Liberation Sans" font-size="31" fill="#5e7386" stroke="#5e7386" stroke-width="0.7" textLength="127" lengthAdjust="spacingAndGlyphs">Kiraman</text>
<text x="2453" y="1103" font-family="Liberation Sans" font-size="31" fill="#5e7386" stroke="#5e7386" stroke-width="0.7" textLength="62" lengthAdjust="spacingAndGlyphs">Tiee</text>
<text x="2206" y="1107" font-family="Liberation Sans" font-size="31" fill="#5e7386" stroke="#5e7386" stroke-width="0.7" textLength="46" lengthAdjust="spacingAndGlyphs">Kui</text>
<text x="2094" y="1132" font-family="Liberation Sans" font-size="31" fill="#5e7386" stroke="#5e7386" stroke-width="0.7" textLength="84" lengthAdjust="spacingAndGlyphs">Kafoa</text>
<text x="1954" y="1141" font-family="Liberation Sans" font-size="31" fill="#5e7386" stroke="#5e7386" stroke-width="0.7" textLength="69" lengthAdjust="spacingAndGlyphs">Klon</text>
<text x="1874" y="1194" font-family="Liberation Sans" font-size="31" fill="#5e7386" stroke="#5e7386" stroke-width="0.7" textLength="96" lengthAdjust="spacingAndGlyphs">Blagar</text>
<text x="1598" y="1128" font-family="Liberation Sans" font-size="31" fill="#5e7386" stroke="#5e7386" stroke-width="0.7" textLength="128" lengthAdjust="spacingAndGlyphs">Western</text>
<text x="1598" y="1157" font-family="Liberation Sans" font-size="31" fill="#5e7386" stroke="#5e7386" stroke-width="0.7" textLength="98" lengthAdjust="spacingAndGlyphs">Pantar</text>
<text x="1918" y="1089" font-family="Liberation Sans" font-size="31" fill="#5e7386" stroke="#5e7386" stroke-width="0.7" textLength="82" lengthAdjust="spacingAndGlyphs">Kaera</text>
<text x="1946" y="1007" font-family="Liberation Sans" font-size="31" fill="#5e7386" stroke="#5e7386" stroke-width="0.7" textLength="64" lengthAdjust="spacingAndGlyphs">Reta</text>
<text x="2249" y="1082" font-family="Liberation Sans" font-size="31" fill="#5e7386" stroke="#5e7386" stroke-width="0.7" textLength="112" lengthAdjust="spacingAndGlyphs">Papuna</text>
<text x="1701" y="1225" font-family="Liberation Sans" font-size="38" fill="#7d8e9c" stroke="#7d8e9c" stroke-width="0.7" textLength="126" lengthAdjust="spacingAndGlyphs" font-style="italic">Pantar</text>
<text x="2326" y="1177" font-family="Liberation Sans" font-size="38" fill="#7d8e9c" stroke="#7d8e9c" stroke-width="0.7" textLength="78" lengthAdjust="spacingAndGlyphs" font-style="italic">Alor</text>
<text x="2186" y="903" font-family="Liberation Sans" font-size="31" fill="#8a8780" stroke="#dcdad4" stroke-width="3" paint-order="stroke" textLength="108" lengthAdjust="spacingAndGlyphs">Hamap</text>
<text x="2090" y="968" font-family="Liberation Sans" font-size="31" fill="#8a8780" stroke="#dcdad4" stroke-width="3" paint-order="stroke" textLength="44" lengthAdjust="spacingAndGlyphs">Kui</text>
<text x="2178" y="968" font-family="Liberation Sans" font-size="31" fill="#8a8780" stroke="#dcdad4" stroke-width="3" paint-order="stroke" textLength="67" lengthAdjust="spacingAndGlyphs">Abui</text>
<text x="2422" y="924" font-family="Liberation Sans" font-size="31" fill="#8a8780" stroke="#dcdad4" stroke-width="3" paint-order="stroke" textLength="68" lengthAdjust="spacingAndGlyphs">Moo</text>
<text x="2065" y="904" font-family="Liberation Sans" font-size="31" fill="#8a8780" stroke="#dcdad4" stroke-width="3" paint-order="stroke" textLength="14" lengthAdjust="spacingAndGlyphs">S</text>
<text x="1940" y="873" font-family="Liberation Sans" font-size="22" fill="#222" stroke="#fff" stroke-width="6" stroke-linejoin="round" paint-order="stroke" textLength="49" lengthAdjust="spacingAndGlyphs">Batu</text>
<text x="1711" y="994" font-family="Liberation Sans" font-size="22" fill="#222" stroke="#fff" stroke-width="6" stroke-linejoin="round" paint-order="stroke" textLength="46" lengthAdjust="spacingAndGlyphs">Leer</text>
<text x="1770" y="994" font-family="Liberation Sans" font-size="22" fill="#222" stroke="#fff" stroke-width="6" stroke-linejoin="round" paint-order="stroke" textLength="142" lengthAdjust="spacingAndGlyphs">Pulau Pantar</text>
<text x="2082" y="920" font-family="Liberation Sans" font-size="22" fill="#222" stroke="#fff" stroke-width="6" stroke-linejoin="round" paint-order="stroke" textLength="60" lengthAdjust="spacingAndGlyphs">Moru</text>
<text x="2271" y="834" font-family="Liberation Sans" font-size="22" fill="#222" stroke="#fff" stroke-width="6" stroke-linejoin="round" paint-order="stroke" textLength="51" lengthAdjust="spacingAndGlyphs">Luba</text>
<text x="2325" y="930" font-family="Liberation Sans" font-size="22" fill="#222" stroke="#fff" stroke-width="6" stroke-linejoin="round" paint-order="stroke" textLength="116" lengthAdjust="spacingAndGlyphs">Pulau Alor</text>
<text x="1731" y="1090" font-family="Liberation Sans" font-size="22" fill="#222" stroke="#fff" stroke-width="6" stroke-linejoin="round" paint-order="stroke" textLength="52" lengthAdjust="spacingAndGlyphs">Tude</text>
<text x="1809" y="1087" font-family="Liberation Sans" font-size="22" fill="#222" stroke="#fff" stroke-width="6" stroke-linejoin="round" paint-order="stroke" textLength="67" lengthAdjust="spacingAndGlyphs">Mauta</text>
<rect x="2527" y="1118" width="271" height="102" fill="none" stroke="#5b6b78" stroke-width="2"/>
<rect x="2555" y="1157" width="209" height="5" fill="#5e7386"/><rect x="2607" y="1158" width="52" height="3" fill="#c8dff0"/><rect x="2712" y="1158" width="52" height="3" fill="#c8dff0"/>
<text x="2549" y="1153" font-family="Liberation Sans" font-size="17" fill="#5e7386" stroke="#5e7386" stroke-width="0.7" textLength="9" lengthAdjust="spacingAndGlyphs">0</text>
<text x="2751" y="1153" font-family="Liberation Sans" font-size="17" fill="#5e7386" stroke="#5e7386" stroke-width="0.7" textLength="22" lengthAdjust="spacingAndGlyphs">20</text>
<text x="2620" y="1180" font-family="Liberation Sans" font-size="19" fill="#5e7386" stroke="#5e7386" stroke-width="0.7" textLength="85" lengthAdjust="spacingAndGlyphs">kilometres</text>
<text x="2596" y="1206" font-family="Liberation Sans" font-size="17" fill="#5e7386" stroke="#5e7386" stroke-width="0.7" textLength="130" lengthAdjust="spacingAndGlyphs">© ACJ Schapper</text>
<polyline points="2864,1058 2700,1110 2575,1155 2571,1259" fill="none" stroke="#c0b8ae" stroke-width="1.4"/>
<text x="975" y="906" font-family="Liberation Sans" font-size="25" fill="#333" stroke="#fff" stroke-width="5" stroke-linejoin="round" paint-order="stroke" textLength="53" lengthAdjust="spacingAndGlyphs">Loga</text>
<text x="891" y="938" font-family="Liberation Sans" font-size="25" fill="#333" stroke="#fff" stroke-width="5" stroke-linejoin="round" paint-order="stroke" textLength="61" lengthAdjust="spacingAndGlyphs">Pulau</text>
<text x="875" y="972" font-family="Liberation Sans" font-size="25" fill="#333" stroke="#fff" stroke-width="5" stroke-linejoin="round" paint-order="stroke" textLength="94" lengthAdjust="spacingAndGlyphs">Adonara</text>
<text x="749" y="963" font-family="Liberation Sans" font-size="25" fill="#333" stroke="#fff" stroke-width="5" stroke-linejoin="round" paint-order="stroke" textLength="82" lengthAdjust="spacingAndGlyphs">rantuka</text>
<text x="1097" y="1004" font-family="Liberation Sans" font-size="25" fill="#333" stroke="#fff" stroke-width="5" stroke-linejoin="round" paint-order="stroke" textLength="107" lengthAdjust="spacingAndGlyphs">Lewoleba</text>
<text x="1234" y="993" font-family="Liberation Sans" font-size="25" fill="#333" stroke="#fff" stroke-width="5" stroke-linejoin="round" paint-order="stroke" textLength="62" lengthAdjust="spacingAndGlyphs">Pulau</text>
<text x="1216" y="1027" font-family="Liberation Sans" font-size="25" fill="#333" stroke="#fff" stroke-width="5" stroke-linejoin="round" paint-order="stroke" textLength="98" lengthAdjust="spacingAndGlyphs">Lembata</text>
<text x="1479" y="907" font-family="Liberation Sans" font-size="25" fill="#333" stroke="#fff" stroke-width="5" stroke-linejoin="round" paint-order="stroke" textLength="57" lengthAdjust="spacingAndGlyphs">Bean</text>
<text x="833" y="1079" font-family="Liberation Sans" font-size="25" fill="#333" stroke="#fff" stroke-width="5" stroke-linejoin="round" paint-order="stroke" textLength="52" lengthAdjust="spacingAndGlyphs">Liwo</text>
<text x="1069" y="1091" font-family="Liberation Sans" font-size="25" fill="#333" stroke="#fff" stroke-width="5" stroke-linejoin="round" paint-order="stroke" textLength="52" lengthAdjust="spacingAndGlyphs">Bata</text>
<text x="1088" y="1186" font-family="Liberation Sans" font-size="25" fill="#333" stroke="#fff" stroke-width="5" stroke-linejoin="round" paint-order="stroke" textLength="127" lengthAdjust="spacingAndGlyphs">Lamalera A</text>
<text x="2688" y="1405" font-family="Liberation Sans" font-size="25" fill="#333" stroke="#fff" stroke-width="5" stroke-linejoin="round" paint-order="stroke" textLength="77" lengthAdjust="spacingAndGlyphs">Atabae</text>
<text x="2506" y="1525" font-family="Liberation Sans" font-size="25" fill="#333" stroke="#fff" stroke-width="5" stroke-linejoin="round" paint-order="stroke" textLength="107" lengthAdjust="spacingAndGlyphs">Batugade</text>
</g></svg>
<div class="a" style="left:1032px;top:359px;width:214px;height:50px;background:#ffffdc;border:2px solid #000"></div>
<div class="t" style="left:1040.4px;top:370.0px;font-size:30px;color:#000;font-weight:bold;transform:scaleX(0.9859);transform-origin:0 0;">Split Features</div>
<svg class="a" style="left:1024px;top:324px" width="28" height="40" viewBox="0 0 28 40"><path d="M2 2V29L8.5 23.5L13 34.5C13.6 36 15 36.3 16.2 35.8L17.6 35.2C18.8 34.6 19.2 33.4 18.6 32L14.5 22H23Z" fill="#2a2a2a" stroke="#fff" stroke-width="2" stroke-linejoin="round"/></svg>
<div class="a" style="left:9px;top:1566px;width:535px;height:52px;border:2px solid #c4c4c4;border-radius:5px;background:#fff"></div>
<svg class="a" style="left:24px;top:1578px" width="28" height="28" viewBox="0 0 28 28"><circle cx="11" cy="11" r="8" fill="none" stroke="#777" stroke-width="2.6"/><path d="M17 17L25 25" stroke="#777" stroke-width="3.2"/></svg>
<div class="t" style="left:66px;top:1578.5px;font-size:29px;color:#8a8a8a;transform:scaleX(1.0318);transform-origin:0 0;">Type to locate (Ctrl+K)</div>
<div class="t" style="left:1113px;top:1576.9px;font-size:29px;color:#000;transform:scaleX(0.8338);transform-origin:0 0;">Coordinate</div>
<div class="a" style="left:1240px;top:1569px;width:218px;height:47px;border:2px solid #c4c4c4;border-radius:5px;background:#fff"></div>
<div class="t" style="left:1257px;top:1576.9px;font-size:29px;color:#000;transform:scaleX(0.7996);transform-origin:0 0;">-7.674°, 123.342°</div>
<svg class="a" style="left:1465px;top:1574px" width="34" height="36" viewBox="0 0 34 36"><path d="M6 8C10 2 20 2 24 8L28 24C28 30 20 34 14 32C8 30 4 24 4 18Z" fill="#fff" stroke="#111" stroke-width="2.5"/><path d="M12 6L14 16" stroke="#111" stroke-width="3"/><circle cx="20" cy="26" r="4" fill="none" stroke="#111" stroke-width="2"/><path d="M26 6L30 2M30 10L34 8M2 22L0 26" stroke="#222" stroke-width="1.5" stroke-dasharray="2 2"/></svg>
<div class="t" style="left:1524px;top:1576.9px;font-size:29px;color:#000;transform:scaleX(0.7499);transform-origin:0 0;">Scale</div>
<div class="a" style="left:1587px;top:1566px;width:193px;height:53px;border:2px solid #c4c4c4;border-radius:5px;background:#fff"></div>
<div class="t" style="left:1594.4px;top:1576.9px;font-size:29px;color:#000;transform:scaleX(0.8127);transform-origin:0 0;">1:836972</div>
<div class="a" style="left:1739px;top:1568px;width:39px;height:49px;background:linear-gradient(90deg,#fafafa,#efefef);border-left:1px solid #d0d0d0"></div>
<svg class="a" style="left:1752px;top:1588px" width="17" height="9"><path d="M0 0H17L8.5 9Z" fill="#555"/></svg>
<svg class="a" style="left:1803px;top:1578px" width="26" height="30" viewBox="0 0 26 30"><path d="M6 14V9C6 2 20 2 20 9V14" fill="none" stroke="#666" stroke-width="3"/><rect x="2" y="13" width="22" height="16" rx="3" fill="#666"/></svg>
<div class="t" style="left:1847px;top:1576.9px;font-size:29px;color:#000;transform:scaleX(0.8552);transform-origin:0 0;">Magnifier</div>
<div class="a" style="left:1960px;top:1567px;width:184px;height:51px;border:2px solid #c4c4c4;border-radius:5px;background:#fff"></div>
<div class="t" style="left:1967px;top:1576.9px;font-size:29px;color:#000;transform:scaleX(0.7820);transform-origin:0 0;">100%</div>
<div class="a" style="left:2114px;top:1570px;width:1px;height:45px;background:#aaa"></div>
<svg class="a" style="left:2122px;top:1578px" width="14" height="28"><path d="M0 8L7 0L14 8Z M0 20L7 28L14 20Z" fill="#555"/></svg>
<div class="t" style="left:2162px;top:1576.9px;font-size:29px;color:#000;transform:scaleX(0.8564);transform-origin:0 0;">Rotation</div>
<div class="a" style="left:2275px;top:1568px;width:187px;height:48px;border:2px solid #c4c4c4;border-radius:5px;background:#fff"></div>
<div class="t" style="left:2284.5px;top:1576.9px;font-size:29px;color:#000;transform:scaleX(0.7671);transform-origin:0 0;">0.0 °</div>
<div class="a" style="left:2432px;top:1571px;width:1px;height:42px;background:#aaa"></div>
<svg class="a" style="left:2440px;top:1579px" width="14" height="28"><path d="M0 8L7 0L14 8Z M0 20L7 28L14 20Z" fill="#555"/></svg>
<svg class="a" style="left:2474px;top:1578px" width="28" height="28" viewBox="0 0 28 28"><rect x="1" y="1" width="26" height="26" fill="#fff" stroke="#9a9a9a" stroke-width="1.5"/><path d="M6 14L11 21L21 6" fill="none" stroke="#000" stroke-width="3"/></svg>
<div class="t" style="left:2512px;top:1576.9px;font-size:29px;color:#000;transform:scaleX(0.8200);transform-origin:0 0;">Render</div>
<svg class="a" style="left:2622px;top:1578px" width="32" height="30" viewBox="0 0 32 30"><ellipse cx="16" cy="14" rx="14" ry="13" fill="none" stroke="#555" stroke-width="2"/><path d="M2 14H30M16 1V27M6 6C12 10 20 10 26 6M6 22C12 18 20 18 26 22M16 1C8 8 8 20 16 27M16 1C24 8 24 20 16 27" fill="none" stroke="#555" stroke-width="1.5"/></svg>
<div class="t" style="left:2658px;top:1576.9px;font-size:29px;color:#000;transform:scaleX(0.7508);transform-origin:0 0;">EPSG:4326</div>
<svg class="a" style="left:2821px;top:1577px" width="36" height="34" viewBox="0 0 36 34"><path d="M18 2C28 2 34 8 34 16C34 24 28 29 20 29L28 34L14 29C6 28 2 22 2 16C2 8 8 2 18 2Z" fill="#555"/><circle cx="11" cy="16" r="2.5" fill="#fff"/><circle cx="18" cy="16" r="2.5" fill="#fff"/><circle cx="25" cy="16" r="2.5" fill="#fff"/></svg>
</body></html>
